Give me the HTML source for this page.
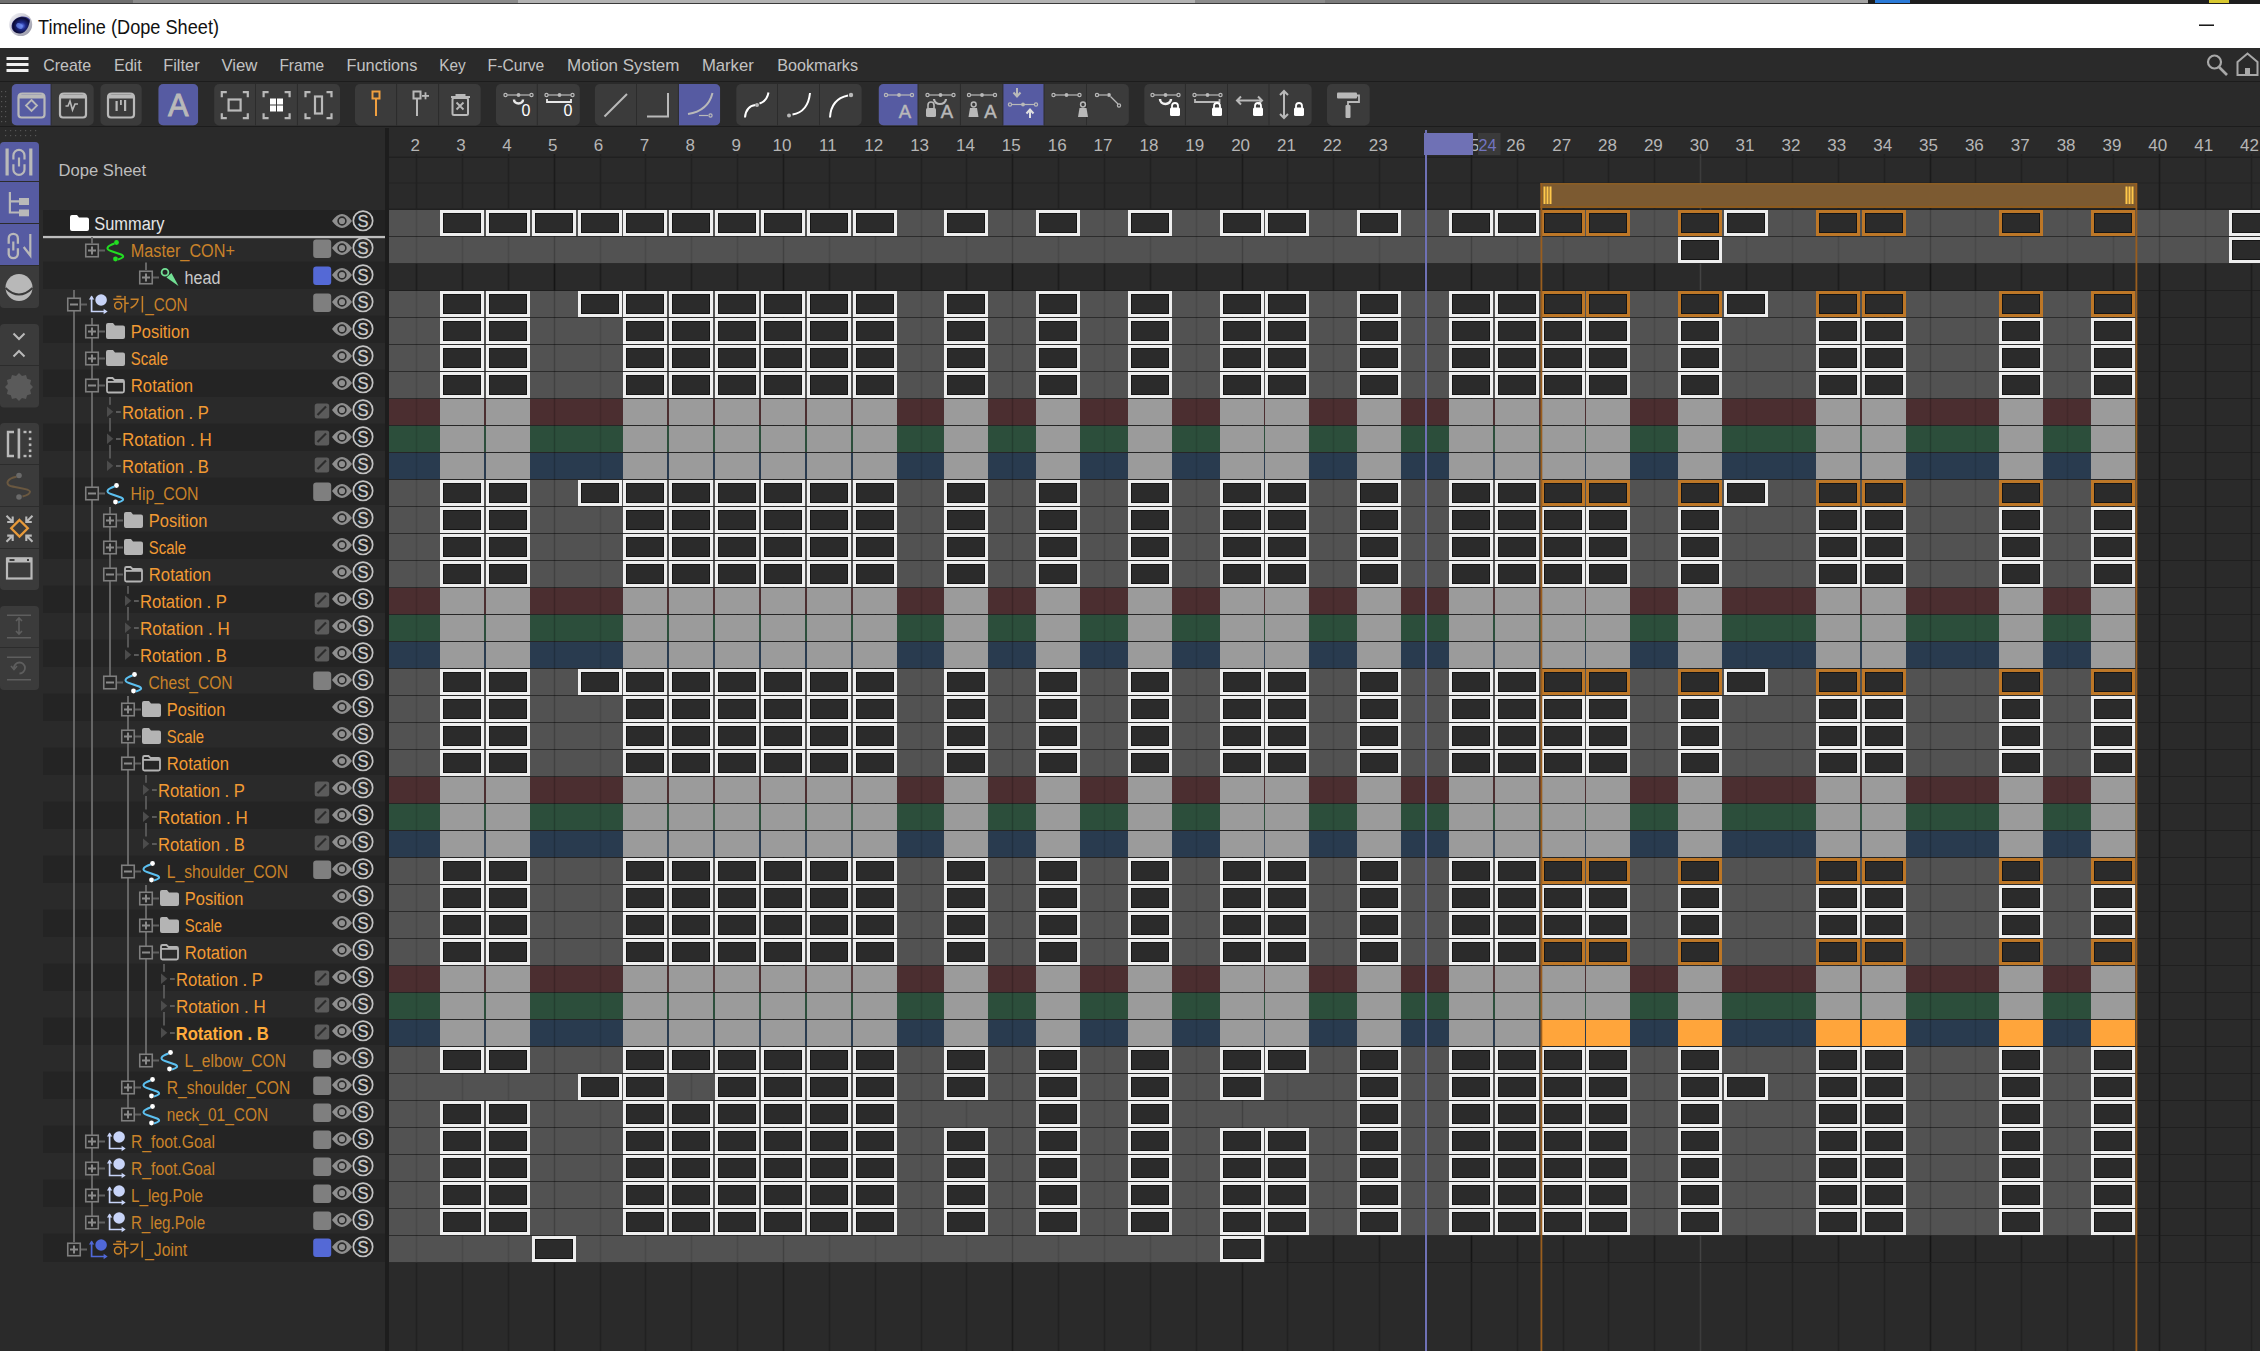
<!DOCTYPE html>
<html><head><meta charset="utf-8"><title>Timeline (Dope Sheet)</title>
<style>
html,body{margin:0;padding:0;width:2260px;height:1351px;overflow:hidden;background:#282828;}
svg{display:block;font-family:"Liberation Sans",sans-serif;}
</style></head><body>
<svg width="2260" height="1351" viewBox="0 0 2260 1351">
<rect x="0" y="0" width="2260" height="1351" fill="#2a2a2a"/>
<rect x="0" y="0" width="133" height="4" fill="#6f6f6f"/>
<rect x="133" y="0" width="385" height="4" fill="#8b8b8b"/>
<rect x="518" y="0" width="677" height="4" fill="#b3b3b3"/>
<rect x="1195" y="0" width="130" height="4" fill="#8c8c8c"/>
<rect x="1325" y="0" width="275" height="4" fill="#7b7b7b"/>
<rect x="1600" y="0" width="268" height="4" fill="#a3a3a3"/>
<rect x="1868" y="0" width="392" height="4" fill="#1e1e1e"/>
<rect x="1875" y="0" width="35" height="3" fill="#2a7ad8"/>
<rect x="2209" y="0" width="20" height="3" fill="#d8c830"/>
<rect x="0" y="3" width="1868" height="1" fill="#3a3a3a"/>
<rect x="0" y="4" width="2260" height="44" fill="#ffffff"/>
<defs><radialGradient id="c4d" cx="0.55" cy="0.55" r="0.6"><stop offset="0" stop-color="#6a88ff"/><stop offset="0.35" stop-color="#1e2a8a"/><stop offset="0.8" stop-color="#0a0a30"/><stop offset="1" stop-color="#5050c0"/></radialGradient><linearGradient id="c4s" x1="0" y1="0" x2="1" y2="1"><stop offset="0" stop-color="#f8f8fc"/><stop offset="1" stop-color="#9090a0"/></linearGradient></defs>
<circle cx="20.7" cy="24.5" r="11.5" fill="url(#c4s)"/>
<path d="M 30 19.5 C 26 14.5 15 16 12 23.5 C 10 30 15 34 20.5 33.5 C 26 33 29.5 26 30 19.5 Z" fill="url(#c4d)"/>
<ellipse cx="19.5" cy="26" rx="3.5" ry="2.5" fill="#7090f0" opacity="0.7" transform="rotate(30 19.5 26)"/>
<text x="38" y="34.2" font-size="19.3" fill="#111111" textLength="181" lengthAdjust="spacingAndGlyphs">Timeline (Dope Sheet)</text>
<rect x="2199" y="24.5" width="15" height="1.4" fill="#000000"/>
<rect x="0" y="48" width="2260" height="33" fill="#2a2a2a"/>
<rect x="6.5" y="57" width="22" height="3" fill="#f0f0f0"/>
<rect x="6.5" y="63" width="22" height="3" fill="#f0f0f0"/>
<rect x="6.5" y="69" width="22" height="3" fill="#f0f0f0"/>
<text x="43.2" y="70.8" font-size="17" fill="#c2c2c2" textLength="47.9" lengthAdjust="spacingAndGlyphs">Create</text>
<text x="113.9" y="70.8" font-size="17" fill="#c2c2c2" textLength="27.8" lengthAdjust="spacingAndGlyphs">Edit</text>
<text x="163.2" y="70.8" font-size="17" fill="#c2c2c2" textLength="36.4" lengthAdjust="spacingAndGlyphs">Filter</text>
<text x="221.4" y="70.8" font-size="17" fill="#c2c2c2" textLength="36" lengthAdjust="spacingAndGlyphs">View</text>
<text x="279.4" y="70.8" font-size="17" fill="#c2c2c2" textLength="44.8" lengthAdjust="spacingAndGlyphs">Frame</text>
<text x="346.6" y="70.8" font-size="17" fill="#c2c2c2" textLength="70.7" lengthAdjust="spacingAndGlyphs">Functions</text>
<text x="439.3" y="70.8" font-size="17" fill="#c2c2c2" textLength="26.5" lengthAdjust="spacingAndGlyphs">Key</text>
<text x="487.6" y="70.8" font-size="17" fill="#c2c2c2" textLength="56.6" lengthAdjust="spacingAndGlyphs">F-Curve</text>
<text x="567" y="70.8" font-size="17" fill="#c2c2c2" textLength="112.5" lengthAdjust="spacingAndGlyphs">Motion System</text>
<text x="701.9" y="70.8" font-size="17" fill="#c2c2c2" textLength="51.9" lengthAdjust="spacingAndGlyphs">Marker</text>
<text x="777.2" y="70.8" font-size="17" fill="#c2c2c2" textLength="80.8" lengthAdjust="spacingAndGlyphs">Bookmarks</text>
<circle cx="2214.5" cy="62" r="6.5" fill="none" stroke="#a8a8a8" stroke-width="2.2"/>
<line x1="2219" y1="67" x2="2227" y2="75" stroke="#a8a8a8" stroke-width="2.6"/>
<path d="M 2237.5 75 L 2237.5 62 L 2247.5 53.5 L 2257.5 62 L 2257.5 75 Z" fill="none" stroke="#a8a8a8" stroke-width="2"/>
<rect x="2245" y="68" width="5" height="7" fill="#a8a8a8"/>
<rect x="0" y="81" width="2260" height="46" fill="#2a2a2a"/>
<rect x="0" y="81" width="2260" height="1" fill="#1c1c1c"/>
<rect x="0" y="126" width="2260" height="1" fill="#1c1c1c"/>
<rect x="1" y="91" width="1.2" height="1.2" fill="#555"/>
<rect x="5" y="91" width="1.2" height="1.2" fill="#555"/>
<rect x="1" y="96" width="1.2" height="1.2" fill="#555"/>
<rect x="5" y="96" width="1.2" height="1.2" fill="#555"/>
<rect x="1" y="101" width="1.2" height="1.2" fill="#555"/>
<rect x="5" y="101" width="1.2" height="1.2" fill="#555"/>
<rect x="1" y="106" width="1.2" height="1.2" fill="#555"/>
<rect x="5" y="106" width="1.2" height="1.2" fill="#555"/>
<rect x="1" y="111" width="1.2" height="1.2" fill="#555"/>
<rect x="5" y="111" width="1.2" height="1.2" fill="#555"/>
<rect x="1" y="116" width="1.2" height="1.2" fill="#555"/>
<rect x="5" y="116" width="1.2" height="1.2" fill="#555"/>
<rect x="1" y="121" width="1.2" height="1.2" fill="#555"/>
<rect x="5" y="121" width="1.2" height="1.2" fill="#555"/>
<rect x="11.6" y="84" width="82.1" height="41.5" fill="#3b3b3b" rx="5"/>
<clipPath id="cg11_0"><rect x="11.6" y="84" width="82.1" height="41.5" rx="5"/></clipPath>
<rect x="11.6" y="84" width="39.5" height="41.5" fill="#565ba2" clip-path="url(#cg11_0)"/>
<rect x="50.6" y="84" width="1" height="41.5" fill="#2c2c2c"/>
<rect x="100.4" y="84" width="41.3" height="41.5" fill="#3b3b3b" rx="5"/>
<rect x="158.3" y="84" width="39.9" height="41.5" fill="#3b3b3b" rx="5"/>
<clipPath id="cg158_0"><rect x="158.3" y="84" width="39.9" height="41.5" rx="5"/></clipPath>
<rect x="158.3" y="84" width="39.9" height="41.5" fill="#565ba2" clip-path="url(#cg158_0)"/>
<rect x="214.2" y="84" width="125.8" height="41.5" fill="#3b3b3b" rx="5"/>
<rect x="255" y="84" width="1" height="41.5" fill="#2c2c2c"/>
<rect x="296.9" y="84" width="1" height="41.5" fill="#2c2c2c"/>
<rect x="355" y="84" width="125.7" height="41.5" fill="#3b3b3b" rx="5"/>
<rect x="396.1" y="84" width="1" height="41.5" fill="#2c2c2c"/>
<rect x="438.1" y="84" width="1" height="41.5" fill="#2c2c2c"/>
<rect x="496" y="84" width="83.8" height="41.5" fill="#3b3b3b" rx="5"/>
<rect x="536.8" y="84" width="1" height="41.5" fill="#2c2c2c"/>
<rect x="594.9" y="84" width="125.3" height="41.5" fill="#3b3b3b" rx="5"/>
<clipPath id="cg594_2"><rect x="594.9" y="84" width="125.3" height="41.5" rx="5"/></clipPath>
<rect x="678.4" y="84" width="41.8" height="41.5" fill="#565ba2" clip-path="url(#cg594_2)"/>
<rect x="636" y="84" width="1" height="41.5" fill="#2c2c2c"/>
<rect x="677.9" y="84" width="1" height="41.5" fill="#2c2c2c"/>
<rect x="736.3" y="84" width="125.3" height="41.5" fill="#3b3b3b" rx="5"/>
<rect x="777" y="84" width="1" height="41.5" fill="#2c2c2c"/>
<rect x="819" y="84" width="1" height="41.5" fill="#2c2c2c"/>
<rect x="878.6" y="84" width="250.2" height="41.5" fill="#3b3b3b" rx="5"/>
<clipPath id="cg878_0"><rect x="878.6" y="84" width="250.2" height="41.5" rx="5"/></clipPath>
<rect x="878.6" y="84" width="39.4" height="41.5" fill="#565ba2" clip-path="url(#cg878_0)"/>
<clipPath id="cg878_3"><rect x="878.6" y="84" width="250.2" height="41.5" rx="5"/></clipPath>
<rect x="1002.9" y="84" width="41.1" height="41.5" fill="#565ba2" clip-path="url(#cg878_3)"/>
<rect x="917.5" y="84" width="1" height="41.5" fill="#2c2c2c"/>
<rect x="959.9" y="84" width="1" height="41.5" fill="#2c2c2c"/>
<rect x="1002.4" y="84" width="1" height="41.5" fill="#2c2c2c"/>
<rect x="1043.5" y="84" width="1" height="41.5" fill="#2c2c2c"/>
<rect x="1086" y="84" width="1" height="41.5" fill="#2c2c2c"/>
<rect x="1144.3" y="84" width="167.3" height="41.5" fill="#3b3b3b" rx="5"/>
<rect x="1184.9" y="84" width="1" height="41.5" fill="#2c2c2c"/>
<rect x="1227" y="84" width="1" height="41.5" fill="#2c2c2c"/>
<rect x="1268.5" y="84" width="1" height="41.5" fill="#2c2c2c"/>
<rect x="1327" y="84" width="42.7" height="41.5" fill="#3b3b3b" rx="5"/>
<path d="M 18.5 97.5 Q 18.5 93.5 22.5 93.5 L 40.5 93.5 Q 44.5 93.5 44.5 97.5 L 44.5 114.5 Q 44.5 117.5 41.5 117.5 L 21.5 117.5 Q 18.5 117.5 18.5 114.5 Z" fill="none" stroke="#b9b9b9" stroke-width="2.2"/>
<rect x="18.5" y="94.5" width="26" height="4" fill="#b9b9b9" rx="1"/>
<path d="M 31.5 100 L 37 105.5 L 31.5 111 L 26 105.5 Z" fill="none" stroke="#b9b9b9" stroke-width="1.8"/>
<path d="M 60 97.5 Q 60 93.5 64 93.5 L 82 93.5 Q 86 93.5 86 97.5 L 86 114.5 Q 86 117.5 83 117.5 L 63 117.5 Q 60 117.5 60 114.5 Z" fill="none" stroke="#b9b9b9" stroke-width="2.2"/>
<rect x="60" y="94.5" width="26" height="4" fill="#b9b9b9" rx="1"/>
<path d="M 65.5 106 L 68 106 L 70 101 L 72.5 110 L 75 104 L 78 104" fill="none" stroke="#b9b9b9" stroke-width="1.6"/>
<path d="M 108 97.5 Q 108 93.5 112 93.5 L 130 93.5 Q 134 93.5 134 97.5 L 134 114.5 Q 134 117.5 131 117.5 L 111 117.5 Q 108 117.5 108 114.5 Z" fill="none" stroke="#b9b9b9" stroke-width="2.2"/>
<rect x="108" y="94.5" width="26" height="4" fill="#b9b9b9" rx="1"/>
<rect x="115.5" y="101" width="2.2" height="10" fill="#b9b9b9"/>
<rect x="120" y="100" width="1.8" height="5" fill="#b9b9b9"/>
<rect x="124" y="100" width="2.2" height="11" fill="#b9b9b9"/>
<text x="178.2" y="116.2" font-size="31" fill="#b9b9b9" text-anchor="middle" textLength="20.5" lengthAdjust="spacingAndGlyphs" stroke="#b9b9b9" stroke-width="0.9">A</text>
<path d="M 221.8 97.2 L 221.8 92.2 L 226.8 92.2" fill="none" stroke="#b9b9b9" stroke-width="2.2"/>
<path d="M 221.8 113.2 L 221.8 118.2 L 226.8 118.2" fill="none" stroke="#b9b9b9" stroke-width="2.2"/>
<path d="M 247.8 97.2 L 247.8 92.2 L 242.8 92.2" fill="none" stroke="#b9b9b9" stroke-width="2.2"/>
<path d="M 247.8 113.2 L 247.8 118.2 L 242.8 118.2" fill="none" stroke="#b9b9b9" stroke-width="2.2"/>
<rect x="228.6" y="99.5" width="12" height="11" fill="none" stroke="#b9b9b9" stroke-width="2.2"/>
<path d="M 263.6 97.2 L 263.6 92.2 L 268.6 92.2" fill="none" stroke="#b9b9b9" stroke-width="2.2"/>
<path d="M 263.6 113.2 L 263.6 118.2 L 268.6 118.2" fill="none" stroke="#b9b9b9" stroke-width="2.2"/>
<path d="M 289.6 97.2 L 289.6 92.2 L 284.6 92.2" fill="none" stroke="#b9b9b9" stroke-width="2.2"/>
<path d="M 289.6 113.2 L 289.6 118.2 L 284.6 118.2" fill="none" stroke="#b9b9b9" stroke-width="2.2"/>
<rect x="270" y="98.5" width="6" height="6" fill="#ffffff"/>
<rect x="270" y="105.5" width="6" height="6" fill="#ffffff"/>
<rect x="277" y="98.5" width="6" height="6" fill="#ffffff"/>
<rect x="277" y="105.5" width="6" height="6" fill="#ffffff"/>
<path d="M 305.5 97.2 L 305.5 92.2 L 310.5 92.2" fill="none" stroke="#b9b9b9" stroke-width="2.2"/>
<path d="M 305.5 113.2 L 305.5 118.2 L 310.5 118.2" fill="none" stroke="#b9b9b9" stroke-width="2.2"/>
<path d="M 331.5 97.2 L 331.5 92.2 L 326.5 92.2" fill="none" stroke="#b9b9b9" stroke-width="2.2"/>
<path d="M 331.5 113.2 L 331.5 118.2 L 326.5 118.2" fill="none" stroke="#b9b9b9" stroke-width="2.2"/>
<rect x="315" y="96.5" width="7" height="17" fill="none" stroke="#b9b9b9" stroke-width="2.2"/>
<rect x="372.5" y="91.5" width="7" height="7" fill="none" stroke="#f0a040" stroke-width="2"/>
<rect x="375" y="99" width="2" height="17" fill="#f0a040"/>
<rect x="413.5" y="91.5" width="7" height="7" fill="none" stroke="#b9b9b9" stroke-width="2"/>
<rect x="416" y="99" width="2" height="17" fill="#b9b9b9"/>
<rect x="422" y="95" width="7" height="1.8" fill="#b9b9b9"/>
<rect x="424.6" y="92.3" width="1.8" height="7" fill="#b9b9b9"/>
<path d="M 451 97 L 470 97" fill="none" stroke="#b9b9b9" stroke-width="2"/>
<rect x="455.5" y="94" width="10" height="2" fill="#b9b9b9"/>
<rect x="452.5" y="98" width="15.5" height="17" fill="none" rx="1.5" stroke="#b9b9b9" stroke-width="2"/>
<path d="M 456.5 102.5 L 463.5 109.5 M 463.5 102.5 L 456.5 109.5" fill="none" stroke="#b9b9b9" stroke-width="1.8"/>
<circle cx="505.5" cy="95" r="1.6" fill="none" stroke="#b9b9b9" stroke-width="1.2"/>
<circle cx="518.5" cy="95" r="1.9" fill="#b9b9b9"/>
<circle cx="531.5" cy="95" r="1.6" fill="none" stroke="#b9b9b9" stroke-width="1.2"/>
<line x1="507.1" y1="95" x2="529.9" y2="95" stroke="#b9b9b9" stroke-width="1.2"/>
<path d="M 514 99.5 A 4.5 4 0 0 0 523 99.5" fill="none" stroke="#e8e8e8" stroke-width="2.5"/>
<text x="526" y="116.3" font-size="16" fill="#ffffff" text-anchor="middle">0</text>
<circle cx="546.5" cy="95" r="1.6" fill="none" stroke="#b9b9b9" stroke-width="1.2"/>
<circle cx="559.5" cy="95" r="1.9" fill="#b9b9b9"/>
<circle cx="572.5" cy="95" r="1.6" fill="none" stroke="#b9b9b9" stroke-width="1.2"/>
<line x1="548.1" y1="95" x2="570.9" y2="95" stroke="#b9b9b9" stroke-width="1.2"/>
<path d="M 547 99 L 547 102 L 571 102 L 571 99" fill="none" stroke="#e8e8e8" stroke-width="1.8"/>
<text x="568" y="116.3" font-size="16" fill="#ffffff" text-anchor="middle">0</text>
<line x1="604.5" y1="116.5" x2="627" y2="94" stroke="#b9b9b9" stroke-width="2"/>
<path d="M 647 116.5 L 668 116.5 L 668 93" fill="none" stroke="#b9b9b9" stroke-width="2"/>
<path d="M 688 114 Q 708 111 712.5 93" fill="none" stroke="#b9b9b9" stroke-width="2"/>
<path d="M 699 115.5 L 708 115.5" fill="none" stroke="#b9b9b9" stroke-width="1.2"/>
<circle cx="710.5" cy="115.5" r="1.6" fill="none" stroke="#b9b9b9" stroke-width="1.2"/>
<path d="M 745 117.5 Q 746 106 755.5 105 M 759.5 103.5 Q 767 101 768.5 92.5" fill="none" stroke="#ffffff" stroke-width="2"/>
<circle cx="757" cy="105" r="2" fill="#b9b9b9"/>
<path d="M 792.5 114.5 Q 808 112 810 93" fill="none" stroke="#ffffff" stroke-width="2"/>
<circle cx="789" cy="115.5" r="2" fill="#b9b9b9"/>
<path d="M 830 117.5 Q 831 99 848 95.5" fill="none" stroke="#ffffff" stroke-width="2"/>
<circle cx="851" cy="95" r="2.2" fill="#b9b9b9"/>
<circle cx="886" cy="95" r="1.6" fill="none" stroke="#b9b9b9" stroke-width="1.2"/>
<circle cx="899" cy="95" r="1.9" fill="#b9b9b9"/>
<circle cx="912" cy="95" r="1.6" fill="none" stroke="#b9b9b9" stroke-width="1.2"/>
<line x1="887.6" y1="95" x2="910.4" y2="95" stroke="#b9b9b9" stroke-width="1.2"/>
<text x="904.8" y="117.5" font-size="18.5" fill="#b9b9b9" text-anchor="middle" stroke="#b9b9b9" stroke-width="0.5">A</text>
<circle cx="927.5" cy="95" r="1.6" fill="none" stroke="#b9b9b9" stroke-width="1.2"/>
<circle cx="940.5" cy="95" r="1.9" fill="#b9b9b9"/>
<circle cx="953.5" cy="95" r="1.6" fill="none" stroke="#b9b9b9" stroke-width="1.2"/>
<line x1="929.1" y1="95" x2="951.9" y2="95" stroke="#b9b9b9" stroke-width="1.2"/>
<path d="M 934 99 A 6 5 0 0 0 946 99" fill="none" stroke="#b9b9b9" stroke-width="2.2"/>
<rect x="926" y="108" width="10" height="9" fill="#b9b9b9" rx="1.5"/>
<path d="M 928 108 L 928 105 A 3 3 0 0 1 934 105 L 934 108" fill="none" stroke="#b9b9b9" stroke-width="1.6"/>
<text x="947" y="117.5" font-size="18.5" fill="#b9b9b9" text-anchor="middle" stroke="#b9b9b9" stroke-width="0.5">A</text>
<circle cx="969" cy="95" r="1.6" fill="none" stroke="#b9b9b9" stroke-width="1.2"/>
<circle cx="982" cy="95" r="1.9" fill="#b9b9b9"/>
<circle cx="995" cy="95" r="1.6" fill="none" stroke="#b9b9b9" stroke-width="1.2"/>
<line x1="970.6" y1="95" x2="993.4" y2="95" stroke="#b9b9b9" stroke-width="1.2"/>
<path d="M 968.5 117 L 970 108 L 977 108 L 978.5 117 Z" fill="#b9b9b9"/>
<circle cx="973.7" cy="104.5" r="2.4" fill="none" stroke="#b9b9b9" stroke-width="1.5"/>
<text x="990.5" y="117.5" font-size="18.5" fill="#b9b9b9" text-anchor="middle" stroke="#b9b9b9" stroke-width="0.5">A</text>
<path d="M 1017 88 L 1017 96 M 1013.5 92.5 L 1017 96.5 L 1020.5 92.5" fill="none" stroke="#b9b9b9" stroke-width="2"/>
<circle cx="1010" cy="104.5" r="1.6" fill="none" stroke="#b9b9b9" stroke-width="1.2"/>
<circle cx="1023" cy="104.5" r="1.9" fill="#b9b9b9"/>
<circle cx="1036" cy="104.5" r="1.6" fill="none" stroke="#b9b9b9" stroke-width="1.2"/>
<line x1="1011.6" y1="104.5" x2="1034.4" y2="104.5" stroke="#b9b9b9" stroke-width="1.2"/>
<path d="M 1030 118 L 1030 110 M 1026.5 113.5 L 1030 109.5 L 1033.5 113.5" fill="none" stroke="#e0e0e0" stroke-width="2"/>
<circle cx="1053.5" cy="95" r="1.6" fill="none" stroke="#b9b9b9" stroke-width="1.2"/>
<circle cx="1066.5" cy="95" r="1.9" fill="#b9b9b9"/>
<circle cx="1079.5" cy="95" r="1.6" fill="none" stroke="#b9b9b9" stroke-width="1.2"/>
<line x1="1055.1" y1="95" x2="1077.9" y2="95" stroke="#b9b9b9" stroke-width="1.2"/>
<path d="M 1078 117 L 1079.5 108 L 1086.5 108 L 1088 117 Z" fill="#b9b9b9"/>
<circle cx="1083" cy="104.5" r="2.4" fill="none" stroke="#b9b9b9" stroke-width="1.5"/>
<circle cx="1097" cy="95" r="1.6" fill="none" stroke="#b9b9b9" stroke-width="1.2"/>
<line x1="1098.6" y1="95" x2="1107" y2="95" stroke="#b9b9b9" stroke-width="1.2"/>
<circle cx="1109" cy="95" r="1.9" fill="#b9b9b9"/>
<line x1="1110.5" y1="96.5" x2="1118" y2="104" stroke="#b9b9b9" stroke-width="1.2"/>
<circle cx="1119" cy="105.5" r="1.6" fill="none" stroke="#b9b9b9" stroke-width="1.2"/>
<circle cx="1152.5" cy="95" r="1.6" fill="none" stroke="#b9b9b9" stroke-width="1.2"/>
<circle cx="1165.5" cy="95" r="1.9" fill="#b9b9b9"/>
<circle cx="1178.5" cy="95" r="1.6" fill="none" stroke="#b9b9b9" stroke-width="1.2"/>
<line x1="1154.1" y1="95" x2="1176.9" y2="95" stroke="#b9b9b9" stroke-width="1.2"/>
<path d="M 1160 99 A 5.5 5 0 0 0 1171 99" fill="none" stroke="#f0f0f0" stroke-width="2.5"/>
<rect x="1170" y="107.5" width="10" height="8.5" fill="#ffffff" rx="1.5"/>
<path d="M 1172 108 L 1172 106 A 3 3 0 0 1 1178 106 L 1178 108" fill="none" stroke="#ffffff" stroke-width="1.8"/>
<circle cx="1194.5" cy="95" r="1.6" fill="none" stroke="#b9b9b9" stroke-width="1.2"/>
<circle cx="1207.5" cy="95" r="1.9" fill="#b9b9b9"/>
<circle cx="1220.5" cy="95" r="1.6" fill="none" stroke="#b9b9b9" stroke-width="1.2"/>
<line x1="1196.1" y1="95" x2="1218.9" y2="95" stroke="#b9b9b9" stroke-width="1.2"/>
<path d="M 1195 99 L 1195 102 L 1219.5 102 L 1219.5 99" fill="none" stroke="#b9b9b9" stroke-width="1.8"/>
<rect x="1212" y="107.5" width="10" height="8.5" fill="#ffffff" rx="1.5"/>
<path d="M 1214 108 L 1214 106 A 3 3 0 0 1 1220 106 L 1220 108" fill="none" stroke="#ffffff" stroke-width="1.8"/>
<path d="M 1237 100.5 L 1262 100.5 M 1241 96.5 L 1237 100.5 L 1241 104.5 M 1258 96.5 L 1262 100.5 L 1258 104.5" fill="none" stroke="#b9b9b9" stroke-width="2"/>
<rect x="1253" y="107.5" width="10" height="8.5" fill="#ffffff" rx="1.5"/>
<path d="M 1255 108 L 1255 106 A 3 3 0 0 1 1261 106 L 1261 108" fill="none" stroke="#ffffff" stroke-width="1.8"/>
<path d="M 1284 91 L 1284 118 M 1280 95 L 1284 91 L 1288 95 M 1280 114 L 1284 118 L 1288 114" fill="none" stroke="#b9b9b9" stroke-width="2"/>
<rect x="1294" y="107.5" width="10" height="8.5" fill="#ffffff" rx="1.5"/>
<path d="M 1296 108 L 1296 106 A 3 3 0 0 1 1302 106 L 1302 108" fill="none" stroke="#ffffff" stroke-width="1.8"/>
<rect x="1337" y="92.5" width="20" height="6" fill="#b9b9b9" rx="1"/>
<path d="M 1357 95.5 L 1359 95.5 L 1359 102 L 1348 102 L 1348 106" fill="none" stroke="#b9b9b9" stroke-width="1.8"/>
<rect x="1345.5" y="105" width="5" height="13" fill="#b9b9b9" rx="1"/>
<rect x="5" y="130" width="1.2" height="1.2" fill="#555"/>
<rect x="5" y="135" width="1.2" height="1.2" fill="#555"/>
<rect x="10" y="130" width="1.2" height="1.2" fill="#555"/>
<rect x="10" y="135" width="1.2" height="1.2" fill="#555"/>
<rect x="15" y="130" width="1.2" height="1.2" fill="#555"/>
<rect x="15" y="135" width="1.2" height="1.2" fill="#555"/>
<rect x="20" y="130" width="1.2" height="1.2" fill="#555"/>
<rect x="20" y="135" width="1.2" height="1.2" fill="#555"/>
<rect x="25" y="130" width="1.2" height="1.2" fill="#555"/>
<rect x="25" y="135" width="1.2" height="1.2" fill="#555"/>
<rect x="30" y="130" width="1.2" height="1.2" fill="#555"/>
<rect x="30" y="135" width="1.2" height="1.2" fill="#555"/>
<rect x="35" y="130" width="1.2" height="1.2" fill="#555"/>
<rect x="35" y="135" width="1.2" height="1.2" fill="#555"/>
<rect x="0" y="142" width="39" height="166" fill="#3b3b3b" rx="4"/>
<clipPath id="vg142_0"><rect x="0" y="142" width="39" height="166" rx="4"/></clipPath>
<rect x="0" y="142" width="39" height="39.5" fill="#565ba2" clip-path="url(#vg142_0)"/>
<clipPath id="vg142_1"><rect x="0" y="142" width="39" height="166" rx="4"/></clipPath>
<rect x="0" y="181.5" width="39" height="42" fill="#565ba2" clip-path="url(#vg142_1)"/>
<clipPath id="vg142_2"><rect x="0" y="142" width="39" height="166" rx="4"/></clipPath>
<rect x="0" y="223.5" width="39" height="42" fill="#565ba2" clip-path="url(#vg142_2)"/>
<rect x="0" y="181" width="39" height="1" fill="#2c2c2c"/>
<rect x="0" y="223" width="39" height="1" fill="#2c2c2c"/>
<rect x="0" y="265" width="39" height="1" fill="#2c2c2c"/>
<rect x="0" y="324" width="39" height="83.5" fill="#3b3b3b" rx="4"/>
<rect x="0" y="365" width="39" height="1" fill="#2c2c2c"/>
<rect x="0" y="423" width="39" height="167" fill="#3b3b3b" rx="4"/>
<rect x="0" y="464" width="39" height="1" fill="#2c2c2c"/>
<rect x="0" y="506" width="39" height="1" fill="#2c2c2c"/>
<rect x="0" y="548" width="39" height="1" fill="#2c2c2c"/>
<rect x="0" y="606" width="39" height="84" fill="#3b3b3b" rx="4"/>
<rect x="0" y="647" width="39" height="1" fill="#2c2c2c"/>
<rect x="5.5" y="148.5" width="3.2" height="27" fill="#b9b9b9"/>
<rect x="29.2" y="148.5" width="3.2" height="27" fill="#b9b9b9"/>
<path d="M 13.4 159.5 L 13.4 155.4 A 5.55 5.55 0 0 1 24.5 155.4 L 24.5 159.5 M 13.4 164.2 L 13.4 169.4 A 5.55 5.55 0 0 0 24.5 169.4 L 24.5 164.2" fill="none" stroke="#b9b9b9" stroke-width="2.2"/>
<line x1="19" y1="157.5" x2="19" y2="166.5" stroke="#b9b9b9" stroke-width="2.2"/>
<path d="M 9.9 192 L 9.9 212.5 L 19 212.5 M 9.9 201.3 L 19 201.3" fill="none" stroke="#b9b9b9" stroke-width="2.2"/>
<rect x="19" y="198" width="10" height="7" fill="#b9b9b9"/>
<rect x="19" y="209.5" width="10" height="6.8" fill="#b9b9b9"/>
<path d="M 8.7 243.7 L 8.7 238.4 A 4.5 4.5 0 0 1 17.9 238.4 L 17.9 243.7 M 8.7 248.2 L 8.7 253.6 A 4.5 4.5 0 0 0 17.9 253.6 L 17.9 248.2" fill="none" stroke="#b9b9b9" stroke-width="2.3"/>
<line x1="13.3" y1="241.5" x2="13.3" y2="250.5" stroke="#b9b9b9" stroke-width="2.2"/>
<path d="M 30.3 234 L 30.3 255.5 L 23.7 247" fill="none" stroke="#b9b9b9" stroke-width="2.2"/>
<clipPath id="sph"><circle cx="19" cy="287.5" r="13.5"/></clipPath>
<circle cx="19" cy="287.5" r="13.5" fill="#b8b8b8"/>
<path d="M 5.5 288 Q 19 301 32.5 288" fill="none" stroke="#3b3b3b" stroke-width="2"/>
<path d="M 13.5 333.5 L 19 339 L 24.5 333.5" fill="none" stroke="#b9b9b9" stroke-width="2"/>
<path d="M 13.5 356.5 L 19 351 L 24.5 356.5" fill="none" stroke="#b9b9b9" stroke-width="2"/>
<path d="M 33.00 387.00 L 30.11 389.98 L 31.12 394.00 L 27.13 395.13 L 26.00 399.12 L 21.98 398.11 L 19.00 401.00 L 16.02 398.11 L 12.00 399.12 L 10.87 395.13 L 6.88 394.00 L 7.89 389.98 L 5.00 387.00 L 7.89 384.02 L 6.88 380.00 L 10.87 378.87 L 12.00 374.88 L 16.02 375.89 L 19.00 373.00 L 21.98 375.89 L 26.00 374.88 L 27.13 378.87 L 31.12 380.00 L 30.11 384.02 Z" fill="#5a5a5a"/>
<path d="M 14 432 L 8 432 L 8 456 L 14 456" fill="none" stroke="#b9b9b9" stroke-width="2.4"/>
<rect x="17.6" y="428.5" width="2.6" height="30" fill="#b9b9b9"/>
<rect x="28.8" y="437.5" width="2.6" height="2.6" fill="#b9b9b9"/>
<rect x="28.8" y="443.5" width="2.6" height="2.6" fill="#b9b9b9"/>
<rect x="28.8" y="449.5" width="2.6" height="2.6" fill="#b9b9b9"/>
<rect x="23.5" y="430.8" width="3" height="2.4" fill="#b9b9b9"/>
<rect x="28.8" y="430.8" width="2.6" height="2.4" fill="#b9b9b9"/>
<rect x="23.5" y="454.8" width="3" height="2.4" fill="#b9b9b9"/>
<rect x="28.8" y="454.8" width="2.6" height="2.4" fill="#b9b9b9"/>
<path d="M 16.5 476.8 C 7 478.5 5 484 10.5 486 C 15 487.5 30 488.5 30 491.5 C 30 494 26.5 495.5 22.5 496.5" fill="none" stroke="#6a5840" stroke-width="2"/>
<circle cx="19" cy="475.5" r="2.8" fill="#6a6a6a"/>
<circle cx="19" cy="497" r="2.8" fill="#6a6a6a"/>
<path d="M 19.5 520 L 27.8 528.3 L 19.5 536.6 L 11.2 528.3 Z" fill="none" stroke="#e89a3a" stroke-width="2.3"/>
<path d="M 6.5 515.8 L 12.7 522.0 M 12.7 516.5 L 12.7 522.0 L 7.2 522.0" fill="none" stroke="#b9b9b9" stroke-width="2.1"/>
<path d="M 32.5 515.8 L 26.3 522.0 M 26.3 516.5 L 26.3 522.0 L 31.8 522.0" fill="none" stroke="#b9b9b9" stroke-width="2.1"/>
<path d="M 6.5 541.8 L 12.7 535.5999999999999 M 12.7 541.1 L 12.7 535.5999999999999 L 7.2 535.5999999999999" fill="none" stroke="#b9b9b9" stroke-width="2.1"/>
<path d="M 32.5 541.8 L 26.3 535.5999999999999 M 26.3 541.1 L 26.3 535.5999999999999 L 31.8 535.5999999999999" fill="none" stroke="#b9b9b9" stroke-width="2.1"/>
<rect x="7" y="558.5" width="24.5" height="20" fill="none" stroke="#b9b9b9" stroke-width="2.2"/>
<rect x="7" y="557.5" width="24.5" height="5" fill="#b9b9b9"/>
<rect x="9.5" y="559" width="5" height="2" fill="#3b3b3b"/>
<rect x="27" y="559" width="2" height="2" fill="#3b3b3b"/>
<rect x="7" y="614.5" width="24" height="1.5" fill="#5e5e5e"/>
<rect x="7" y="637" width="24" height="1.5" fill="#5e5e5e"/>
<path d="M 19 618 L 19 634 M 16 621 L 19 618 L 22 621 M 16 631 L 19 634 L 22 631" fill="none" stroke="#5e5e5e" stroke-width="1.6"/>
<rect x="7" y="656.5" width="24" height="1.5" fill="#5e5e5e"/>
<rect x="7" y="679" width="24" height="1.5" fill="#5e5e5e"/>
<path d="M 14 668 A 5.5 5.5 0 1 1 19.5 673.5" fill="none" stroke="#5e5e5e" stroke-width="1.8"/>
<path d="M 11 666 L 14 669.5 L 17 666" fill="none" stroke="#5e5e5e" stroke-width="1.6"/>
<rect x="43" y="128" width="342" height="1223" fill="#2a2a2a"/>
<text x="58.6" y="175.7" font-size="17" fill="#bdbdbd" textLength="87.6" lengthAdjust="spacingAndGlyphs">Dope Sheet</text>
<rect x="43" y="210" width="342" height="26" fill="#222222"/>
<rect x="43" y="238" width="342" height="23.8" fill="#2a2a2a"/>
<rect x="43" y="261.8" width="342" height="27" fill="#242424"/>
<rect x="43" y="288.8" width="342" height="27" fill="#2a2a2a"/>
<rect x="43" y="315.8" width="342" height="27" fill="#242424"/>
<rect x="43" y="342.8" width="342" height="27" fill="#2a2a2a"/>
<rect x="43" y="369.8" width="342" height="27" fill="#242424"/>
<rect x="43" y="396.8" width="342" height="27" fill="#2a2a2a"/>
<rect x="43" y="423.8" width="342" height="27" fill="#242424"/>
<rect x="43" y="450.8" width="342" height="27" fill="#2a2a2a"/>
<rect x="43" y="477.8" width="342" height="27" fill="#242424"/>
<rect x="43" y="504.8" width="342" height="27" fill="#2a2a2a"/>
<rect x="43" y="531.8" width="342" height="27" fill="#242424"/>
<rect x="43" y="558.8" width="342" height="27" fill="#2a2a2a"/>
<rect x="43" y="585.8" width="342" height="27" fill="#242424"/>
<rect x="43" y="612.8" width="342" height="27" fill="#2a2a2a"/>
<rect x="43" y="639.8" width="342" height="27" fill="#242424"/>
<rect x="43" y="666.8" width="342" height="27" fill="#2a2a2a"/>
<rect x="43" y="693.8" width="342" height="27" fill="#242424"/>
<rect x="43" y="720.8" width="342" height="27" fill="#2a2a2a"/>
<rect x="43" y="747.8" width="342" height="27" fill="#242424"/>
<rect x="43" y="774.8" width="342" height="27" fill="#2a2a2a"/>
<rect x="43" y="801.8" width="342" height="27" fill="#242424"/>
<rect x="43" y="828.8" width="342" height="27" fill="#2a2a2a"/>
<rect x="43" y="855.8" width="342" height="27" fill="#242424"/>
<rect x="43" y="882.8" width="342" height="27" fill="#2a2a2a"/>
<rect x="43" y="909.8" width="342" height="27" fill="#242424"/>
<rect x="43" y="936.8" width="342" height="27" fill="#2a2a2a"/>
<rect x="43" y="963.8" width="342" height="27" fill="#242424"/>
<rect x="43" y="990.8" width="342" height="27" fill="#2a2a2a"/>
<rect x="43" y="1017.8" width="342" height="27" fill="#242424"/>
<rect x="43" y="1044.8" width="342" height="27" fill="#2a2a2a"/>
<rect x="43" y="1071.8" width="342" height="27" fill="#242424"/>
<rect x="43" y="1098.8" width="342" height="27" fill="#2a2a2a"/>
<rect x="43" y="1125.8" width="342" height="27" fill="#242424"/>
<rect x="43" y="1152.8" width="342" height="27" fill="#2a2a2a"/>
<rect x="43" y="1179.8" width="342" height="27" fill="#242424"/>
<rect x="43" y="1206.8" width="342" height="27" fill="#2a2a2a"/>
<rect x="43" y="1233.8" width="342" height="28.2" fill="#242424"/>
<rect x="43" y="235.9" width="342" height="2.3" fill="#bdbdbd"/>
<rect x="91" y="237" width="2" height="6.5" fill="#666666"/>
<rect x="145" y="262.5" width="2" height="7.5" fill="#666666"/>
<rect x="73" y="290" width="2" height="952" fill="#666666"/>
<rect x="91" y="318" width="2" height="898" fill="#666666"/>
<rect x="109" y="507" width="2" height="169" fill="#666666"/>
<rect x="127" y="696" width="2" height="412" fill="#666666"/>
<rect x="145" y="885" width="2" height="169" fill="#666666"/>
<rect x="109" y="397" width="2" height="7.8" fill="#555555"/>
<rect x="109" y="418" width="2" height="13.5" fill="#555555"/>
<rect x="109" y="445" width="2" height="13.5" fill="#555555"/>
<rect x="127" y="586" width="2" height="7.8" fill="#555555"/>
<rect x="127" y="607" width="2" height="13.5" fill="#555555"/>
<rect x="127" y="634" width="2" height="13.5" fill="#555555"/>
<rect x="145" y="775" width="2" height="7.8" fill="#555555"/>
<rect x="145" y="796" width="2" height="13.5" fill="#555555"/>
<rect x="145" y="823" width="2" height="13.5" fill="#555555"/>
<rect x="163" y="964" width="2" height="7.8" fill="#555555"/>
<rect x="163" y="985" width="2" height="13.5" fill="#555555"/>
<rect x="163" y="1012" width="2" height="13.5" fill="#555555"/>
<path d="M 70 229 L 70 217 Q 70 215 72 215 L 77 215 L 79 217.5 L 87 217.5 Q 89 217.5 89 219.5 L 89 229 Q 89 231 87 231 L 72 231 Q 70 231 70 229 Z" fill="#ffffff"/>
<text x="94.3" y="230.1" font-size="17.6" fill="#e6e6e6" textLength="70.1" lengthAdjust="spacingAndGlyphs">Summary</text>
<path d="M 332 221 Q 342 207 352 221 Q 342 235 332 221 Z" fill="#8f8f8f"/>
<circle cx="342" cy="221" r="3.9" fill="#8f8f8f" stroke="#2a2a2a" stroke-width="1.6"/>
<circle cx="363" cy="220.8" r="9.7" fill="none" stroke="#c2c2c2" stroke-width="1.7"/>
<text x="363" y="226.9" font-size="16.5" fill="#cccccc" text-anchor="middle" stroke="#cccccc" stroke-width="0.3">S</text>
<rect x="85.75" y="244.25" width="12.5" height="12.5" fill="#262626" stroke="#7e7e7e" stroke-width="1.6"/>
<rect x="88" y="249.5" width="8" height="2" fill="#8a8a8a"/>
<rect x="91" y="246.5" width="2" height="8" fill="#8a8a8a"/>
<rect x="99" y="249.5" width="6" height="2" fill="#606060"/>
<path d="M 114.5 243.5 C 107 246 105 249 111 251 L 121 254.5 C 125 256.5 123 258 118 259.5" fill="none" stroke="#22dd22" stroke-width="2"/>
<circle cx="116.5" cy="242.5" r="2.4" fill="#22dd22"/>
<circle cx="115.5" cy="259" r="2.4" fill="#22dd22"/>
<text x="130.8" y="257.1" font-size="17.6" fill="#c98229" textLength="104.1" lengthAdjust="spacingAndGlyphs">Master_CON+</text>
<rect x="313.2" y="239.5" width="18" height="18.5" fill="#7f7f7f" rx="3"/>
<path d="M 332 248 Q 342 234 352 248 Q 342 262 332 248 Z" fill="#8f8f8f"/>
<circle cx="342" cy="248" r="3.9" fill="#8f8f8f" stroke="#2a2a2a" stroke-width="1.6"/>
<circle cx="363" cy="247.8" r="9.7" fill="none" stroke="#c2c2c2" stroke-width="1.7"/>
<text x="363" y="253.9" font-size="16.5" fill="#cccccc" text-anchor="middle" stroke="#cccccc" stroke-width="0.3">S</text>
<rect x="139.75" y="271.25" width="12.5" height="12.5" fill="#262626" stroke="#7e7e7e" stroke-width="1.6"/>
<rect x="142" y="276.5" width="8" height="2" fill="#8a8a8a"/>
<rect x="145" y="273.5" width="2" height="8" fill="#8a8a8a"/>
<rect x="153" y="276.5" width="6" height="2" fill="#606060"/>
<circle cx="165" cy="272.2" r="3.4" fill="none" stroke="#72e094" stroke-width="1.8"/>
<path d="M 166.5 277.5 L 171.5 273 L 178.5 286 Z" fill="#72e094"/>
<text x="184.5" y="284.1" font-size="17.6" fill="#c9c9c9" textLength="35.9" lengthAdjust="spacingAndGlyphs">head</text>
<rect x="313.2" y="266.5" width="18" height="18.5" fill="#5469d6" rx="3"/>
<path d="M 332 275 Q 342 261 352 275 Q 342 289 332 275 Z" fill="#8f8f8f"/>
<circle cx="342" cy="275" r="3.9" fill="#8f8f8f" stroke="#2a2a2a" stroke-width="1.6"/>
<circle cx="363" cy="274.8" r="9.7" fill="none" stroke="#c2c2c2" stroke-width="1.7"/>
<text x="363" y="280.9" font-size="16.5" fill="#cccccc" text-anchor="middle" stroke="#cccccc" stroke-width="0.3">S</text>
<rect x="67.75" y="298.25" width="12.5" height="12.5" fill="#262626" stroke="#7e7e7e" stroke-width="1.6"/>
<rect x="70" y="303.5" width="8" height="2" fill="#8a8a8a"/>
<rect x="81" y="303.5" width="6" height="2" fill="#606060"/>
<path d="M 91.6 296.5 L 91.6 311.5 L 105.6 311.5" fill="none" stroke="#c8d4f8" stroke-width="1.7"/>
<path d="M 88.89999999999999 299.5 L 91.6 295.5 L 94.3 299.5 Z" fill="#c8d4f8"/>
<path d="M 103.6 308.8 L 107.6 311.5 L 103.6 314.2 Z" fill="#c8d4f8"/>
<circle cx="101.1" cy="300" r="5.8" fill="#c8d4f8"/>
<path d="M 116.4 296.5 L 121.4 296.5 M 113.3 299.3 L 125 299.3" fill="none" stroke="#c98229" stroke-width="1.5"/>
<circle cx="118.2" cy="305.6" r="3.5" fill="none" stroke="#c98229" stroke-width="1.5"/>
<path d="M 125 296 L 125 312.5 M 125 303.3 L 128.8 303.3" fill="none" stroke="#c98229" stroke-width="1.5"/>
<path d="M 130.6 299.3 L 138 299.3 Q 137 305 130.6 308" fill="none" stroke="#c98229" stroke-width="1.5"/>
<path d="M 142.4 296 L 142.4 312.5" fill="none" stroke="#c98229" stroke-width="1.5"/>
<text x="145.2" y="311.1" font-size="17.6" fill="#c98229" textLength="42.4" lengthAdjust="spacingAndGlyphs">_CON</text>
<rect x="313.2" y="293.5" width="18" height="18.5" fill="#7f7f7f" rx="3"/>
<path d="M 332 302 Q 342 288 352 302 Q 342 316 332 302 Z" fill="#8f8f8f"/>
<circle cx="342" cy="302" r="3.9" fill="#8f8f8f" stroke="#2a2a2a" stroke-width="1.6"/>
<circle cx="363" cy="301.8" r="9.7" fill="none" stroke="#c2c2c2" stroke-width="1.7"/>
<text x="363" y="307.9" font-size="16.5" fill="#cccccc" text-anchor="middle" stroke="#cccccc" stroke-width="0.3">S</text>
<rect x="85.75" y="325.25" width="12.5" height="12.5" fill="#262626" stroke="#7e7e7e" stroke-width="1.6"/>
<rect x="88" y="330.5" width="8" height="2" fill="#8a8a8a"/>
<rect x="91" y="327.5" width="2" height="8" fill="#8a8a8a"/>
<rect x="99" y="330.5" width="6" height="2" fill="#606060"/>
<path d="M 106 337 L 106 325 Q 106 323 108 323 L 113 323 L 115 325.5 L 123 325.5 Q 125 325.5 125 327.5 L 125 337 Q 125 339 123 339 L 108 339 Q 106 339 106 337 Z" fill="#b4b4b4"/>
<text x="130.8" y="338.1" font-size="17.6" fill="#f29a33" textLength="58.5" lengthAdjust="spacingAndGlyphs">Position</text>
<path d="M 332 329 Q 342 315 352 329 Q 342 343 332 329 Z" fill="#8f8f8f"/>
<circle cx="342" cy="329" r="3.9" fill="#8f8f8f" stroke="#2a2a2a" stroke-width="1.6"/>
<circle cx="363" cy="328.8" r="9.7" fill="none" stroke="#c2c2c2" stroke-width="1.7"/>
<text x="363" y="334.9" font-size="16.5" fill="#cccccc" text-anchor="middle" stroke="#cccccc" stroke-width="0.3">S</text>
<rect x="85.75" y="352.25" width="12.5" height="12.5" fill="#262626" stroke="#7e7e7e" stroke-width="1.6"/>
<rect x="88" y="357.5" width="8" height="2" fill="#8a8a8a"/>
<rect x="91" y="354.5" width="2" height="8" fill="#8a8a8a"/>
<rect x="99" y="357.5" width="6" height="2" fill="#606060"/>
<path d="M 106 364 L 106 352 Q 106 350 108 350 L 113 350 L 115 352.5 L 123 352.5 Q 125 352.5 125 354.5 L 125 364 Q 125 366 123 366 L 108 366 Q 106 366 106 364 Z" fill="#b4b4b4"/>
<text x="130.8" y="365.1" font-size="17.6" fill="#f29a33" textLength="37.3" lengthAdjust="spacingAndGlyphs">Scale</text>
<path d="M 332 356 Q 342 342 352 356 Q 342 370 332 356 Z" fill="#8f8f8f"/>
<circle cx="342" cy="356" r="3.9" fill="#8f8f8f" stroke="#2a2a2a" stroke-width="1.6"/>
<circle cx="363" cy="355.8" r="9.7" fill="none" stroke="#c2c2c2" stroke-width="1.7"/>
<text x="363" y="361.9" font-size="16.5" fill="#cccccc" text-anchor="middle" stroke="#cccccc" stroke-width="0.3">S</text>
<rect x="85.75" y="379.25" width="12.5" height="12.5" fill="#262626" stroke="#7e7e7e" stroke-width="1.6"/>
<rect x="88" y="384.5" width="8" height="2" fill="#8a8a8a"/>
<rect x="99" y="384.5" width="6" height="2" fill="#606060"/>
<path d="M 107 391 L 107 379.5 Q 107 378 108.5 378 L 112.5 378 L 114.5 380 L 122.5 380 Q 124 380 124 381.5 L 124 391 Q 124 392.5 122.5 392.5 L 108.5 392.5 Q 107 392.5 107 391 Z" fill="none" stroke="#b4b4b4" stroke-width="1.8"/>
<rect x="107" y="381" width="17" height="1.8" fill="#b4b4b4"/>
<text x="130.8" y="392.1" font-size="17.6" fill="#f29a33" textLength="62.2" lengthAdjust="spacingAndGlyphs">Rotation</text>
<path d="M 332 383 Q 342 369 352 383 Q 342 397 332 383 Z" fill="#8f8f8f"/>
<circle cx="342" cy="383" r="3.9" fill="#8f8f8f" stroke="#2a2a2a" stroke-width="1.6"/>
<circle cx="363" cy="382.8" r="9.7" fill="none" stroke="#c2c2c2" stroke-width="1.7"/>
<text x="363" y="388.9" font-size="16.5" fill="#cccccc" text-anchor="middle" stroke="#cccccc" stroke-width="0.3">S</text>
<path d="M 107 406.5 L 113.3 411.7 L 107 417 Z" fill="#4c4c4c"/>
<rect x="116" y="411" width="4.8" height="2" fill="#5a5a5a"/>
<text x="121.9" y="419.1" font-size="17.6" fill="#f29a33" textLength="87.1" lengthAdjust="spacingAndGlyphs">Rotation . P</text>
<rect x="314.7" y="403.5" width="14.5" height="15" fill="#5b5b5b" rx="2.5"/>
<line x1="317.5" y1="415" x2="326" y2="406.5" stroke="#2c2c2c" stroke-width="2.2"/>
<path d="M 332 410 Q 342 396 352 410 Q 342 424 332 410 Z" fill="#8f8f8f"/>
<circle cx="342" cy="410" r="3.9" fill="#8f8f8f" stroke="#2a2a2a" stroke-width="1.6"/>
<circle cx="363" cy="409.8" r="9.7" fill="none" stroke="#c2c2c2" stroke-width="1.7"/>
<text x="363" y="415.9" font-size="16.5" fill="#cccccc" text-anchor="middle" stroke="#cccccc" stroke-width="0.3">S</text>
<path d="M 107 433.5 L 113.3 438.7 L 107 444 Z" fill="#4c4c4c"/>
<rect x="116" y="438" width="4.8" height="2" fill="#5a5a5a"/>
<text x="121.9" y="446.1" font-size="17.6" fill="#f29a33" textLength="89.8" lengthAdjust="spacingAndGlyphs">Rotation . H</text>
<rect x="314.7" y="430.5" width="14.5" height="15" fill="#5b5b5b" rx="2.5"/>
<line x1="317.5" y1="442" x2="326" y2="433.5" stroke="#2c2c2c" stroke-width="2.2"/>
<path d="M 332 437 Q 342 423 352 437 Q 342 451 332 437 Z" fill="#8f8f8f"/>
<circle cx="342" cy="437" r="3.9" fill="#8f8f8f" stroke="#2a2a2a" stroke-width="1.6"/>
<circle cx="363" cy="436.8" r="9.7" fill="none" stroke="#c2c2c2" stroke-width="1.7"/>
<text x="363" y="442.9" font-size="16.5" fill="#cccccc" text-anchor="middle" stroke="#cccccc" stroke-width="0.3">S</text>
<path d="M 107 460.5 L 113.3 465.7 L 107 471 Z" fill="#4c4c4c"/>
<rect x="116" y="465" width="4.8" height="2" fill="#5a5a5a"/>
<text x="121.9" y="473.1" font-size="17.6" fill="#f29a33" textLength="87.1" lengthAdjust="spacingAndGlyphs">Rotation . B</text>
<rect x="314.7" y="457.5" width="14.5" height="15" fill="#5b5b5b" rx="2.5"/>
<line x1="317.5" y1="469" x2="326" y2="460.5" stroke="#2c2c2c" stroke-width="2.2"/>
<path d="M 332 464 Q 342 450 352 464 Q 342 478 332 464 Z" fill="#8f8f8f"/>
<circle cx="342" cy="464" r="3.9" fill="#8f8f8f" stroke="#2a2a2a" stroke-width="1.6"/>
<circle cx="363" cy="463.8" r="9.7" fill="none" stroke="#c2c2c2" stroke-width="1.7"/>
<text x="363" y="469.9" font-size="16.5" fill="#cccccc" text-anchor="middle" stroke="#cccccc" stroke-width="0.3">S</text>
<rect x="85.75" y="487.25" width="12.5" height="12.5" fill="#262626" stroke="#7e7e7e" stroke-width="1.6"/>
<rect x="88" y="492.5" width="8" height="2" fill="#8a8a8a"/>
<rect x="99" y="492.5" width="6" height="2" fill="#606060"/>
<path d="M 114.5 486.5 C 107 489 105 492 111 494 L 121 497.5 C 125 499.5 123 501 118 502.5" fill="none" stroke="#5cc0f0" stroke-width="2"/>
<circle cx="116.5" cy="485.5" r="2.4" fill="#ffffff"/>
<circle cx="115.5" cy="502" r="2.4" fill="#ffffff"/>
<text x="130.6" y="500.1" font-size="17.6" fill="#c98229" textLength="68" lengthAdjust="spacingAndGlyphs">Hip_CON</text>
<rect x="313.2" y="482.5" width="18" height="18.5" fill="#7f7f7f" rx="3"/>
<path d="M 332 491 Q 342 477 352 491 Q 342 505 332 491 Z" fill="#8f8f8f"/>
<circle cx="342" cy="491" r="3.9" fill="#8f8f8f" stroke="#2a2a2a" stroke-width="1.6"/>
<circle cx="363" cy="490.8" r="9.7" fill="none" stroke="#c2c2c2" stroke-width="1.7"/>
<text x="363" y="496.9" font-size="16.5" fill="#cccccc" text-anchor="middle" stroke="#cccccc" stroke-width="0.3">S</text>
<rect x="103.75" y="514.25" width="12.5" height="12.5" fill="#262626" stroke="#7e7e7e" stroke-width="1.6"/>
<rect x="106" y="519.5" width="8" height="2" fill="#8a8a8a"/>
<rect x="109" y="516.5" width="2" height="8" fill="#8a8a8a"/>
<rect x="117" y="519.5" width="6" height="2" fill="#606060"/>
<path d="M 124 526 L 124 514 Q 124 512 126 512 L 131 512 L 133 514.5 L 141 514.5 Q 143 514.5 143 516.5 L 143 526 Q 143 528 141 528 L 126 528 Q 124 528 124 526 Z" fill="#b4b4b4"/>
<text x="148.8" y="527.1" font-size="17.6" fill="#f29a33" textLength="58.5" lengthAdjust="spacingAndGlyphs">Position</text>
<path d="M 332 518 Q 342 504 352 518 Q 342 532 332 518 Z" fill="#8f8f8f"/>
<circle cx="342" cy="518" r="3.9" fill="#8f8f8f" stroke="#2a2a2a" stroke-width="1.6"/>
<circle cx="363" cy="517.8" r="9.7" fill="none" stroke="#c2c2c2" stroke-width="1.7"/>
<text x="363" y="523.9" font-size="16.5" fill="#cccccc" text-anchor="middle" stroke="#cccccc" stroke-width="0.3">S</text>
<rect x="103.75" y="541.25" width="12.5" height="12.5" fill="#262626" stroke="#7e7e7e" stroke-width="1.6"/>
<rect x="106" y="546.5" width="8" height="2" fill="#8a8a8a"/>
<rect x="109" y="543.5" width="2" height="8" fill="#8a8a8a"/>
<rect x="117" y="546.5" width="6" height="2" fill="#606060"/>
<path d="M 124 553 L 124 541 Q 124 539 126 539 L 131 539 L 133 541.5 L 141 541.5 Q 143 541.5 143 543.5 L 143 553 Q 143 555 141 555 L 126 555 Q 124 555 124 553 Z" fill="#b4b4b4"/>
<text x="148.8" y="554.1" font-size="17.6" fill="#f29a33" textLength="37.3" lengthAdjust="spacingAndGlyphs">Scale</text>
<path d="M 332 545 Q 342 531 352 545 Q 342 559 332 545 Z" fill="#8f8f8f"/>
<circle cx="342" cy="545" r="3.9" fill="#8f8f8f" stroke="#2a2a2a" stroke-width="1.6"/>
<circle cx="363" cy="544.8" r="9.7" fill="none" stroke="#c2c2c2" stroke-width="1.7"/>
<text x="363" y="550.9" font-size="16.5" fill="#cccccc" text-anchor="middle" stroke="#cccccc" stroke-width="0.3">S</text>
<rect x="103.75" y="568.25" width="12.5" height="12.5" fill="#262626" stroke="#7e7e7e" stroke-width="1.6"/>
<rect x="106" y="573.5" width="8" height="2" fill="#8a8a8a"/>
<rect x="117" y="573.5" width="6" height="2" fill="#606060"/>
<path d="M 125 580 L 125 568.5 Q 125 567 126.5 567 L 130.5 567 L 132.5 569 L 140.5 569 Q 142 569 142 570.5 L 142 580 Q 142 581.5 140.5 581.5 L 126.5 581.5 Q 125 581.5 125 580 Z" fill="none" stroke="#b4b4b4" stroke-width="1.8"/>
<rect x="125" y="570" width="17" height="1.8" fill="#b4b4b4"/>
<text x="148.8" y="581.1" font-size="17.6" fill="#f29a33" textLength="62.2" lengthAdjust="spacingAndGlyphs">Rotation</text>
<path d="M 332 572 Q 342 558 352 572 Q 342 586 332 572 Z" fill="#8f8f8f"/>
<circle cx="342" cy="572" r="3.9" fill="#8f8f8f" stroke="#2a2a2a" stroke-width="1.6"/>
<circle cx="363" cy="571.8" r="9.7" fill="none" stroke="#c2c2c2" stroke-width="1.7"/>
<text x="363" y="577.9" font-size="16.5" fill="#cccccc" text-anchor="middle" stroke="#cccccc" stroke-width="0.3">S</text>
<path d="M 125 595.5 L 131.3 600.7 L 125 606 Z" fill="#4c4c4c"/>
<rect x="134" y="600" width="4.8" height="2" fill="#5a5a5a"/>
<text x="139.9" y="608.1" font-size="17.6" fill="#f29a33" textLength="87.1" lengthAdjust="spacingAndGlyphs">Rotation . P</text>
<rect x="314.7" y="592.5" width="14.5" height="15" fill="#5b5b5b" rx="2.5"/>
<line x1="317.5" y1="604" x2="326" y2="595.5" stroke="#2c2c2c" stroke-width="2.2"/>
<path d="M 332 599 Q 342 585 352 599 Q 342 613 332 599 Z" fill="#8f8f8f"/>
<circle cx="342" cy="599" r="3.9" fill="#8f8f8f" stroke="#2a2a2a" stroke-width="1.6"/>
<circle cx="363" cy="598.8" r="9.7" fill="none" stroke="#c2c2c2" stroke-width="1.7"/>
<text x="363" y="604.9" font-size="16.5" fill="#cccccc" text-anchor="middle" stroke="#cccccc" stroke-width="0.3">S</text>
<path d="M 125 622.5 L 131.3 627.7 L 125 633 Z" fill="#4c4c4c"/>
<rect x="134" y="627" width="4.8" height="2" fill="#5a5a5a"/>
<text x="139.9" y="635.1" font-size="17.6" fill="#f29a33" textLength="89.8" lengthAdjust="spacingAndGlyphs">Rotation . H</text>
<rect x="314.7" y="619.5" width="14.5" height="15" fill="#5b5b5b" rx="2.5"/>
<line x1="317.5" y1="631" x2="326" y2="622.5" stroke="#2c2c2c" stroke-width="2.2"/>
<path d="M 332 626 Q 342 612 352 626 Q 342 640 332 626 Z" fill="#8f8f8f"/>
<circle cx="342" cy="626" r="3.9" fill="#8f8f8f" stroke="#2a2a2a" stroke-width="1.6"/>
<circle cx="363" cy="625.8" r="9.7" fill="none" stroke="#c2c2c2" stroke-width="1.7"/>
<text x="363" y="631.9" font-size="16.5" fill="#cccccc" text-anchor="middle" stroke="#cccccc" stroke-width="0.3">S</text>
<path d="M 125 649.5 L 131.3 654.7 L 125 660 Z" fill="#4c4c4c"/>
<rect x="134" y="654" width="4.8" height="2" fill="#5a5a5a"/>
<text x="139.9" y="662.1" font-size="17.6" fill="#f29a33" textLength="87.1" lengthAdjust="spacingAndGlyphs">Rotation . B</text>
<rect x="314.7" y="646.5" width="14.5" height="15" fill="#5b5b5b" rx="2.5"/>
<line x1="317.5" y1="658" x2="326" y2="649.5" stroke="#2c2c2c" stroke-width="2.2"/>
<path d="M 332 653 Q 342 639 352 653 Q 342 667 332 653 Z" fill="#8f8f8f"/>
<circle cx="342" cy="653" r="3.9" fill="#8f8f8f" stroke="#2a2a2a" stroke-width="1.6"/>
<circle cx="363" cy="652.8" r="9.7" fill="none" stroke="#c2c2c2" stroke-width="1.7"/>
<text x="363" y="658.9" font-size="16.5" fill="#cccccc" text-anchor="middle" stroke="#cccccc" stroke-width="0.3">S</text>
<rect x="103.75" y="676.25" width="12.5" height="12.5" fill="#262626" stroke="#7e7e7e" stroke-width="1.6"/>
<rect x="106" y="681.5" width="8" height="2" fill="#8a8a8a"/>
<rect x="117" y="681.5" width="6" height="2" fill="#606060"/>
<path d="M 132.5 675.5 C 125 678 123 681 129 683 L 139 686.5 C 143 688.5 141 690 136 691.5" fill="none" stroke="#5cc0f0" stroke-width="2"/>
<circle cx="134.5" cy="674.5" r="2.4" fill="#ffffff"/>
<circle cx="133.5" cy="691" r="2.4" fill="#ffffff"/>
<text x="148.6" y="689.1" font-size="17.6" fill="#c98229" textLength="84" lengthAdjust="spacingAndGlyphs">Chest_CON</text>
<rect x="313.2" y="671.5" width="18" height="18.5" fill="#7f7f7f" rx="3"/>
<path d="M 332 680 Q 342 666 352 680 Q 342 694 332 680 Z" fill="#8f8f8f"/>
<circle cx="342" cy="680" r="3.9" fill="#8f8f8f" stroke="#2a2a2a" stroke-width="1.6"/>
<circle cx="363" cy="679.8" r="9.7" fill="none" stroke="#c2c2c2" stroke-width="1.7"/>
<text x="363" y="685.9" font-size="16.5" fill="#cccccc" text-anchor="middle" stroke="#cccccc" stroke-width="0.3">S</text>
<rect x="121.75" y="703.25" width="12.5" height="12.5" fill="#262626" stroke="#7e7e7e" stroke-width="1.6"/>
<rect x="124" y="708.5" width="8" height="2" fill="#8a8a8a"/>
<rect x="127" y="705.5" width="2" height="8" fill="#8a8a8a"/>
<rect x="135" y="708.5" width="6" height="2" fill="#606060"/>
<path d="M 142 715 L 142 703 Q 142 701 144 701 L 149 701 L 151 703.5 L 159 703.5 Q 161 703.5 161 705.5 L 161 715 Q 161 717 159 717 L 144 717 Q 142 717 142 715 Z" fill="#b4b4b4"/>
<text x="166.8" y="716.1" font-size="17.6" fill="#f29a33" textLength="58.5" lengthAdjust="spacingAndGlyphs">Position</text>
<path d="M 332 707 Q 342 693 352 707 Q 342 721 332 707 Z" fill="#8f8f8f"/>
<circle cx="342" cy="707" r="3.9" fill="#8f8f8f" stroke="#2a2a2a" stroke-width="1.6"/>
<circle cx="363" cy="706.8" r="9.7" fill="none" stroke="#c2c2c2" stroke-width="1.7"/>
<text x="363" y="712.9" font-size="16.5" fill="#cccccc" text-anchor="middle" stroke="#cccccc" stroke-width="0.3">S</text>
<rect x="121.75" y="730.25" width="12.5" height="12.5" fill="#262626" stroke="#7e7e7e" stroke-width="1.6"/>
<rect x="124" y="735.5" width="8" height="2" fill="#8a8a8a"/>
<rect x="127" y="732.5" width="2" height="8" fill="#8a8a8a"/>
<rect x="135" y="735.5" width="6" height="2" fill="#606060"/>
<path d="M 142 742 L 142 730 Q 142 728 144 728 L 149 728 L 151 730.5 L 159 730.5 Q 161 730.5 161 732.5 L 161 742 Q 161 744 159 744 L 144 744 Q 142 744 142 742 Z" fill="#b4b4b4"/>
<text x="166.8" y="743.1" font-size="17.6" fill="#f29a33" textLength="37.3" lengthAdjust="spacingAndGlyphs">Scale</text>
<path d="M 332 734 Q 342 720 352 734 Q 342 748 332 734 Z" fill="#8f8f8f"/>
<circle cx="342" cy="734" r="3.9" fill="#8f8f8f" stroke="#2a2a2a" stroke-width="1.6"/>
<circle cx="363" cy="733.8" r="9.7" fill="none" stroke="#c2c2c2" stroke-width="1.7"/>
<text x="363" y="739.9" font-size="16.5" fill="#cccccc" text-anchor="middle" stroke="#cccccc" stroke-width="0.3">S</text>
<rect x="121.75" y="757.25" width="12.5" height="12.5" fill="#262626" stroke="#7e7e7e" stroke-width="1.6"/>
<rect x="124" y="762.5" width="8" height="2" fill="#8a8a8a"/>
<rect x="135" y="762.5" width="6" height="2" fill="#606060"/>
<path d="M 143 769 L 143 757.5 Q 143 756 144.5 756 L 148.5 756 L 150.5 758 L 158.5 758 Q 160 758 160 759.5 L 160 769 Q 160 770.5 158.5 770.5 L 144.5 770.5 Q 143 770.5 143 769 Z" fill="none" stroke="#b4b4b4" stroke-width="1.8"/>
<rect x="143" y="759" width="17" height="1.8" fill="#b4b4b4"/>
<text x="166.8" y="770.1" font-size="17.6" fill="#f29a33" textLength="62.2" lengthAdjust="spacingAndGlyphs">Rotation</text>
<path d="M 332 761 Q 342 747 352 761 Q 342 775 332 761 Z" fill="#8f8f8f"/>
<circle cx="342" cy="761" r="3.9" fill="#8f8f8f" stroke="#2a2a2a" stroke-width="1.6"/>
<circle cx="363" cy="760.8" r="9.7" fill="none" stroke="#c2c2c2" stroke-width="1.7"/>
<text x="363" y="766.9" font-size="16.5" fill="#cccccc" text-anchor="middle" stroke="#cccccc" stroke-width="0.3">S</text>
<path d="M 143 784.5 L 149.3 789.7 L 143 795 Z" fill="#4c4c4c"/>
<rect x="152" y="789" width="4.8" height="2" fill="#5a5a5a"/>
<text x="157.9" y="797.1" font-size="17.6" fill="#f29a33" textLength="87.1" lengthAdjust="spacingAndGlyphs">Rotation . P</text>
<rect x="314.7" y="781.5" width="14.5" height="15" fill="#5b5b5b" rx="2.5"/>
<line x1="317.5" y1="793" x2="326" y2="784.5" stroke="#2c2c2c" stroke-width="2.2"/>
<path d="M 332 788 Q 342 774 352 788 Q 342 802 332 788 Z" fill="#8f8f8f"/>
<circle cx="342" cy="788" r="3.9" fill="#8f8f8f" stroke="#2a2a2a" stroke-width="1.6"/>
<circle cx="363" cy="787.8" r="9.7" fill="none" stroke="#c2c2c2" stroke-width="1.7"/>
<text x="363" y="793.9" font-size="16.5" fill="#cccccc" text-anchor="middle" stroke="#cccccc" stroke-width="0.3">S</text>
<path d="M 143 811.5 L 149.3 816.7 L 143 822 Z" fill="#4c4c4c"/>
<rect x="152" y="816" width="4.8" height="2" fill="#5a5a5a"/>
<text x="157.9" y="824.1" font-size="17.6" fill="#f29a33" textLength="89.8" lengthAdjust="spacingAndGlyphs">Rotation . H</text>
<rect x="314.7" y="808.5" width="14.5" height="15" fill="#5b5b5b" rx="2.5"/>
<line x1="317.5" y1="820" x2="326" y2="811.5" stroke="#2c2c2c" stroke-width="2.2"/>
<path d="M 332 815 Q 342 801 352 815 Q 342 829 332 815 Z" fill="#8f8f8f"/>
<circle cx="342" cy="815" r="3.9" fill="#8f8f8f" stroke="#2a2a2a" stroke-width="1.6"/>
<circle cx="363" cy="814.8" r="9.7" fill="none" stroke="#c2c2c2" stroke-width="1.7"/>
<text x="363" y="820.9" font-size="16.5" fill="#cccccc" text-anchor="middle" stroke="#cccccc" stroke-width="0.3">S</text>
<path d="M 143 838.5 L 149.3 843.7 L 143 849 Z" fill="#4c4c4c"/>
<rect x="152" y="843" width="4.8" height="2" fill="#5a5a5a"/>
<text x="157.9" y="851.1" font-size="17.6" fill="#f29a33" textLength="87.1" lengthAdjust="spacingAndGlyphs">Rotation . B</text>
<rect x="314.7" y="835.5" width="14.5" height="15" fill="#5b5b5b" rx="2.5"/>
<line x1="317.5" y1="847" x2="326" y2="838.5" stroke="#2c2c2c" stroke-width="2.2"/>
<path d="M 332 842 Q 342 828 352 842 Q 342 856 332 842 Z" fill="#8f8f8f"/>
<circle cx="342" cy="842" r="3.9" fill="#8f8f8f" stroke="#2a2a2a" stroke-width="1.6"/>
<circle cx="363" cy="841.8" r="9.7" fill="none" stroke="#c2c2c2" stroke-width="1.7"/>
<text x="363" y="847.9" font-size="16.5" fill="#cccccc" text-anchor="middle" stroke="#cccccc" stroke-width="0.3">S</text>
<rect x="121.75" y="865.25" width="12.5" height="12.5" fill="#262626" stroke="#7e7e7e" stroke-width="1.6"/>
<rect x="124" y="870.5" width="8" height="2" fill="#8a8a8a"/>
<rect x="135" y="870.5" width="6" height="2" fill="#606060"/>
<path d="M 150.5 864.5 C 143 867 141 870 147 872 L 157 875.5 C 161 877.5 159 879 154 880.5" fill="none" stroke="#5cc0f0" stroke-width="2"/>
<circle cx="152.5" cy="863.5" r="2.4" fill="#ffffff"/>
<circle cx="151.5" cy="880" r="2.4" fill="#ffffff"/>
<text x="166.8" y="878.1" font-size="17.6" fill="#c98229" textLength="121.3" lengthAdjust="spacingAndGlyphs">L_shoulder_CON</text>
<rect x="313.2" y="860.5" width="18" height="18.5" fill="#7f7f7f" rx="3"/>
<path d="M 332 869 Q 342 855 352 869 Q 342 883 332 869 Z" fill="#8f8f8f"/>
<circle cx="342" cy="869" r="3.9" fill="#8f8f8f" stroke="#2a2a2a" stroke-width="1.6"/>
<circle cx="363" cy="868.8" r="9.7" fill="none" stroke="#c2c2c2" stroke-width="1.7"/>
<text x="363" y="874.9" font-size="16.5" fill="#cccccc" text-anchor="middle" stroke="#cccccc" stroke-width="0.3">S</text>
<rect x="139.75" y="892.25" width="12.5" height="12.5" fill="#262626" stroke="#7e7e7e" stroke-width="1.6"/>
<rect x="142" y="897.5" width="8" height="2" fill="#8a8a8a"/>
<rect x="145" y="894.5" width="2" height="8" fill="#8a8a8a"/>
<rect x="153" y="897.5" width="6" height="2" fill="#606060"/>
<path d="M 160 904 L 160 892 Q 160 890 162 890 L 167 890 L 169 892.5 L 177 892.5 Q 179 892.5 179 894.5 L 179 904 Q 179 906 177 906 L 162 906 Q 160 906 160 904 Z" fill="#b4b4b4"/>
<text x="184.8" y="905.1" font-size="17.6" fill="#f29a33" textLength="58.5" lengthAdjust="spacingAndGlyphs">Position</text>
<path d="M 332 896 Q 342 882 352 896 Q 342 910 332 896 Z" fill="#8f8f8f"/>
<circle cx="342" cy="896" r="3.9" fill="#8f8f8f" stroke="#2a2a2a" stroke-width="1.6"/>
<circle cx="363" cy="895.8" r="9.7" fill="none" stroke="#c2c2c2" stroke-width="1.7"/>
<text x="363" y="901.9" font-size="16.5" fill="#cccccc" text-anchor="middle" stroke="#cccccc" stroke-width="0.3">S</text>
<rect x="139.75" y="919.25" width="12.5" height="12.5" fill="#262626" stroke="#7e7e7e" stroke-width="1.6"/>
<rect x="142" y="924.5" width="8" height="2" fill="#8a8a8a"/>
<rect x="145" y="921.5" width="2" height="8" fill="#8a8a8a"/>
<rect x="153" y="924.5" width="6" height="2" fill="#606060"/>
<path d="M 160 931 L 160 919 Q 160 917 162 917 L 167 917 L 169 919.5 L 177 919.5 Q 179 919.5 179 921.5 L 179 931 Q 179 933 177 933 L 162 933 Q 160 933 160 931 Z" fill="#b4b4b4"/>
<text x="184.8" y="932.1" font-size="17.6" fill="#f29a33" textLength="37.3" lengthAdjust="spacingAndGlyphs">Scale</text>
<path d="M 332 923 Q 342 909 352 923 Q 342 937 332 923 Z" fill="#8f8f8f"/>
<circle cx="342" cy="923" r="3.9" fill="#8f8f8f" stroke="#2a2a2a" stroke-width="1.6"/>
<circle cx="363" cy="922.8" r="9.7" fill="none" stroke="#c2c2c2" stroke-width="1.7"/>
<text x="363" y="928.9" font-size="16.5" fill="#cccccc" text-anchor="middle" stroke="#cccccc" stroke-width="0.3">S</text>
<rect x="139.75" y="946.25" width="12.5" height="12.5" fill="#262626" stroke="#7e7e7e" stroke-width="1.6"/>
<rect x="142" y="951.5" width="8" height="2" fill="#8a8a8a"/>
<rect x="153" y="951.5" width="6" height="2" fill="#606060"/>
<path d="M 161 958 L 161 946.5 Q 161 945 162.5 945 L 166.5 945 L 168.5 947 L 176.5 947 Q 178 947 178 948.5 L 178 958 Q 178 959.5 176.5 959.5 L 162.5 959.5 Q 161 959.5 161 958 Z" fill="none" stroke="#b4b4b4" stroke-width="1.8"/>
<rect x="161" y="948" width="17" height="1.8" fill="#b4b4b4"/>
<text x="184.8" y="959.1" font-size="17.6" fill="#f29a33" textLength="62.2" lengthAdjust="spacingAndGlyphs">Rotation</text>
<path d="M 332 950 Q 342 936 352 950 Q 342 964 332 950 Z" fill="#8f8f8f"/>
<circle cx="342" cy="950" r="3.9" fill="#8f8f8f" stroke="#2a2a2a" stroke-width="1.6"/>
<circle cx="363" cy="949.8" r="9.7" fill="none" stroke="#c2c2c2" stroke-width="1.7"/>
<text x="363" y="955.9" font-size="16.5" fill="#cccccc" text-anchor="middle" stroke="#cccccc" stroke-width="0.3">S</text>
<path d="M 161 973.5 L 167.3 978.7 L 161 984 Z" fill="#4c4c4c"/>
<rect x="170" y="978" width="4.8" height="2" fill="#5a5a5a"/>
<text x="175.9" y="986.1" font-size="17.6" fill="#f29a33" textLength="87.1" lengthAdjust="spacingAndGlyphs">Rotation . P</text>
<rect x="314.7" y="970.5" width="14.5" height="15" fill="#5b5b5b" rx="2.5"/>
<line x1="317.5" y1="982" x2="326" y2="973.5" stroke="#2c2c2c" stroke-width="2.2"/>
<path d="M 332 977 Q 342 963 352 977 Q 342 991 332 977 Z" fill="#8f8f8f"/>
<circle cx="342" cy="977" r="3.9" fill="#8f8f8f" stroke="#2a2a2a" stroke-width="1.6"/>
<circle cx="363" cy="976.8" r="9.7" fill="none" stroke="#c2c2c2" stroke-width="1.7"/>
<text x="363" y="982.9" font-size="16.5" fill="#cccccc" text-anchor="middle" stroke="#cccccc" stroke-width="0.3">S</text>
<path d="M 161 1000.5 L 167.3 1005.7 L 161 1011 Z" fill="#4c4c4c"/>
<rect x="170" y="1005" width="4.8" height="2" fill="#5a5a5a"/>
<text x="175.9" y="1013.1" font-size="17.6" fill="#f29a33" textLength="89.8" lengthAdjust="spacingAndGlyphs">Rotation . H</text>
<rect x="314.7" y="997.5" width="14.5" height="15" fill="#5b5b5b" rx="2.5"/>
<line x1="317.5" y1="1009" x2="326" y2="1000.5" stroke="#2c2c2c" stroke-width="2.2"/>
<path d="M 332 1004 Q 342 990 352 1004 Q 342 1018 332 1004 Z" fill="#8f8f8f"/>
<circle cx="342" cy="1004" r="3.9" fill="#8f8f8f" stroke="#2a2a2a" stroke-width="1.6"/>
<circle cx="363" cy="1003.8" r="9.7" fill="none" stroke="#c2c2c2" stroke-width="1.7"/>
<text x="363" y="1009.9" font-size="16.5" fill="#cccccc" text-anchor="middle" stroke="#cccccc" stroke-width="0.3">S</text>
<path d="M 161 1027.5 L 167.3 1032.7 L 161 1038 Z" fill="#4c4c4c"/>
<rect x="170" y="1032" width="4.8" height="2" fill="#5a5a5a"/>
<text x="175.7" y="1040.1" font-size="17.6" fill="#ffac3c" textLength="93.1" lengthAdjust="spacingAndGlyphs" font-weight="bold">Rotation . B</text>
<rect x="314.7" y="1024.5" width="14.5" height="15" fill="#5b5b5b" rx="2.5"/>
<line x1="317.5" y1="1036" x2="326" y2="1027.5" stroke="#2c2c2c" stroke-width="2.2"/>
<path d="M 332 1031 Q 342 1017 352 1031 Q 342 1045 332 1031 Z" fill="#8f8f8f"/>
<circle cx="342" cy="1031" r="3.9" fill="#8f8f8f" stroke="#2a2a2a" stroke-width="1.6"/>
<circle cx="363" cy="1030.8" r="9.7" fill="none" stroke="#c2c2c2" stroke-width="1.7"/>
<text x="363" y="1036.9" font-size="16.5" fill="#cccccc" text-anchor="middle" stroke="#cccccc" stroke-width="0.3">S</text>
<rect x="139.75" y="1054.25" width="12.5" height="12.5" fill="#262626" stroke="#7e7e7e" stroke-width="1.6"/>
<rect x="142" y="1059.5" width="8" height="2" fill="#8a8a8a"/>
<rect x="145" y="1056.5" width="2" height="8" fill="#8a8a8a"/>
<rect x="153" y="1059.5" width="6" height="2" fill="#606060"/>
<path d="M 168.5 1053.5 C 161 1056 159 1059 165 1061 L 175 1064.5 C 179 1066.5 177 1068 172 1069.5" fill="none" stroke="#5cc0f0" stroke-width="2"/>
<circle cx="170.5" cy="1052.5" r="2.4" fill="#ffffff"/>
<circle cx="169.5" cy="1069" r="2.4" fill="#ffffff"/>
<text x="184.5" y="1067.1" font-size="17.6" fill="#c98229" textLength="101.5" lengthAdjust="spacingAndGlyphs">L_elbow_CON</text>
<rect x="313.2" y="1049.5" width="18" height="18.5" fill="#7f7f7f" rx="3"/>
<path d="M 332 1058 Q 342 1044 352 1058 Q 342 1072 332 1058 Z" fill="#8f8f8f"/>
<circle cx="342" cy="1058" r="3.9" fill="#8f8f8f" stroke="#2a2a2a" stroke-width="1.6"/>
<circle cx="363" cy="1057.8" r="9.7" fill="none" stroke="#c2c2c2" stroke-width="1.7"/>
<text x="363" y="1063.9" font-size="16.5" fill="#cccccc" text-anchor="middle" stroke="#cccccc" stroke-width="0.3">S</text>
<rect x="121.75" y="1081.25" width="12.5" height="12.5" fill="#262626" stroke="#7e7e7e" stroke-width="1.6"/>
<rect x="124" y="1086.5" width="8" height="2" fill="#8a8a8a"/>
<rect x="127" y="1083.5" width="2" height="8" fill="#8a8a8a"/>
<rect x="135" y="1086.5" width="6" height="2" fill="#606060"/>
<path d="M 150.5 1080.5 C 143 1083 141 1086 147 1088 L 157 1091.5 C 161 1093.5 159 1095 154 1096.5" fill="none" stroke="#5cc0f0" stroke-width="2"/>
<circle cx="152.5" cy="1079.5" r="2.4" fill="#ffffff"/>
<circle cx="151.5" cy="1096" r="2.4" fill="#ffffff"/>
<text x="166.8" y="1094.1" font-size="17.6" fill="#c98229" textLength="123.4" lengthAdjust="spacingAndGlyphs">R_shoulder_CON</text>
<rect x="313.2" y="1076.5" width="18" height="18.5" fill="#7f7f7f" rx="3"/>
<path d="M 332 1085 Q 342 1071 352 1085 Q 342 1099 332 1085 Z" fill="#8f8f8f"/>
<circle cx="342" cy="1085" r="3.9" fill="#8f8f8f" stroke="#2a2a2a" stroke-width="1.6"/>
<circle cx="363" cy="1084.8" r="9.7" fill="none" stroke="#c2c2c2" stroke-width="1.7"/>
<text x="363" y="1090.9" font-size="16.5" fill="#cccccc" text-anchor="middle" stroke="#cccccc" stroke-width="0.3">S</text>
<rect x="121.75" y="1108.25" width="12.5" height="12.5" fill="#262626" stroke="#7e7e7e" stroke-width="1.6"/>
<rect x="124" y="1113.5" width="8" height="2" fill="#8a8a8a"/>
<rect x="127" y="1110.5" width="2" height="8" fill="#8a8a8a"/>
<rect x="135" y="1113.5" width="6" height="2" fill="#606060"/>
<path d="M 150.5 1107.5 C 143 1110 141 1113 147 1115 L 157 1118.5 C 161 1120.5 159 1122 154 1123.5" fill="none" stroke="#5cc0f0" stroke-width="2"/>
<circle cx="152.5" cy="1106.5" r="2.4" fill="#ffffff"/>
<circle cx="151.5" cy="1123" r="2.4" fill="#ffffff"/>
<text x="166.7" y="1121.1" font-size="17.6" fill="#c98229" textLength="101.4" lengthAdjust="spacingAndGlyphs">neck_01_CON</text>
<rect x="313.2" y="1103.5" width="18" height="18.5" fill="#7f7f7f" rx="3"/>
<path d="M 332 1112 Q 342 1098 352 1112 Q 342 1126 332 1112 Z" fill="#8f8f8f"/>
<circle cx="342" cy="1112" r="3.9" fill="#8f8f8f" stroke="#2a2a2a" stroke-width="1.6"/>
<circle cx="363" cy="1111.8" r="9.7" fill="none" stroke="#c2c2c2" stroke-width="1.7"/>
<text x="363" y="1117.9" font-size="16.5" fill="#cccccc" text-anchor="middle" stroke="#cccccc" stroke-width="0.3">S</text>
<rect x="85.75" y="1135.25" width="12.5" height="12.5" fill="#262626" stroke="#7e7e7e" stroke-width="1.6"/>
<rect x="88" y="1140.5" width="8" height="2" fill="#8a8a8a"/>
<rect x="91" y="1137.5" width="2" height="8" fill="#8a8a8a"/>
<rect x="99" y="1140.5" width="6" height="2" fill="#606060"/>
<path d="M 109.6 1133.5 L 109.6 1148.5 L 123.6 1148.5" fill="none" stroke="#c8d4f8" stroke-width="1.7"/>
<path d="M 106.89999999999999 1136.5 L 109.6 1132.5 L 112.3 1136.5 Z" fill="#c8d4f8"/>
<path d="M 121.6 1145.8 L 125.6 1148.5 L 121.6 1151.2 Z" fill="#c8d4f8"/>
<circle cx="119.1" cy="1137" r="5.8" fill="#c8d4f8"/>
<text x="130.9" y="1148.1" font-size="17.6" fill="#c98229" textLength="84.1" lengthAdjust="spacingAndGlyphs">R_foot.Goal</text>
<rect x="313.2" y="1130.5" width="18" height="18.5" fill="#7f7f7f" rx="3"/>
<path d="M 332 1139 Q 342 1125 352 1139 Q 342 1153 332 1139 Z" fill="#8f8f8f"/>
<circle cx="342" cy="1139" r="3.9" fill="#8f8f8f" stroke="#2a2a2a" stroke-width="1.6"/>
<circle cx="363" cy="1138.8" r="9.7" fill="none" stroke="#c2c2c2" stroke-width="1.7"/>
<text x="363" y="1144.9" font-size="16.5" fill="#cccccc" text-anchor="middle" stroke="#cccccc" stroke-width="0.3">S</text>
<rect x="85.75" y="1162.25" width="12.5" height="12.5" fill="#262626" stroke="#7e7e7e" stroke-width="1.6"/>
<rect x="88" y="1167.5" width="8" height="2" fill="#8a8a8a"/>
<rect x="91" y="1164.5" width="2" height="8" fill="#8a8a8a"/>
<rect x="99" y="1167.5" width="6" height="2" fill="#606060"/>
<path d="M 109.6 1160.5 L 109.6 1175.5 L 123.6 1175.5" fill="none" stroke="#c8d4f8" stroke-width="1.7"/>
<path d="M 106.89999999999999 1163.5 L 109.6 1159.5 L 112.3 1163.5 Z" fill="#c8d4f8"/>
<path d="M 121.6 1172.8 L 125.6 1175.5 L 121.6 1178.2 Z" fill="#c8d4f8"/>
<circle cx="119.1" cy="1164" r="5.8" fill="#c8d4f8"/>
<text x="130.9" y="1175.1" font-size="17.6" fill="#c98229" textLength="84.1" lengthAdjust="spacingAndGlyphs">R_foot.Goal</text>
<rect x="313.2" y="1157.5" width="18" height="18.5" fill="#7f7f7f" rx="3"/>
<path d="M 332 1166 Q 342 1152 352 1166 Q 342 1180 332 1166 Z" fill="#8f8f8f"/>
<circle cx="342" cy="1166" r="3.9" fill="#8f8f8f" stroke="#2a2a2a" stroke-width="1.6"/>
<circle cx="363" cy="1165.8" r="9.7" fill="none" stroke="#c2c2c2" stroke-width="1.7"/>
<text x="363" y="1171.9" font-size="16.5" fill="#cccccc" text-anchor="middle" stroke="#cccccc" stroke-width="0.3">S</text>
<rect x="85.75" y="1189.25" width="12.5" height="12.5" fill="#262626" stroke="#7e7e7e" stroke-width="1.6"/>
<rect x="88" y="1194.5" width="8" height="2" fill="#8a8a8a"/>
<rect x="91" y="1191.5" width="2" height="8" fill="#8a8a8a"/>
<rect x="99" y="1194.5" width="6" height="2" fill="#606060"/>
<path d="M 109.6 1187.5 L 109.6 1202.5 L 123.6 1202.5" fill="none" stroke="#c8d4f8" stroke-width="1.7"/>
<path d="M 106.89999999999999 1190.5 L 109.6 1186.5 L 112.3 1190.5 Z" fill="#c8d4f8"/>
<path d="M 121.6 1199.8 L 125.6 1202.5 L 121.6 1205.2 Z" fill="#c8d4f8"/>
<circle cx="119.1" cy="1191" r="5.8" fill="#c8d4f8"/>
<text x="130.9" y="1202.1" font-size="17.6" fill="#c98229" textLength="72.2" lengthAdjust="spacingAndGlyphs">L_leg.Pole</text>
<rect x="313.2" y="1184.5" width="18" height="18.5" fill="#7f7f7f" rx="3"/>
<path d="M 332 1193 Q 342 1179 352 1193 Q 342 1207 332 1193 Z" fill="#8f8f8f"/>
<circle cx="342" cy="1193" r="3.9" fill="#8f8f8f" stroke="#2a2a2a" stroke-width="1.6"/>
<circle cx="363" cy="1192.8" r="9.7" fill="none" stroke="#c2c2c2" stroke-width="1.7"/>
<text x="363" y="1198.9" font-size="16.5" fill="#cccccc" text-anchor="middle" stroke="#cccccc" stroke-width="0.3">S</text>
<rect x="85.75" y="1216.25" width="12.5" height="12.5" fill="#262626" stroke="#7e7e7e" stroke-width="1.6"/>
<rect x="88" y="1221.5" width="8" height="2" fill="#8a8a8a"/>
<rect x="91" y="1218.5" width="2" height="8" fill="#8a8a8a"/>
<rect x="99" y="1221.5" width="6" height="2" fill="#606060"/>
<path d="M 109.6 1214.5 L 109.6 1229.5 L 123.6 1229.5" fill="none" stroke="#c8d4f8" stroke-width="1.7"/>
<path d="M 106.89999999999999 1217.5 L 109.6 1213.5 L 112.3 1217.5 Z" fill="#c8d4f8"/>
<path d="M 121.6 1226.8 L 125.6 1229.5 L 121.6 1232.2 Z" fill="#c8d4f8"/>
<circle cx="119.1" cy="1218" r="5.8" fill="#c8d4f8"/>
<text x="130.9" y="1229.1" font-size="17.6" fill="#c98229" textLength="74.3" lengthAdjust="spacingAndGlyphs">R_leg.Pole</text>
<rect x="313.2" y="1211.5" width="18" height="18.5" fill="#7f7f7f" rx="3"/>
<path d="M 332 1220 Q 342 1206 352 1220 Q 342 1234 332 1220 Z" fill="#8f8f8f"/>
<circle cx="342" cy="1220" r="3.9" fill="#8f8f8f" stroke="#2a2a2a" stroke-width="1.6"/>
<circle cx="363" cy="1219.8" r="9.7" fill="none" stroke="#c2c2c2" stroke-width="1.7"/>
<text x="363" y="1225.9" font-size="16.5" fill="#cccccc" text-anchor="middle" stroke="#cccccc" stroke-width="0.3">S</text>
<rect x="67.75" y="1243.25" width="12.5" height="12.5" fill="#262626" stroke="#7e7e7e" stroke-width="1.6"/>
<rect x="70" y="1248.5" width="8" height="2" fill="#8a8a8a"/>
<rect x="73" y="1245.5" width="2" height="8" fill="#8a8a8a"/>
<rect x="81" y="1248.5" width="6" height="2" fill="#606060"/>
<path d="M 91.6 1241.5 L 91.6 1256.5 L 105.6 1256.5" fill="none" stroke="#5068d8" stroke-width="1.7"/>
<path d="M 88.89999999999999 1244.5 L 91.6 1240.5 L 94.3 1244.5 Z" fill="#5068d8"/>
<path d="M 103.6 1253.8 L 107.6 1256.5 L 103.6 1259.2 Z" fill="#5068d8"/>
<circle cx="101.1" cy="1245" r="5.8" fill="#5068d8"/>
<path d="M 116.2 1241.5 L 121.2 1241.5 M 113.1 1244.3 L 124.8 1244.3" fill="none" stroke="#c98229" stroke-width="1.5"/>
<circle cx="118" cy="1250.6" r="3.5" fill="none" stroke="#c98229" stroke-width="1.5"/>
<path d="M 124.8 1241 L 124.8 1257.5 M 124.8 1248.3 L 128.6 1248.3" fill="none" stroke="#c98229" stroke-width="1.5"/>
<path d="M 130.4 1244.3 L 137.8 1244.3 Q 136.8 1250 130.4 1253" fill="none" stroke="#c98229" stroke-width="1.5"/>
<path d="M 142.2 1241 L 142.2 1257.5" fill="none" stroke="#c98229" stroke-width="1.5"/>
<text x="145" y="1256.1" font-size="17.6" fill="#c98229" textLength="42.2" lengthAdjust="spacingAndGlyphs">_Joint</text>
<rect x="313.2" y="1238.5" width="18" height="18.5" fill="#5469d6" rx="3"/>
<path d="M 332 1247 Q 342 1233 352 1247 Q 342 1261 332 1247 Z" fill="#8f8f8f"/>
<circle cx="342" cy="1247" r="3.9" fill="#8f8f8f" stroke="#2a2a2a" stroke-width="1.6"/>
<circle cx="363" cy="1246.8" r="9.7" fill="none" stroke="#c2c2c2" stroke-width="1.7"/>
<text x="363" y="1252.9" font-size="16.5" fill="#cccccc" text-anchor="middle" stroke="#cccccc" stroke-width="0.3">S</text>
<rect x="385" y="128" width="4" height="1223" fill="#1d1d1d"/>
<rect x="389" y="128" width="1871" height="1223" fill="#2a2a2a"/>
<rect x="389" y="128" width="1871" height="29" fill="#2a2a2a"/>
<rect x="389" y="156.5" width="1871" height="1.5" fill="#202020"/>
<rect x="389" y="182.5" width="1871" height="1" fill="#232323"/>
<rect x="389" y="208.5" width="1871" height="1.5" fill="#202020"/>
<rect x="415.7" y="154" width="1.6" height="1197" fill="#212121"/>
<rect x="461.7" y="154" width="1.6" height="1197" fill="#212121"/>
<rect x="507.7" y="154" width="1.6" height="1197" fill="#212121"/>
<rect x="553.7" y="154" width="1.6" height="1197" fill="#1b1b1b"/>
<rect x="599.7" y="154" width="1.6" height="1197" fill="#212121"/>
<rect x="644.7" y="154" width="1.6" height="1197" fill="#212121"/>
<rect x="690.7" y="154" width="1.6" height="1197" fill="#212121"/>
<rect x="736.7" y="154" width="1.6" height="1197" fill="#212121"/>
<rect x="782.7" y="154" width="1.6" height="1197" fill="#1b1b1b"/>
<rect x="828.7" y="154" width="1.6" height="1197" fill="#212121"/>
<rect x="874.7" y="154" width="1.6" height="1197" fill="#212121"/>
<rect x="920.7" y="154" width="1.6" height="1197" fill="#212121"/>
<rect x="965.7" y="154" width="1.6" height="1197" fill="#212121"/>
<rect x="1011.7" y="154" width="1.6" height="1197" fill="#1b1b1b"/>
<rect x="1057.7" y="154" width="1.6" height="1197" fill="#212121"/>
<rect x="1103.7" y="154" width="1.6" height="1197" fill="#212121"/>
<rect x="1149.7" y="154" width="1.6" height="1197" fill="#212121"/>
<rect x="1195.7" y="154" width="1.6" height="1197" fill="#212121"/>
<rect x="1241.7" y="154" width="1.6" height="1197" fill="#1b1b1b"/>
<rect x="1286.7" y="154" width="1.6" height="1197" fill="#212121"/>
<rect x="1332.7" y="154" width="1.6" height="1197" fill="#212121"/>
<rect x="1378.7" y="154" width="1.6" height="1197" fill="#212121"/>
<rect x="1424.7" y="154" width="1.6" height="1197" fill="#212121"/>
<rect x="1470.7" y="154" width="1.6" height="1197" fill="#1b1b1b"/>
<rect x="1516.7" y="154" width="1.6" height="1197" fill="#212121"/>
<rect x="1562.7" y="154" width="1.6" height="1197" fill="#212121"/>
<rect x="1607.7" y="154" width="1.6" height="1197" fill="#212121"/>
<rect x="1653.7" y="154" width="1.6" height="1197" fill="#212121"/>
<rect x="1699.7" y="154" width="1.6" height="1197" fill="#3c3c3c"/>
<rect x="1745.7" y="154" width="1.6" height="1197" fill="#212121"/>
<rect x="1791.7" y="154" width="1.6" height="1197" fill="#212121"/>
<rect x="1837.7" y="154" width="1.6" height="1197" fill="#212121"/>
<rect x="1883.7" y="154" width="1.6" height="1197" fill="#212121"/>
<rect x="1929.7" y="154" width="1.6" height="1197" fill="#1b1b1b"/>
<rect x="1974.7" y="154" width="1.6" height="1197" fill="#212121"/>
<rect x="2020.7" y="154" width="1.6" height="1197" fill="#212121"/>
<rect x="2066.7" y="154" width="1.6" height="1197" fill="#212121"/>
<rect x="2112.7" y="154" width="1.6" height="1197" fill="#212121"/>
<rect x="2158.7" y="154" width="1.6" height="1197" fill="#1b1b1b"/>
<rect x="2204.7" y="154" width="1.6" height="1197" fill="#212121"/>
<rect x="2250.7" y="154" width="1.6" height="1197" fill="#212121"/>
<rect x="389" y="236" width="1871" height="1" fill="#1f1f1f"/>
<rect x="389" y="263" width="1871" height="1" fill="#1f1f1f"/>
<rect x="389" y="290" width="1871" height="1" fill="#1f1f1f"/>
<rect x="389" y="317" width="1871" height="1" fill="#1f1f1f"/>
<rect x="389" y="344" width="1871" height="1" fill="#1f1f1f"/>
<rect x="389" y="371" width="1871" height="1" fill="#1f1f1f"/>
<rect x="389" y="398" width="1871" height="1" fill="#1f1f1f"/>
<rect x="389" y="425" width="1871" height="1" fill="#1f1f1f"/>
<rect x="389" y="452" width="1871" height="1" fill="#1f1f1f"/>
<rect x="389" y="479" width="1871" height="1" fill="#1f1f1f"/>
<rect x="389" y="506" width="1871" height="1" fill="#1f1f1f"/>
<rect x="389" y="533" width="1871" height="1" fill="#1f1f1f"/>
<rect x="389" y="560" width="1871" height="1" fill="#1f1f1f"/>
<rect x="389" y="587" width="1871" height="1" fill="#1f1f1f"/>
<rect x="389" y="614" width="1871" height="1" fill="#1f1f1f"/>
<rect x="389" y="641" width="1871" height="1" fill="#1f1f1f"/>
<rect x="389" y="668" width="1871" height="1" fill="#1f1f1f"/>
<rect x="389" y="695" width="1871" height="1" fill="#1f1f1f"/>
<rect x="389" y="722" width="1871" height="1" fill="#1f1f1f"/>
<rect x="389" y="749" width="1871" height="1" fill="#1f1f1f"/>
<rect x="389" y="776" width="1871" height="1" fill="#1f1f1f"/>
<rect x="389" y="803" width="1871" height="1" fill="#1f1f1f"/>
<rect x="389" y="830" width="1871" height="1" fill="#1f1f1f"/>
<rect x="389" y="857" width="1871" height="1" fill="#1f1f1f"/>
<rect x="389" y="884" width="1871" height="1" fill="#1f1f1f"/>
<rect x="389" y="911" width="1871" height="1" fill="#1f1f1f"/>
<rect x="389" y="938" width="1871" height="1" fill="#1f1f1f"/>
<rect x="389" y="965" width="1871" height="1" fill="#1f1f1f"/>
<rect x="389" y="992" width="1871" height="1" fill="#1f1f1f"/>
<rect x="389" y="1019" width="1871" height="1" fill="#1f1f1f"/>
<rect x="389" y="1046" width="1871" height="1" fill="#1f1f1f"/>
<rect x="389" y="1073" width="1871" height="1" fill="#1f1f1f"/>
<rect x="389" y="1100" width="1871" height="1" fill="#1f1f1f"/>
<rect x="389" y="1127" width="1871" height="1" fill="#1f1f1f"/>
<rect x="389" y="1154" width="1871" height="1" fill="#1f1f1f"/>
<rect x="389" y="1181" width="1871" height="1" fill="#1f1f1f"/>
<rect x="389" y="1208" width="1871" height="1" fill="#1f1f1f"/>
<rect x="389" y="1235" width="1871" height="1" fill="#1f1f1f"/>
<rect x="389" y="1262" width="1871" height="1" fill="#1f1f1f"/>
<rect x="389" y="210" width="1871" height="26" fill="#525252"/>
<rect x="389" y="236" width="1871" height="1" fill="#2c2c2c"/>
<rect x="389" y="237" width="1871" height="26" fill="#525252"/>
<rect x="389" y="263" width="1871" height="1" fill="#2c2c2c"/>
<rect x="389" y="291" width="1747" height="26" fill="#525252"/>
<rect x="389" y="317" width="1747" height="1" fill="#2c2c2c"/>
<rect x="389" y="318" width="1747" height="26" fill="#525252"/>
<rect x="389" y="344" width="1747" height="1" fill="#2c2c2c"/>
<rect x="389" y="345" width="1747" height="26" fill="#525252"/>
<rect x="389" y="371" width="1747" height="1" fill="#2c2c2c"/>
<rect x="389" y="372" width="1747" height="26" fill="#525252"/>
<rect x="389" y="398" width="1747" height="1" fill="#2c2c2c"/>
<rect x="389" y="399" width="1747" height="26" fill="#4b2e30"/>
<rect x="389" y="425" width="1747" height="1" fill="#262626"/>
<rect x="389" y="426" width="1747" height="26" fill="#2c4e3b"/>
<rect x="389" y="452" width="1747" height="1" fill="#262626"/>
<rect x="389" y="453" width="1747" height="26" fill="#293b4f"/>
<rect x="389" y="479" width="1747" height="1" fill="#262626"/>
<rect x="389" y="480" width="1747" height="26" fill="#525252"/>
<rect x="389" y="506" width="1747" height="1" fill="#2c2c2c"/>
<rect x="389" y="507" width="1747" height="26" fill="#525252"/>
<rect x="389" y="533" width="1747" height="1" fill="#2c2c2c"/>
<rect x="389" y="534" width="1747" height="26" fill="#525252"/>
<rect x="389" y="560" width="1747" height="1" fill="#2c2c2c"/>
<rect x="389" y="561" width="1747" height="26" fill="#525252"/>
<rect x="389" y="587" width="1747" height="1" fill="#2c2c2c"/>
<rect x="389" y="588" width="1747" height="26" fill="#4b2e30"/>
<rect x="389" y="614" width="1747" height="1" fill="#262626"/>
<rect x="389" y="615" width="1747" height="26" fill="#2c4e3b"/>
<rect x="389" y="641" width="1747" height="1" fill="#262626"/>
<rect x="389" y="642" width="1747" height="26" fill="#293b4f"/>
<rect x="389" y="668" width="1747" height="1" fill="#262626"/>
<rect x="389" y="669" width="1747" height="26" fill="#525252"/>
<rect x="389" y="695" width="1747" height="1" fill="#2c2c2c"/>
<rect x="389" y="696" width="1747" height="26" fill="#525252"/>
<rect x="389" y="722" width="1747" height="1" fill="#2c2c2c"/>
<rect x="389" y="723" width="1747" height="26" fill="#525252"/>
<rect x="389" y="749" width="1747" height="1" fill="#2c2c2c"/>
<rect x="389" y="750" width="1747" height="26" fill="#525252"/>
<rect x="389" y="776" width="1747" height="1" fill="#2c2c2c"/>
<rect x="389" y="777" width="1747" height="26" fill="#4b2e30"/>
<rect x="389" y="803" width="1747" height="1" fill="#262626"/>
<rect x="389" y="804" width="1747" height="26" fill="#2c4e3b"/>
<rect x="389" y="830" width="1747" height="1" fill="#262626"/>
<rect x="389" y="831" width="1747" height="26" fill="#293b4f"/>
<rect x="389" y="857" width="1747" height="1" fill="#262626"/>
<rect x="389" y="858" width="1747" height="26" fill="#525252"/>
<rect x="389" y="884" width="1747" height="1" fill="#2c2c2c"/>
<rect x="389" y="885" width="1747" height="26" fill="#525252"/>
<rect x="389" y="911" width="1747" height="1" fill="#2c2c2c"/>
<rect x="389" y="912" width="1747" height="26" fill="#525252"/>
<rect x="389" y="938" width="1747" height="1" fill="#2c2c2c"/>
<rect x="389" y="939" width="1747" height="26" fill="#525252"/>
<rect x="389" y="965" width="1747" height="1" fill="#2c2c2c"/>
<rect x="389" y="966" width="1747" height="26" fill="#4b2e30"/>
<rect x="389" y="992" width="1747" height="1" fill="#262626"/>
<rect x="389" y="993" width="1747" height="26" fill="#2c4e3b"/>
<rect x="389" y="1019" width="1747" height="1" fill="#262626"/>
<rect x="389" y="1020" width="1747" height="26" fill="#293b4f"/>
<rect x="389" y="1046" width="1747" height="1" fill="#262626"/>
<rect x="389" y="1047" width="1747" height="26" fill="#525252"/>
<rect x="389" y="1073" width="1747" height="1" fill="#2c2c2c"/>
<rect x="389" y="1074" width="1747" height="26" fill="#525252"/>
<rect x="389" y="1100" width="1747" height="1" fill="#2c2c2c"/>
<rect x="389" y="1101" width="1747" height="26" fill="#525252"/>
<rect x="389" y="1127" width="1747" height="1" fill="#2c2c2c"/>
<rect x="389" y="1128" width="1747" height="26" fill="#525252"/>
<rect x="389" y="1154" width="1747" height="1" fill="#2c2c2c"/>
<rect x="389" y="1155" width="1747" height="26" fill="#525252"/>
<rect x="389" y="1181" width="1747" height="1" fill="#2c2c2c"/>
<rect x="389" y="1182" width="1747" height="26" fill="#525252"/>
<rect x="389" y="1208" width="1747" height="1" fill="#2c2c2c"/>
<rect x="389" y="1209" width="1747" height="26" fill="#525252"/>
<rect x="389" y="1235" width="1747" height="1" fill="#2c2c2c"/>
<rect x="389" y="1236" width="876" height="26" fill="#525252"/>
<rect x="389" y="1262" width="876" height="1" fill="#2c2c2c"/>
<rect x="415.75" y="210" width="1.5" height="1052" fill="rgba(0,0,0,0.11)"/>
<rect x="461.75" y="210" width="1.5" height="1052" fill="rgba(0,0,0,0.11)"/>
<rect x="507.75" y="210" width="1.5" height="1052" fill="rgba(0,0,0,0.11)"/>
<rect x="553.75" y="210" width="1.5" height="1052" fill="rgba(0,0,0,0.2)"/>
<rect x="599.75" y="210" width="1.5" height="1052" fill="rgba(0,0,0,0.11)"/>
<rect x="644.75" y="210" width="1.5" height="1052" fill="rgba(0,0,0,0.11)"/>
<rect x="690.75" y="210" width="1.5" height="1052" fill="rgba(0,0,0,0.11)"/>
<rect x="736.75" y="210" width="1.5" height="1052" fill="rgba(0,0,0,0.11)"/>
<rect x="782.75" y="210" width="1.5" height="1052" fill="rgba(0,0,0,0.2)"/>
<rect x="828.75" y="210" width="1.5" height="1052" fill="rgba(0,0,0,0.11)"/>
<rect x="874.75" y="210" width="1.5" height="1052" fill="rgba(0,0,0,0.11)"/>
<rect x="920.75" y="210" width="1.5" height="1052" fill="rgba(0,0,0,0.11)"/>
<rect x="965.75" y="210" width="1.5" height="1052" fill="rgba(0,0,0,0.11)"/>
<rect x="1011.75" y="210" width="1.5" height="1052" fill="rgba(0,0,0,0.2)"/>
<rect x="1057.75" y="210" width="1.5" height="1052" fill="rgba(0,0,0,0.11)"/>
<rect x="1103.75" y="210" width="1.5" height="1052" fill="rgba(0,0,0,0.11)"/>
<rect x="1149.75" y="210" width="1.5" height="1052" fill="rgba(0,0,0,0.11)"/>
<rect x="1195.75" y="210" width="1.5" height="1052" fill="rgba(0,0,0,0.11)"/>
<rect x="1241.75" y="210" width="1.5" height="1052" fill="rgba(0,0,0,0.2)"/>
<rect x="1286.75" y="210" width="1.5" height="1052" fill="rgba(0,0,0,0.11)"/>
<rect x="1332.75" y="210" width="1.5" height="1052" fill="rgba(0,0,0,0.11)"/>
<rect x="1378.75" y="210" width="1.5" height="1052" fill="rgba(0,0,0,0.11)"/>
<rect x="1424.75" y="210" width="1.5" height="1052" fill="rgba(0,0,0,0.11)"/>
<rect x="1470.75" y="210" width="1.5" height="1052" fill="rgba(0,0,0,0.2)"/>
<rect x="1516.75" y="210" width="1.5" height="1052" fill="rgba(0,0,0,0.11)"/>
<rect x="1562.75" y="210" width="1.5" height="1052" fill="rgba(0,0,0,0.11)"/>
<rect x="1607.75" y="210" width="1.5" height="1052" fill="rgba(0,0,0,0.11)"/>
<rect x="1653.75" y="210" width="1.5" height="1052" fill="rgba(0,0,0,0.11)"/>
<rect x="1699.75" y="210" width="1.5" height="1052" fill="rgba(255,255,255,0.04)"/>
<rect x="1745.75" y="210" width="1.5" height="1052" fill="rgba(0,0,0,0.11)"/>
<rect x="1791.75" y="210" width="1.5" height="1052" fill="rgba(0,0,0,0.11)"/>
<rect x="1837.75" y="210" width="1.5" height="1052" fill="rgba(0,0,0,0.11)"/>
<rect x="1883.75" y="210" width="1.5" height="1052" fill="rgba(0,0,0,0.11)"/>
<rect x="1929.75" y="210" width="1.5" height="1052" fill="rgba(0,0,0,0.2)"/>
<rect x="1974.75" y="210" width="1.5" height="1052" fill="rgba(0,0,0,0.11)"/>
<rect x="2020.75" y="210" width="1.5" height="1052" fill="rgba(0,0,0,0.11)"/>
<rect x="2066.75" y="210" width="1.5" height="1052" fill="rgba(0,0,0,0.11)"/>
<rect x="2112.75" y="210" width="1.5" height="1052" fill="rgba(0,0,0,0.11)"/>
<rect x="2158.75" y="210" width="1.5" height="1052" fill="rgba(0,0,0,0.2)"/>
<rect x="2204.75" y="210" width="1.5" height="1052" fill="rgba(0,0,0,0.11)"/>
<rect x="2250.75" y="210" width="1.5" height="1052" fill="rgba(0,0,0,0.11)"/>
<rect x="1540.5" y="183" width="596.5" height="25" fill="#7c5a31"/>
<rect x="1540.5" y="183" width="596.5" height="1.5" fill="#8c5e24"/>
<rect x="1540.5" y="206" width="596.5" height="2" fill="#8c5a1e"/>
<rect x="1543.5" y="186.5" width="2" height="17.5" fill="#ffc84a"/>
<rect x="1546.5" y="186.5" width="2" height="17.5" fill="#ffc84a"/>
<rect x="1549.5" y="186.5" width="2" height="17.5" fill="#ffc84a"/>
<rect x="2125.5" y="186.5" width="2" height="17.5" fill="#ffc84a"/>
<rect x="2128.5" y="186.5" width="2" height="17.5" fill="#ffc84a"/>
<rect x="2131.5" y="186.5" width="2" height="17.5" fill="#ffc84a"/>
<rect x="440" y="210" width="44" height="26" fill="#eeeeee"/>
<rect x="443" y="213" width="38" height="20" fill="#151515"/>
<rect x="444" y="214" width="36" height="18" fill="#2b2b2b"/>
<rect x="486" y="210" width="44" height="26" fill="#eeeeee"/>
<rect x="489" y="213" width="38" height="20" fill="#151515"/>
<rect x="490" y="214" width="36" height="18" fill="#2b2b2b"/>
<rect x="532" y="210" width="44" height="26" fill="#eeeeee"/>
<rect x="535" y="213" width="38" height="20" fill="#151515"/>
<rect x="536" y="214" width="36" height="18" fill="#2b2b2b"/>
<rect x="578" y="210" width="44" height="26" fill="#eeeeee"/>
<rect x="581" y="213" width="38" height="20" fill="#151515"/>
<rect x="582" y="214" width="36" height="18" fill="#2b2b2b"/>
<rect x="623" y="210" width="44" height="26" fill="#eeeeee"/>
<rect x="626" y="213" width="38" height="20" fill="#151515"/>
<rect x="627" y="214" width="36" height="18" fill="#2b2b2b"/>
<rect x="669" y="210" width="44" height="26" fill="#eeeeee"/>
<rect x="672" y="213" width="38" height="20" fill="#151515"/>
<rect x="673" y="214" width="36" height="18" fill="#2b2b2b"/>
<rect x="715" y="210" width="44" height="26" fill="#eeeeee"/>
<rect x="718" y="213" width="38" height="20" fill="#151515"/>
<rect x="719" y="214" width="36" height="18" fill="#2b2b2b"/>
<rect x="761" y="210" width="44" height="26" fill="#eeeeee"/>
<rect x="764" y="213" width="38" height="20" fill="#151515"/>
<rect x="765" y="214" width="36" height="18" fill="#2b2b2b"/>
<rect x="807" y="210" width="44" height="26" fill="#eeeeee"/>
<rect x="810" y="213" width="38" height="20" fill="#151515"/>
<rect x="811" y="214" width="36" height="18" fill="#2b2b2b"/>
<rect x="853" y="210" width="44" height="26" fill="#eeeeee"/>
<rect x="856" y="213" width="38" height="20" fill="#151515"/>
<rect x="857" y="214" width="36" height="18" fill="#2b2b2b"/>
<rect x="944" y="210" width="44" height="26" fill="#eeeeee"/>
<rect x="947" y="213" width="38" height="20" fill="#151515"/>
<rect x="948" y="214" width="36" height="18" fill="#2b2b2b"/>
<rect x="1036" y="210" width="44" height="26" fill="#eeeeee"/>
<rect x="1039" y="213" width="38" height="20" fill="#151515"/>
<rect x="1040" y="214" width="36" height="18" fill="#2b2b2b"/>
<rect x="1128" y="210" width="44" height="26" fill="#eeeeee"/>
<rect x="1131" y="213" width="38" height="20" fill="#151515"/>
<rect x="1132" y="214" width="36" height="18" fill="#2b2b2b"/>
<rect x="1220" y="210" width="44" height="26" fill="#eeeeee"/>
<rect x="1223" y="213" width="38" height="20" fill="#151515"/>
<rect x="1224" y="214" width="36" height="18" fill="#2b2b2b"/>
<rect x="1265" y="210" width="44" height="26" fill="#eeeeee"/>
<rect x="1268" y="213" width="38" height="20" fill="#151515"/>
<rect x="1269" y="214" width="36" height="18" fill="#2b2b2b"/>
<rect x="1357" y="210" width="44" height="26" fill="#eeeeee"/>
<rect x="1360" y="213" width="38" height="20" fill="#151515"/>
<rect x="1361" y="214" width="36" height="18" fill="#2b2b2b"/>
<rect x="1449" y="210" width="44" height="26" fill="#eeeeee"/>
<rect x="1452" y="213" width="38" height="20" fill="#151515"/>
<rect x="1453" y="214" width="36" height="18" fill="#2b2b2b"/>
<rect x="1495" y="210" width="44" height="26" fill="#eeeeee"/>
<rect x="1498" y="213" width="38" height="20" fill="#151515"/>
<rect x="1499" y="214" width="36" height="18" fill="#2b2b2b"/>
<rect x="1541" y="210" width="44" height="26" fill="#bd7727"/>
<rect x="1544" y="213" width="38" height="20" fill="#151515"/>
<rect x="1545" y="214" width="36" height="18" fill="#2b2b2b"/>
<rect x="1586" y="210" width="44" height="26" fill="#bd7727"/>
<rect x="1589" y="213" width="38" height="20" fill="#151515"/>
<rect x="1590" y="214" width="36" height="18" fill="#2b2b2b"/>
<rect x="1678" y="210" width="44" height="26" fill="#bd7727"/>
<rect x="1681" y="213" width="38" height="20" fill="#151515"/>
<rect x="1682" y="214" width="36" height="18" fill="#2b2b2b"/>
<rect x="1724" y="210" width="44" height="26" fill="#eeeeee"/>
<rect x="1727" y="213" width="38" height="20" fill="#151515"/>
<rect x="1728" y="214" width="36" height="18" fill="#2b2b2b"/>
<rect x="1816" y="210" width="44" height="26" fill="#bd7727"/>
<rect x="1819" y="213" width="38" height="20" fill="#151515"/>
<rect x="1820" y="214" width="36" height="18" fill="#2b2b2b"/>
<rect x="1862" y="210" width="44" height="26" fill="#bd7727"/>
<rect x="1865" y="213" width="38" height="20" fill="#151515"/>
<rect x="1866" y="214" width="36" height="18" fill="#2b2b2b"/>
<rect x="1999" y="210" width="44" height="26" fill="#bd7727"/>
<rect x="2002" y="213" width="38" height="20" fill="#151515"/>
<rect x="2003" y="214" width="36" height="18" fill="#2b2b2b"/>
<rect x="2091" y="210" width="44" height="26" fill="#bd7727"/>
<rect x="2094" y="213" width="38" height="20" fill="#151515"/>
<rect x="2095" y="214" width="36" height="18" fill="#2b2b2b"/>
<rect x="2229" y="210" width="44" height="26" fill="#eeeeee"/>
<rect x="2232" y="213" width="38" height="20" fill="#151515"/>
<rect x="2233" y="214" width="36" height="18" fill="#2b2b2b"/>
<rect x="1678" y="237" width="44" height="26" fill="#eeeeee"/>
<rect x="1681" y="240" width="38" height="20" fill="#151515"/>
<rect x="1682" y="241" width="36" height="18" fill="#2b2b2b"/>
<rect x="2229" y="237" width="44" height="26" fill="#eeeeee"/>
<rect x="2232" y="240" width="38" height="20" fill="#151515"/>
<rect x="2233" y="241" width="36" height="18" fill="#2b2b2b"/>
<rect x="440" y="291" width="44" height="26" fill="#eeeeee"/>
<rect x="443" y="294" width="38" height="20" fill="#151515"/>
<rect x="444" y="295" width="36" height="18" fill="#2b2b2b"/>
<rect x="486" y="291" width="44" height="26" fill="#eeeeee"/>
<rect x="489" y="294" width="38" height="20" fill="#151515"/>
<rect x="490" y="295" width="36" height="18" fill="#2b2b2b"/>
<rect x="578" y="291" width="44" height="26" fill="#eeeeee"/>
<rect x="581" y="294" width="38" height="20" fill="#151515"/>
<rect x="582" y="295" width="36" height="18" fill="#2b2b2b"/>
<rect x="623" y="291" width="44" height="26" fill="#eeeeee"/>
<rect x="626" y="294" width="38" height="20" fill="#151515"/>
<rect x="627" y="295" width="36" height="18" fill="#2b2b2b"/>
<rect x="669" y="291" width="44" height="26" fill="#eeeeee"/>
<rect x="672" y="294" width="38" height="20" fill="#151515"/>
<rect x="673" y="295" width="36" height="18" fill="#2b2b2b"/>
<rect x="715" y="291" width="44" height="26" fill="#eeeeee"/>
<rect x="718" y="294" width="38" height="20" fill="#151515"/>
<rect x="719" y="295" width="36" height="18" fill="#2b2b2b"/>
<rect x="761" y="291" width="44" height="26" fill="#eeeeee"/>
<rect x="764" y="294" width="38" height="20" fill="#151515"/>
<rect x="765" y="295" width="36" height="18" fill="#2b2b2b"/>
<rect x="807" y="291" width="44" height="26" fill="#eeeeee"/>
<rect x="810" y="294" width="38" height="20" fill="#151515"/>
<rect x="811" y="295" width="36" height="18" fill="#2b2b2b"/>
<rect x="853" y="291" width="44" height="26" fill="#eeeeee"/>
<rect x="856" y="294" width="38" height="20" fill="#151515"/>
<rect x="857" y="295" width="36" height="18" fill="#2b2b2b"/>
<rect x="944" y="291" width="44" height="26" fill="#eeeeee"/>
<rect x="947" y="294" width="38" height="20" fill="#151515"/>
<rect x="948" y="295" width="36" height="18" fill="#2b2b2b"/>
<rect x="1036" y="291" width="44" height="26" fill="#eeeeee"/>
<rect x="1039" y="294" width="38" height="20" fill="#151515"/>
<rect x="1040" y="295" width="36" height="18" fill="#2b2b2b"/>
<rect x="1128" y="291" width="44" height="26" fill="#eeeeee"/>
<rect x="1131" y="294" width="38" height="20" fill="#151515"/>
<rect x="1132" y="295" width="36" height="18" fill="#2b2b2b"/>
<rect x="1220" y="291" width="44" height="26" fill="#eeeeee"/>
<rect x="1223" y="294" width="38" height="20" fill="#151515"/>
<rect x="1224" y="295" width="36" height="18" fill="#2b2b2b"/>
<rect x="1265" y="291" width="44" height="26" fill="#eeeeee"/>
<rect x="1268" y="294" width="38" height="20" fill="#151515"/>
<rect x="1269" y="295" width="36" height="18" fill="#2b2b2b"/>
<rect x="1357" y="291" width="44" height="26" fill="#eeeeee"/>
<rect x="1360" y="294" width="38" height="20" fill="#151515"/>
<rect x="1361" y="295" width="36" height="18" fill="#2b2b2b"/>
<rect x="1449" y="291" width="44" height="26" fill="#eeeeee"/>
<rect x="1452" y="294" width="38" height="20" fill="#151515"/>
<rect x="1453" y="295" width="36" height="18" fill="#2b2b2b"/>
<rect x="1495" y="291" width="44" height="26" fill="#eeeeee"/>
<rect x="1498" y="294" width="38" height="20" fill="#151515"/>
<rect x="1499" y="295" width="36" height="18" fill="#2b2b2b"/>
<rect x="1541" y="291" width="44" height="26" fill="#bd7727"/>
<rect x="1544" y="294" width="38" height="20" fill="#151515"/>
<rect x="1545" y="295" width="36" height="18" fill="#2b2b2b"/>
<rect x="1586" y="291" width="44" height="26" fill="#bd7727"/>
<rect x="1589" y="294" width="38" height="20" fill="#151515"/>
<rect x="1590" y="295" width="36" height="18" fill="#2b2b2b"/>
<rect x="1678" y="291" width="44" height="26" fill="#bd7727"/>
<rect x="1681" y="294" width="38" height="20" fill="#151515"/>
<rect x="1682" y="295" width="36" height="18" fill="#2b2b2b"/>
<rect x="1724" y="291" width="44" height="26" fill="#eeeeee"/>
<rect x="1727" y="294" width="38" height="20" fill="#151515"/>
<rect x="1728" y="295" width="36" height="18" fill="#2b2b2b"/>
<rect x="1816" y="291" width="44" height="26" fill="#bd7727"/>
<rect x="1819" y="294" width="38" height="20" fill="#151515"/>
<rect x="1820" y="295" width="36" height="18" fill="#2b2b2b"/>
<rect x="1862" y="291" width="44" height="26" fill="#bd7727"/>
<rect x="1865" y="294" width="38" height="20" fill="#151515"/>
<rect x="1866" y="295" width="36" height="18" fill="#2b2b2b"/>
<rect x="1999" y="291" width="44" height="26" fill="#bd7727"/>
<rect x="2002" y="294" width="38" height="20" fill="#151515"/>
<rect x="2003" y="295" width="36" height="18" fill="#2b2b2b"/>
<rect x="2091" y="291" width="44" height="26" fill="#bd7727"/>
<rect x="2094" y="294" width="38" height="20" fill="#151515"/>
<rect x="2095" y="295" width="36" height="18" fill="#2b2b2b"/>
<rect x="440" y="318" width="44" height="26" fill="#eeeeee"/>
<rect x="443" y="321" width="38" height="20" fill="#151515"/>
<rect x="444" y="322" width="36" height="18" fill="#2b2b2b"/>
<rect x="486" y="318" width="44" height="26" fill="#eeeeee"/>
<rect x="489" y="321" width="38" height="20" fill="#151515"/>
<rect x="490" y="322" width="36" height="18" fill="#2b2b2b"/>
<rect x="623" y="318" width="44" height="26" fill="#eeeeee"/>
<rect x="626" y="321" width="38" height="20" fill="#151515"/>
<rect x="627" y="322" width="36" height="18" fill="#2b2b2b"/>
<rect x="669" y="318" width="44" height="26" fill="#eeeeee"/>
<rect x="672" y="321" width="38" height="20" fill="#151515"/>
<rect x="673" y="322" width="36" height="18" fill="#2b2b2b"/>
<rect x="715" y="318" width="44" height="26" fill="#eeeeee"/>
<rect x="718" y="321" width="38" height="20" fill="#151515"/>
<rect x="719" y="322" width="36" height="18" fill="#2b2b2b"/>
<rect x="761" y="318" width="44" height="26" fill="#eeeeee"/>
<rect x="764" y="321" width="38" height="20" fill="#151515"/>
<rect x="765" y="322" width="36" height="18" fill="#2b2b2b"/>
<rect x="807" y="318" width="44" height="26" fill="#eeeeee"/>
<rect x="810" y="321" width="38" height="20" fill="#151515"/>
<rect x="811" y="322" width="36" height="18" fill="#2b2b2b"/>
<rect x="853" y="318" width="44" height="26" fill="#eeeeee"/>
<rect x="856" y="321" width="38" height="20" fill="#151515"/>
<rect x="857" y="322" width="36" height="18" fill="#2b2b2b"/>
<rect x="944" y="318" width="44" height="26" fill="#eeeeee"/>
<rect x="947" y="321" width="38" height="20" fill="#151515"/>
<rect x="948" y="322" width="36" height="18" fill="#2b2b2b"/>
<rect x="1036" y="318" width="44" height="26" fill="#eeeeee"/>
<rect x="1039" y="321" width="38" height="20" fill="#151515"/>
<rect x="1040" y="322" width="36" height="18" fill="#2b2b2b"/>
<rect x="1128" y="318" width="44" height="26" fill="#eeeeee"/>
<rect x="1131" y="321" width="38" height="20" fill="#151515"/>
<rect x="1132" y="322" width="36" height="18" fill="#2b2b2b"/>
<rect x="1220" y="318" width="44" height="26" fill="#eeeeee"/>
<rect x="1223" y="321" width="38" height="20" fill="#151515"/>
<rect x="1224" y="322" width="36" height="18" fill="#2b2b2b"/>
<rect x="1265" y="318" width="44" height="26" fill="#eeeeee"/>
<rect x="1268" y="321" width="38" height="20" fill="#151515"/>
<rect x="1269" y="322" width="36" height="18" fill="#2b2b2b"/>
<rect x="1357" y="318" width="44" height="26" fill="#eeeeee"/>
<rect x="1360" y="321" width="38" height="20" fill="#151515"/>
<rect x="1361" y="322" width="36" height="18" fill="#2b2b2b"/>
<rect x="1449" y="318" width="44" height="26" fill="#eeeeee"/>
<rect x="1452" y="321" width="38" height="20" fill="#151515"/>
<rect x="1453" y="322" width="36" height="18" fill="#2b2b2b"/>
<rect x="1495" y="318" width="44" height="26" fill="#eeeeee"/>
<rect x="1498" y="321" width="38" height="20" fill="#151515"/>
<rect x="1499" y="322" width="36" height="18" fill="#2b2b2b"/>
<rect x="1541" y="318" width="44" height="26" fill="#eeeeee"/>
<rect x="1544" y="321" width="38" height="20" fill="#151515"/>
<rect x="1545" y="322" width="36" height="18" fill="#2b2b2b"/>
<rect x="1586" y="318" width="44" height="26" fill="#eeeeee"/>
<rect x="1589" y="321" width="38" height="20" fill="#151515"/>
<rect x="1590" y="322" width="36" height="18" fill="#2b2b2b"/>
<rect x="1678" y="318" width="44" height="26" fill="#eeeeee"/>
<rect x="1681" y="321" width="38" height="20" fill="#151515"/>
<rect x="1682" y="322" width="36" height="18" fill="#2b2b2b"/>
<rect x="1816" y="318" width="44" height="26" fill="#eeeeee"/>
<rect x="1819" y="321" width="38" height="20" fill="#151515"/>
<rect x="1820" y="322" width="36" height="18" fill="#2b2b2b"/>
<rect x="1862" y="318" width="44" height="26" fill="#eeeeee"/>
<rect x="1865" y="321" width="38" height="20" fill="#151515"/>
<rect x="1866" y="322" width="36" height="18" fill="#2b2b2b"/>
<rect x="1999" y="318" width="44" height="26" fill="#eeeeee"/>
<rect x="2002" y="321" width="38" height="20" fill="#151515"/>
<rect x="2003" y="322" width="36" height="18" fill="#2b2b2b"/>
<rect x="2091" y="318" width="44" height="26" fill="#eeeeee"/>
<rect x="2094" y="321" width="38" height="20" fill="#151515"/>
<rect x="2095" y="322" width="36" height="18" fill="#2b2b2b"/>
<rect x="440" y="345" width="44" height="26" fill="#eeeeee"/>
<rect x="443" y="348" width="38" height="20" fill="#151515"/>
<rect x="444" y="349" width="36" height="18" fill="#2b2b2b"/>
<rect x="486" y="345" width="44" height="26" fill="#eeeeee"/>
<rect x="489" y="348" width="38" height="20" fill="#151515"/>
<rect x="490" y="349" width="36" height="18" fill="#2b2b2b"/>
<rect x="623" y="345" width="44" height="26" fill="#eeeeee"/>
<rect x="626" y="348" width="38" height="20" fill="#151515"/>
<rect x="627" y="349" width="36" height="18" fill="#2b2b2b"/>
<rect x="669" y="345" width="44" height="26" fill="#eeeeee"/>
<rect x="672" y="348" width="38" height="20" fill="#151515"/>
<rect x="673" y="349" width="36" height="18" fill="#2b2b2b"/>
<rect x="715" y="345" width="44" height="26" fill="#eeeeee"/>
<rect x="718" y="348" width="38" height="20" fill="#151515"/>
<rect x="719" y="349" width="36" height="18" fill="#2b2b2b"/>
<rect x="761" y="345" width="44" height="26" fill="#eeeeee"/>
<rect x="764" y="348" width="38" height="20" fill="#151515"/>
<rect x="765" y="349" width="36" height="18" fill="#2b2b2b"/>
<rect x="807" y="345" width="44" height="26" fill="#eeeeee"/>
<rect x="810" y="348" width="38" height="20" fill="#151515"/>
<rect x="811" y="349" width="36" height="18" fill="#2b2b2b"/>
<rect x="853" y="345" width="44" height="26" fill="#eeeeee"/>
<rect x="856" y="348" width="38" height="20" fill="#151515"/>
<rect x="857" y="349" width="36" height="18" fill="#2b2b2b"/>
<rect x="944" y="345" width="44" height="26" fill="#eeeeee"/>
<rect x="947" y="348" width="38" height="20" fill="#151515"/>
<rect x="948" y="349" width="36" height="18" fill="#2b2b2b"/>
<rect x="1036" y="345" width="44" height="26" fill="#eeeeee"/>
<rect x="1039" y="348" width="38" height="20" fill="#151515"/>
<rect x="1040" y="349" width="36" height="18" fill="#2b2b2b"/>
<rect x="1128" y="345" width="44" height="26" fill="#eeeeee"/>
<rect x="1131" y="348" width="38" height="20" fill="#151515"/>
<rect x="1132" y="349" width="36" height="18" fill="#2b2b2b"/>
<rect x="1220" y="345" width="44" height="26" fill="#eeeeee"/>
<rect x="1223" y="348" width="38" height="20" fill="#151515"/>
<rect x="1224" y="349" width="36" height="18" fill="#2b2b2b"/>
<rect x="1265" y="345" width="44" height="26" fill="#eeeeee"/>
<rect x="1268" y="348" width="38" height="20" fill="#151515"/>
<rect x="1269" y="349" width="36" height="18" fill="#2b2b2b"/>
<rect x="1357" y="345" width="44" height="26" fill="#eeeeee"/>
<rect x="1360" y="348" width="38" height="20" fill="#151515"/>
<rect x="1361" y="349" width="36" height="18" fill="#2b2b2b"/>
<rect x="1449" y="345" width="44" height="26" fill="#eeeeee"/>
<rect x="1452" y="348" width="38" height="20" fill="#151515"/>
<rect x="1453" y="349" width="36" height="18" fill="#2b2b2b"/>
<rect x="1495" y="345" width="44" height="26" fill="#eeeeee"/>
<rect x="1498" y="348" width="38" height="20" fill="#151515"/>
<rect x="1499" y="349" width="36" height="18" fill="#2b2b2b"/>
<rect x="1541" y="345" width="44" height="26" fill="#eeeeee"/>
<rect x="1544" y="348" width="38" height="20" fill="#151515"/>
<rect x="1545" y="349" width="36" height="18" fill="#2b2b2b"/>
<rect x="1586" y="345" width="44" height="26" fill="#eeeeee"/>
<rect x="1589" y="348" width="38" height="20" fill="#151515"/>
<rect x="1590" y="349" width="36" height="18" fill="#2b2b2b"/>
<rect x="1678" y="345" width="44" height="26" fill="#eeeeee"/>
<rect x="1681" y="348" width="38" height="20" fill="#151515"/>
<rect x="1682" y="349" width="36" height="18" fill="#2b2b2b"/>
<rect x="1816" y="345" width="44" height="26" fill="#eeeeee"/>
<rect x="1819" y="348" width="38" height="20" fill="#151515"/>
<rect x="1820" y="349" width="36" height="18" fill="#2b2b2b"/>
<rect x="1862" y="345" width="44" height="26" fill="#eeeeee"/>
<rect x="1865" y="348" width="38" height="20" fill="#151515"/>
<rect x="1866" y="349" width="36" height="18" fill="#2b2b2b"/>
<rect x="1999" y="345" width="44" height="26" fill="#eeeeee"/>
<rect x="2002" y="348" width="38" height="20" fill="#151515"/>
<rect x="2003" y="349" width="36" height="18" fill="#2b2b2b"/>
<rect x="2091" y="345" width="44" height="26" fill="#eeeeee"/>
<rect x="2094" y="348" width="38" height="20" fill="#151515"/>
<rect x="2095" y="349" width="36" height="18" fill="#2b2b2b"/>
<rect x="440" y="372" width="44" height="26" fill="#eeeeee"/>
<rect x="443" y="375" width="38" height="20" fill="#151515"/>
<rect x="444" y="376" width="36" height="18" fill="#2b2b2b"/>
<rect x="486" y="372" width="44" height="26" fill="#eeeeee"/>
<rect x="489" y="375" width="38" height="20" fill="#151515"/>
<rect x="490" y="376" width="36" height="18" fill="#2b2b2b"/>
<rect x="623" y="372" width="44" height="26" fill="#eeeeee"/>
<rect x="626" y="375" width="38" height="20" fill="#151515"/>
<rect x="627" y="376" width="36" height="18" fill="#2b2b2b"/>
<rect x="669" y="372" width="44" height="26" fill="#eeeeee"/>
<rect x="672" y="375" width="38" height="20" fill="#151515"/>
<rect x="673" y="376" width="36" height="18" fill="#2b2b2b"/>
<rect x="715" y="372" width="44" height="26" fill="#eeeeee"/>
<rect x="718" y="375" width="38" height="20" fill="#151515"/>
<rect x="719" y="376" width="36" height="18" fill="#2b2b2b"/>
<rect x="761" y="372" width="44" height="26" fill="#eeeeee"/>
<rect x="764" y="375" width="38" height="20" fill="#151515"/>
<rect x="765" y="376" width="36" height="18" fill="#2b2b2b"/>
<rect x="807" y="372" width="44" height="26" fill="#eeeeee"/>
<rect x="810" y="375" width="38" height="20" fill="#151515"/>
<rect x="811" y="376" width="36" height="18" fill="#2b2b2b"/>
<rect x="853" y="372" width="44" height="26" fill="#eeeeee"/>
<rect x="856" y="375" width="38" height="20" fill="#151515"/>
<rect x="857" y="376" width="36" height="18" fill="#2b2b2b"/>
<rect x="944" y="372" width="44" height="26" fill="#eeeeee"/>
<rect x="947" y="375" width="38" height="20" fill="#151515"/>
<rect x="948" y="376" width="36" height="18" fill="#2b2b2b"/>
<rect x="1036" y="372" width="44" height="26" fill="#eeeeee"/>
<rect x="1039" y="375" width="38" height="20" fill="#151515"/>
<rect x="1040" y="376" width="36" height="18" fill="#2b2b2b"/>
<rect x="1128" y="372" width="44" height="26" fill="#eeeeee"/>
<rect x="1131" y="375" width="38" height="20" fill="#151515"/>
<rect x="1132" y="376" width="36" height="18" fill="#2b2b2b"/>
<rect x="1220" y="372" width="44" height="26" fill="#eeeeee"/>
<rect x="1223" y="375" width="38" height="20" fill="#151515"/>
<rect x="1224" y="376" width="36" height="18" fill="#2b2b2b"/>
<rect x="1265" y="372" width="44" height="26" fill="#eeeeee"/>
<rect x="1268" y="375" width="38" height="20" fill="#151515"/>
<rect x="1269" y="376" width="36" height="18" fill="#2b2b2b"/>
<rect x="1357" y="372" width="44" height="26" fill="#eeeeee"/>
<rect x="1360" y="375" width="38" height="20" fill="#151515"/>
<rect x="1361" y="376" width="36" height="18" fill="#2b2b2b"/>
<rect x="1449" y="372" width="44" height="26" fill="#eeeeee"/>
<rect x="1452" y="375" width="38" height="20" fill="#151515"/>
<rect x="1453" y="376" width="36" height="18" fill="#2b2b2b"/>
<rect x="1495" y="372" width="44" height="26" fill="#eeeeee"/>
<rect x="1498" y="375" width="38" height="20" fill="#151515"/>
<rect x="1499" y="376" width="36" height="18" fill="#2b2b2b"/>
<rect x="1541" y="372" width="44" height="26" fill="#eeeeee"/>
<rect x="1544" y="375" width="38" height="20" fill="#151515"/>
<rect x="1545" y="376" width="36" height="18" fill="#2b2b2b"/>
<rect x="1586" y="372" width="44" height="26" fill="#eeeeee"/>
<rect x="1589" y="375" width="38" height="20" fill="#151515"/>
<rect x="1590" y="376" width="36" height="18" fill="#2b2b2b"/>
<rect x="1678" y="372" width="44" height="26" fill="#eeeeee"/>
<rect x="1681" y="375" width="38" height="20" fill="#151515"/>
<rect x="1682" y="376" width="36" height="18" fill="#2b2b2b"/>
<rect x="1816" y="372" width="44" height="26" fill="#eeeeee"/>
<rect x="1819" y="375" width="38" height="20" fill="#151515"/>
<rect x="1820" y="376" width="36" height="18" fill="#2b2b2b"/>
<rect x="1862" y="372" width="44" height="26" fill="#eeeeee"/>
<rect x="1865" y="375" width="38" height="20" fill="#151515"/>
<rect x="1866" y="376" width="36" height="18" fill="#2b2b2b"/>
<rect x="1999" y="372" width="44" height="26" fill="#eeeeee"/>
<rect x="2002" y="375" width="38" height="20" fill="#151515"/>
<rect x="2003" y="376" width="36" height="18" fill="#2b2b2b"/>
<rect x="2091" y="372" width="44" height="26" fill="#eeeeee"/>
<rect x="2094" y="375" width="38" height="20" fill="#151515"/>
<rect x="2095" y="376" width="36" height="18" fill="#2b2b2b"/>
<rect x="440" y="399" width="44" height="26" fill="#9b9b9b"/>
<rect x="486" y="399" width="44" height="26" fill="#9b9b9b"/>
<rect x="623" y="399" width="44" height="26" fill="#9b9b9b"/>
<rect x="669" y="399" width="44" height="26" fill="#9b9b9b"/>
<rect x="715" y="399" width="44" height="26" fill="#9b9b9b"/>
<rect x="761" y="399" width="44" height="26" fill="#9b9b9b"/>
<rect x="807" y="399" width="44" height="26" fill="#9b9b9b"/>
<rect x="853" y="399" width="44" height="26" fill="#9b9b9b"/>
<rect x="944" y="399" width="44" height="26" fill="#9b9b9b"/>
<rect x="1036" y="399" width="44" height="26" fill="#9b9b9b"/>
<rect x="1128" y="399" width="44" height="26" fill="#9b9b9b"/>
<rect x="1220" y="399" width="44" height="26" fill="#9b9b9b"/>
<rect x="1265" y="399" width="44" height="26" fill="#9b9b9b"/>
<rect x="1357" y="399" width="44" height="26" fill="#9b9b9b"/>
<rect x="1449" y="399" width="44" height="26" fill="#9b9b9b"/>
<rect x="1495" y="399" width="44" height="26" fill="#9b9b9b"/>
<rect x="1541" y="399" width="44" height="26" fill="#9b9b9b"/>
<rect x="1586" y="399" width="44" height="26" fill="#9b9b9b"/>
<rect x="1678" y="399" width="44" height="26" fill="#9b9b9b"/>
<rect x="1816" y="399" width="44" height="26" fill="#9b9b9b"/>
<rect x="1862" y="399" width="44" height="26" fill="#9b9b9b"/>
<rect x="1999" y="399" width="44" height="26" fill="#9b9b9b"/>
<rect x="2091" y="399" width="44" height="26" fill="#9b9b9b"/>
<rect x="440" y="426" width="44" height="26" fill="#9b9b9b"/>
<rect x="486" y="426" width="44" height="26" fill="#9b9b9b"/>
<rect x="623" y="426" width="44" height="26" fill="#9b9b9b"/>
<rect x="669" y="426" width="44" height="26" fill="#9b9b9b"/>
<rect x="715" y="426" width="44" height="26" fill="#9b9b9b"/>
<rect x="761" y="426" width="44" height="26" fill="#9b9b9b"/>
<rect x="807" y="426" width="44" height="26" fill="#9b9b9b"/>
<rect x="853" y="426" width="44" height="26" fill="#9b9b9b"/>
<rect x="944" y="426" width="44" height="26" fill="#9b9b9b"/>
<rect x="1036" y="426" width="44" height="26" fill="#9b9b9b"/>
<rect x="1128" y="426" width="44" height="26" fill="#9b9b9b"/>
<rect x="1220" y="426" width="44" height="26" fill="#9b9b9b"/>
<rect x="1265" y="426" width="44" height="26" fill="#9b9b9b"/>
<rect x="1357" y="426" width="44" height="26" fill="#9b9b9b"/>
<rect x="1449" y="426" width="44" height="26" fill="#9b9b9b"/>
<rect x="1495" y="426" width="44" height="26" fill="#9b9b9b"/>
<rect x="1541" y="426" width="44" height="26" fill="#9b9b9b"/>
<rect x="1586" y="426" width="44" height="26" fill="#9b9b9b"/>
<rect x="1678" y="426" width="44" height="26" fill="#9b9b9b"/>
<rect x="1816" y="426" width="44" height="26" fill="#9b9b9b"/>
<rect x="1862" y="426" width="44" height="26" fill="#9b9b9b"/>
<rect x="1999" y="426" width="44" height="26" fill="#9b9b9b"/>
<rect x="2091" y="426" width="44" height="26" fill="#9b9b9b"/>
<rect x="440" y="453" width="44" height="26" fill="#9b9b9b"/>
<rect x="486" y="453" width="44" height="26" fill="#9b9b9b"/>
<rect x="623" y="453" width="44" height="26" fill="#9b9b9b"/>
<rect x="669" y="453" width="44" height="26" fill="#9b9b9b"/>
<rect x="715" y="453" width="44" height="26" fill="#9b9b9b"/>
<rect x="761" y="453" width="44" height="26" fill="#9b9b9b"/>
<rect x="807" y="453" width="44" height="26" fill="#9b9b9b"/>
<rect x="853" y="453" width="44" height="26" fill="#9b9b9b"/>
<rect x="944" y="453" width="44" height="26" fill="#9b9b9b"/>
<rect x="1036" y="453" width="44" height="26" fill="#9b9b9b"/>
<rect x="1128" y="453" width="44" height="26" fill="#9b9b9b"/>
<rect x="1220" y="453" width="44" height="26" fill="#9b9b9b"/>
<rect x="1265" y="453" width="44" height="26" fill="#9b9b9b"/>
<rect x="1357" y="453" width="44" height="26" fill="#9b9b9b"/>
<rect x="1449" y="453" width="44" height="26" fill="#9b9b9b"/>
<rect x="1495" y="453" width="44" height="26" fill="#9b9b9b"/>
<rect x="1541" y="453" width="44" height="26" fill="#9b9b9b"/>
<rect x="1586" y="453" width="44" height="26" fill="#9b9b9b"/>
<rect x="1678" y="453" width="44" height="26" fill="#9b9b9b"/>
<rect x="1816" y="453" width="44" height="26" fill="#9b9b9b"/>
<rect x="1862" y="453" width="44" height="26" fill="#9b9b9b"/>
<rect x="1999" y="453" width="44" height="26" fill="#9b9b9b"/>
<rect x="2091" y="453" width="44" height="26" fill="#9b9b9b"/>
<rect x="440" y="480" width="44" height="26" fill="#eeeeee"/>
<rect x="443" y="483" width="38" height="20" fill="#151515"/>
<rect x="444" y="484" width="36" height="18" fill="#2b2b2b"/>
<rect x="486" y="480" width="44" height="26" fill="#eeeeee"/>
<rect x="489" y="483" width="38" height="20" fill="#151515"/>
<rect x="490" y="484" width="36" height="18" fill="#2b2b2b"/>
<rect x="578" y="480" width="44" height="26" fill="#eeeeee"/>
<rect x="581" y="483" width="38" height="20" fill="#151515"/>
<rect x="582" y="484" width="36" height="18" fill="#2b2b2b"/>
<rect x="623" y="480" width="44" height="26" fill="#eeeeee"/>
<rect x="626" y="483" width="38" height="20" fill="#151515"/>
<rect x="627" y="484" width="36" height="18" fill="#2b2b2b"/>
<rect x="669" y="480" width="44" height="26" fill="#eeeeee"/>
<rect x="672" y="483" width="38" height="20" fill="#151515"/>
<rect x="673" y="484" width="36" height="18" fill="#2b2b2b"/>
<rect x="715" y="480" width="44" height="26" fill="#eeeeee"/>
<rect x="718" y="483" width="38" height="20" fill="#151515"/>
<rect x="719" y="484" width="36" height="18" fill="#2b2b2b"/>
<rect x="761" y="480" width="44" height="26" fill="#eeeeee"/>
<rect x="764" y="483" width="38" height="20" fill="#151515"/>
<rect x="765" y="484" width="36" height="18" fill="#2b2b2b"/>
<rect x="807" y="480" width="44" height="26" fill="#eeeeee"/>
<rect x="810" y="483" width="38" height="20" fill="#151515"/>
<rect x="811" y="484" width="36" height="18" fill="#2b2b2b"/>
<rect x="853" y="480" width="44" height="26" fill="#eeeeee"/>
<rect x="856" y="483" width="38" height="20" fill="#151515"/>
<rect x="857" y="484" width="36" height="18" fill="#2b2b2b"/>
<rect x="944" y="480" width="44" height="26" fill="#eeeeee"/>
<rect x="947" y="483" width="38" height="20" fill="#151515"/>
<rect x="948" y="484" width="36" height="18" fill="#2b2b2b"/>
<rect x="1036" y="480" width="44" height="26" fill="#eeeeee"/>
<rect x="1039" y="483" width="38" height="20" fill="#151515"/>
<rect x="1040" y="484" width="36" height="18" fill="#2b2b2b"/>
<rect x="1128" y="480" width="44" height="26" fill="#eeeeee"/>
<rect x="1131" y="483" width="38" height="20" fill="#151515"/>
<rect x="1132" y="484" width="36" height="18" fill="#2b2b2b"/>
<rect x="1220" y="480" width="44" height="26" fill="#eeeeee"/>
<rect x="1223" y="483" width="38" height="20" fill="#151515"/>
<rect x="1224" y="484" width="36" height="18" fill="#2b2b2b"/>
<rect x="1265" y="480" width="44" height="26" fill="#eeeeee"/>
<rect x="1268" y="483" width="38" height="20" fill="#151515"/>
<rect x="1269" y="484" width="36" height="18" fill="#2b2b2b"/>
<rect x="1357" y="480" width="44" height="26" fill="#eeeeee"/>
<rect x="1360" y="483" width="38" height="20" fill="#151515"/>
<rect x="1361" y="484" width="36" height="18" fill="#2b2b2b"/>
<rect x="1449" y="480" width="44" height="26" fill="#eeeeee"/>
<rect x="1452" y="483" width="38" height="20" fill="#151515"/>
<rect x="1453" y="484" width="36" height="18" fill="#2b2b2b"/>
<rect x="1495" y="480" width="44" height="26" fill="#eeeeee"/>
<rect x="1498" y="483" width="38" height="20" fill="#151515"/>
<rect x="1499" y="484" width="36" height="18" fill="#2b2b2b"/>
<rect x="1541" y="480" width="44" height="26" fill="#bd7727"/>
<rect x="1544" y="483" width="38" height="20" fill="#151515"/>
<rect x="1545" y="484" width="36" height="18" fill="#2b2b2b"/>
<rect x="1586" y="480" width="44" height="26" fill="#bd7727"/>
<rect x="1589" y="483" width="38" height="20" fill="#151515"/>
<rect x="1590" y="484" width="36" height="18" fill="#2b2b2b"/>
<rect x="1678" y="480" width="44" height="26" fill="#bd7727"/>
<rect x="1681" y="483" width="38" height="20" fill="#151515"/>
<rect x="1682" y="484" width="36" height="18" fill="#2b2b2b"/>
<rect x="1724" y="480" width="44" height="26" fill="#eeeeee"/>
<rect x="1727" y="483" width="38" height="20" fill="#151515"/>
<rect x="1728" y="484" width="36" height="18" fill="#2b2b2b"/>
<rect x="1816" y="480" width="44" height="26" fill="#bd7727"/>
<rect x="1819" y="483" width="38" height="20" fill="#151515"/>
<rect x="1820" y="484" width="36" height="18" fill="#2b2b2b"/>
<rect x="1862" y="480" width="44" height="26" fill="#bd7727"/>
<rect x="1865" y="483" width="38" height="20" fill="#151515"/>
<rect x="1866" y="484" width="36" height="18" fill="#2b2b2b"/>
<rect x="1999" y="480" width="44" height="26" fill="#bd7727"/>
<rect x="2002" y="483" width="38" height="20" fill="#151515"/>
<rect x="2003" y="484" width="36" height="18" fill="#2b2b2b"/>
<rect x="2091" y="480" width="44" height="26" fill="#bd7727"/>
<rect x="2094" y="483" width="38" height="20" fill="#151515"/>
<rect x="2095" y="484" width="36" height="18" fill="#2b2b2b"/>
<rect x="440" y="507" width="44" height="26" fill="#eeeeee"/>
<rect x="443" y="510" width="38" height="20" fill="#151515"/>
<rect x="444" y="511" width="36" height="18" fill="#2b2b2b"/>
<rect x="486" y="507" width="44" height="26" fill="#eeeeee"/>
<rect x="489" y="510" width="38" height="20" fill="#151515"/>
<rect x="490" y="511" width="36" height="18" fill="#2b2b2b"/>
<rect x="623" y="507" width="44" height="26" fill="#eeeeee"/>
<rect x="626" y="510" width="38" height="20" fill="#151515"/>
<rect x="627" y="511" width="36" height="18" fill="#2b2b2b"/>
<rect x="669" y="507" width="44" height="26" fill="#eeeeee"/>
<rect x="672" y="510" width="38" height="20" fill="#151515"/>
<rect x="673" y="511" width="36" height="18" fill="#2b2b2b"/>
<rect x="715" y="507" width="44" height="26" fill="#eeeeee"/>
<rect x="718" y="510" width="38" height="20" fill="#151515"/>
<rect x="719" y="511" width="36" height="18" fill="#2b2b2b"/>
<rect x="761" y="507" width="44" height="26" fill="#eeeeee"/>
<rect x="764" y="510" width="38" height="20" fill="#151515"/>
<rect x="765" y="511" width="36" height="18" fill="#2b2b2b"/>
<rect x="807" y="507" width="44" height="26" fill="#eeeeee"/>
<rect x="810" y="510" width="38" height="20" fill="#151515"/>
<rect x="811" y="511" width="36" height="18" fill="#2b2b2b"/>
<rect x="853" y="507" width="44" height="26" fill="#eeeeee"/>
<rect x="856" y="510" width="38" height="20" fill="#151515"/>
<rect x="857" y="511" width="36" height="18" fill="#2b2b2b"/>
<rect x="944" y="507" width="44" height="26" fill="#eeeeee"/>
<rect x="947" y="510" width="38" height="20" fill="#151515"/>
<rect x="948" y="511" width="36" height="18" fill="#2b2b2b"/>
<rect x="1036" y="507" width="44" height="26" fill="#eeeeee"/>
<rect x="1039" y="510" width="38" height="20" fill="#151515"/>
<rect x="1040" y="511" width="36" height="18" fill="#2b2b2b"/>
<rect x="1128" y="507" width="44" height="26" fill="#eeeeee"/>
<rect x="1131" y="510" width="38" height="20" fill="#151515"/>
<rect x="1132" y="511" width="36" height="18" fill="#2b2b2b"/>
<rect x="1220" y="507" width="44" height="26" fill="#eeeeee"/>
<rect x="1223" y="510" width="38" height="20" fill="#151515"/>
<rect x="1224" y="511" width="36" height="18" fill="#2b2b2b"/>
<rect x="1265" y="507" width="44" height="26" fill="#eeeeee"/>
<rect x="1268" y="510" width="38" height="20" fill="#151515"/>
<rect x="1269" y="511" width="36" height="18" fill="#2b2b2b"/>
<rect x="1357" y="507" width="44" height="26" fill="#eeeeee"/>
<rect x="1360" y="510" width="38" height="20" fill="#151515"/>
<rect x="1361" y="511" width="36" height="18" fill="#2b2b2b"/>
<rect x="1449" y="507" width="44" height="26" fill="#eeeeee"/>
<rect x="1452" y="510" width="38" height="20" fill="#151515"/>
<rect x="1453" y="511" width="36" height="18" fill="#2b2b2b"/>
<rect x="1495" y="507" width="44" height="26" fill="#eeeeee"/>
<rect x="1498" y="510" width="38" height="20" fill="#151515"/>
<rect x="1499" y="511" width="36" height="18" fill="#2b2b2b"/>
<rect x="1541" y="507" width="44" height="26" fill="#eeeeee"/>
<rect x="1544" y="510" width="38" height="20" fill="#151515"/>
<rect x="1545" y="511" width="36" height="18" fill="#2b2b2b"/>
<rect x="1586" y="507" width="44" height="26" fill="#eeeeee"/>
<rect x="1589" y="510" width="38" height="20" fill="#151515"/>
<rect x="1590" y="511" width="36" height="18" fill="#2b2b2b"/>
<rect x="1678" y="507" width="44" height="26" fill="#eeeeee"/>
<rect x="1681" y="510" width="38" height="20" fill="#151515"/>
<rect x="1682" y="511" width="36" height="18" fill="#2b2b2b"/>
<rect x="1816" y="507" width="44" height="26" fill="#eeeeee"/>
<rect x="1819" y="510" width="38" height="20" fill="#151515"/>
<rect x="1820" y="511" width="36" height="18" fill="#2b2b2b"/>
<rect x="1862" y="507" width="44" height="26" fill="#eeeeee"/>
<rect x="1865" y="510" width="38" height="20" fill="#151515"/>
<rect x="1866" y="511" width="36" height="18" fill="#2b2b2b"/>
<rect x="1999" y="507" width="44" height="26" fill="#eeeeee"/>
<rect x="2002" y="510" width="38" height="20" fill="#151515"/>
<rect x="2003" y="511" width="36" height="18" fill="#2b2b2b"/>
<rect x="2091" y="507" width="44" height="26" fill="#eeeeee"/>
<rect x="2094" y="510" width="38" height="20" fill="#151515"/>
<rect x="2095" y="511" width="36" height="18" fill="#2b2b2b"/>
<rect x="440" y="534" width="44" height="26" fill="#eeeeee"/>
<rect x="443" y="537" width="38" height="20" fill="#151515"/>
<rect x="444" y="538" width="36" height="18" fill="#2b2b2b"/>
<rect x="486" y="534" width="44" height="26" fill="#eeeeee"/>
<rect x="489" y="537" width="38" height="20" fill="#151515"/>
<rect x="490" y="538" width="36" height="18" fill="#2b2b2b"/>
<rect x="623" y="534" width="44" height="26" fill="#eeeeee"/>
<rect x="626" y="537" width="38" height="20" fill="#151515"/>
<rect x="627" y="538" width="36" height="18" fill="#2b2b2b"/>
<rect x="669" y="534" width="44" height="26" fill="#eeeeee"/>
<rect x="672" y="537" width="38" height="20" fill="#151515"/>
<rect x="673" y="538" width="36" height="18" fill="#2b2b2b"/>
<rect x="715" y="534" width="44" height="26" fill="#eeeeee"/>
<rect x="718" y="537" width="38" height="20" fill="#151515"/>
<rect x="719" y="538" width="36" height="18" fill="#2b2b2b"/>
<rect x="761" y="534" width="44" height="26" fill="#eeeeee"/>
<rect x="764" y="537" width="38" height="20" fill="#151515"/>
<rect x="765" y="538" width="36" height="18" fill="#2b2b2b"/>
<rect x="807" y="534" width="44" height="26" fill="#eeeeee"/>
<rect x="810" y="537" width="38" height="20" fill="#151515"/>
<rect x="811" y="538" width="36" height="18" fill="#2b2b2b"/>
<rect x="853" y="534" width="44" height="26" fill="#eeeeee"/>
<rect x="856" y="537" width="38" height="20" fill="#151515"/>
<rect x="857" y="538" width="36" height="18" fill="#2b2b2b"/>
<rect x="944" y="534" width="44" height="26" fill="#eeeeee"/>
<rect x="947" y="537" width="38" height="20" fill="#151515"/>
<rect x="948" y="538" width="36" height="18" fill="#2b2b2b"/>
<rect x="1036" y="534" width="44" height="26" fill="#eeeeee"/>
<rect x="1039" y="537" width="38" height="20" fill="#151515"/>
<rect x="1040" y="538" width="36" height="18" fill="#2b2b2b"/>
<rect x="1128" y="534" width="44" height="26" fill="#eeeeee"/>
<rect x="1131" y="537" width="38" height="20" fill="#151515"/>
<rect x="1132" y="538" width="36" height="18" fill="#2b2b2b"/>
<rect x="1220" y="534" width="44" height="26" fill="#eeeeee"/>
<rect x="1223" y="537" width="38" height="20" fill="#151515"/>
<rect x="1224" y="538" width="36" height="18" fill="#2b2b2b"/>
<rect x="1265" y="534" width="44" height="26" fill="#eeeeee"/>
<rect x="1268" y="537" width="38" height="20" fill="#151515"/>
<rect x="1269" y="538" width="36" height="18" fill="#2b2b2b"/>
<rect x="1357" y="534" width="44" height="26" fill="#eeeeee"/>
<rect x="1360" y="537" width="38" height="20" fill="#151515"/>
<rect x="1361" y="538" width="36" height="18" fill="#2b2b2b"/>
<rect x="1449" y="534" width="44" height="26" fill="#eeeeee"/>
<rect x="1452" y="537" width="38" height="20" fill="#151515"/>
<rect x="1453" y="538" width="36" height="18" fill="#2b2b2b"/>
<rect x="1495" y="534" width="44" height="26" fill="#eeeeee"/>
<rect x="1498" y="537" width="38" height="20" fill="#151515"/>
<rect x="1499" y="538" width="36" height="18" fill="#2b2b2b"/>
<rect x="1541" y="534" width="44" height="26" fill="#eeeeee"/>
<rect x="1544" y="537" width="38" height="20" fill="#151515"/>
<rect x="1545" y="538" width="36" height="18" fill="#2b2b2b"/>
<rect x="1586" y="534" width="44" height="26" fill="#eeeeee"/>
<rect x="1589" y="537" width="38" height="20" fill="#151515"/>
<rect x="1590" y="538" width="36" height="18" fill="#2b2b2b"/>
<rect x="1678" y="534" width="44" height="26" fill="#eeeeee"/>
<rect x="1681" y="537" width="38" height="20" fill="#151515"/>
<rect x="1682" y="538" width="36" height="18" fill="#2b2b2b"/>
<rect x="1816" y="534" width="44" height="26" fill="#eeeeee"/>
<rect x="1819" y="537" width="38" height="20" fill="#151515"/>
<rect x="1820" y="538" width="36" height="18" fill="#2b2b2b"/>
<rect x="1862" y="534" width="44" height="26" fill="#eeeeee"/>
<rect x="1865" y="537" width="38" height="20" fill="#151515"/>
<rect x="1866" y="538" width="36" height="18" fill="#2b2b2b"/>
<rect x="1999" y="534" width="44" height="26" fill="#eeeeee"/>
<rect x="2002" y="537" width="38" height="20" fill="#151515"/>
<rect x="2003" y="538" width="36" height="18" fill="#2b2b2b"/>
<rect x="2091" y="534" width="44" height="26" fill="#eeeeee"/>
<rect x="2094" y="537" width="38" height="20" fill="#151515"/>
<rect x="2095" y="538" width="36" height="18" fill="#2b2b2b"/>
<rect x="440" y="561" width="44" height="26" fill="#eeeeee"/>
<rect x="443" y="564" width="38" height="20" fill="#151515"/>
<rect x="444" y="565" width="36" height="18" fill="#2b2b2b"/>
<rect x="486" y="561" width="44" height="26" fill="#eeeeee"/>
<rect x="489" y="564" width="38" height="20" fill="#151515"/>
<rect x="490" y="565" width="36" height="18" fill="#2b2b2b"/>
<rect x="623" y="561" width="44" height="26" fill="#eeeeee"/>
<rect x="626" y="564" width="38" height="20" fill="#151515"/>
<rect x="627" y="565" width="36" height="18" fill="#2b2b2b"/>
<rect x="669" y="561" width="44" height="26" fill="#eeeeee"/>
<rect x="672" y="564" width="38" height="20" fill="#151515"/>
<rect x="673" y="565" width="36" height="18" fill="#2b2b2b"/>
<rect x="715" y="561" width="44" height="26" fill="#eeeeee"/>
<rect x="718" y="564" width="38" height="20" fill="#151515"/>
<rect x="719" y="565" width="36" height="18" fill="#2b2b2b"/>
<rect x="761" y="561" width="44" height="26" fill="#eeeeee"/>
<rect x="764" y="564" width="38" height="20" fill="#151515"/>
<rect x="765" y="565" width="36" height="18" fill="#2b2b2b"/>
<rect x="807" y="561" width="44" height="26" fill="#eeeeee"/>
<rect x="810" y="564" width="38" height="20" fill="#151515"/>
<rect x="811" y="565" width="36" height="18" fill="#2b2b2b"/>
<rect x="853" y="561" width="44" height="26" fill="#eeeeee"/>
<rect x="856" y="564" width="38" height="20" fill="#151515"/>
<rect x="857" y="565" width="36" height="18" fill="#2b2b2b"/>
<rect x="944" y="561" width="44" height="26" fill="#eeeeee"/>
<rect x="947" y="564" width="38" height="20" fill="#151515"/>
<rect x="948" y="565" width="36" height="18" fill="#2b2b2b"/>
<rect x="1036" y="561" width="44" height="26" fill="#eeeeee"/>
<rect x="1039" y="564" width="38" height="20" fill="#151515"/>
<rect x="1040" y="565" width="36" height="18" fill="#2b2b2b"/>
<rect x="1128" y="561" width="44" height="26" fill="#eeeeee"/>
<rect x="1131" y="564" width="38" height="20" fill="#151515"/>
<rect x="1132" y="565" width="36" height="18" fill="#2b2b2b"/>
<rect x="1220" y="561" width="44" height="26" fill="#eeeeee"/>
<rect x="1223" y="564" width="38" height="20" fill="#151515"/>
<rect x="1224" y="565" width="36" height="18" fill="#2b2b2b"/>
<rect x="1265" y="561" width="44" height="26" fill="#eeeeee"/>
<rect x="1268" y="564" width="38" height="20" fill="#151515"/>
<rect x="1269" y="565" width="36" height="18" fill="#2b2b2b"/>
<rect x="1357" y="561" width="44" height="26" fill="#eeeeee"/>
<rect x="1360" y="564" width="38" height="20" fill="#151515"/>
<rect x="1361" y="565" width="36" height="18" fill="#2b2b2b"/>
<rect x="1449" y="561" width="44" height="26" fill="#eeeeee"/>
<rect x="1452" y="564" width="38" height="20" fill="#151515"/>
<rect x="1453" y="565" width="36" height="18" fill="#2b2b2b"/>
<rect x="1495" y="561" width="44" height="26" fill="#eeeeee"/>
<rect x="1498" y="564" width="38" height="20" fill="#151515"/>
<rect x="1499" y="565" width="36" height="18" fill="#2b2b2b"/>
<rect x="1541" y="561" width="44" height="26" fill="#eeeeee"/>
<rect x="1544" y="564" width="38" height="20" fill="#151515"/>
<rect x="1545" y="565" width="36" height="18" fill="#2b2b2b"/>
<rect x="1586" y="561" width="44" height="26" fill="#eeeeee"/>
<rect x="1589" y="564" width="38" height="20" fill="#151515"/>
<rect x="1590" y="565" width="36" height="18" fill="#2b2b2b"/>
<rect x="1678" y="561" width="44" height="26" fill="#eeeeee"/>
<rect x="1681" y="564" width="38" height="20" fill="#151515"/>
<rect x="1682" y="565" width="36" height="18" fill="#2b2b2b"/>
<rect x="1816" y="561" width="44" height="26" fill="#eeeeee"/>
<rect x="1819" y="564" width="38" height="20" fill="#151515"/>
<rect x="1820" y="565" width="36" height="18" fill="#2b2b2b"/>
<rect x="1862" y="561" width="44" height="26" fill="#eeeeee"/>
<rect x="1865" y="564" width="38" height="20" fill="#151515"/>
<rect x="1866" y="565" width="36" height="18" fill="#2b2b2b"/>
<rect x="1999" y="561" width="44" height="26" fill="#eeeeee"/>
<rect x="2002" y="564" width="38" height="20" fill="#151515"/>
<rect x="2003" y="565" width="36" height="18" fill="#2b2b2b"/>
<rect x="2091" y="561" width="44" height="26" fill="#eeeeee"/>
<rect x="2094" y="564" width="38" height="20" fill="#151515"/>
<rect x="2095" y="565" width="36" height="18" fill="#2b2b2b"/>
<rect x="440" y="588" width="44" height="26" fill="#9b9b9b"/>
<rect x="486" y="588" width="44" height="26" fill="#9b9b9b"/>
<rect x="623" y="588" width="44" height="26" fill="#9b9b9b"/>
<rect x="669" y="588" width="44" height="26" fill="#9b9b9b"/>
<rect x="715" y="588" width="44" height="26" fill="#9b9b9b"/>
<rect x="761" y="588" width="44" height="26" fill="#9b9b9b"/>
<rect x="807" y="588" width="44" height="26" fill="#9b9b9b"/>
<rect x="853" y="588" width="44" height="26" fill="#9b9b9b"/>
<rect x="944" y="588" width="44" height="26" fill="#9b9b9b"/>
<rect x="1036" y="588" width="44" height="26" fill="#9b9b9b"/>
<rect x="1128" y="588" width="44" height="26" fill="#9b9b9b"/>
<rect x="1220" y="588" width="44" height="26" fill="#9b9b9b"/>
<rect x="1265" y="588" width="44" height="26" fill="#9b9b9b"/>
<rect x="1357" y="588" width="44" height="26" fill="#9b9b9b"/>
<rect x="1449" y="588" width="44" height="26" fill="#9b9b9b"/>
<rect x="1495" y="588" width="44" height="26" fill="#9b9b9b"/>
<rect x="1541" y="588" width="44" height="26" fill="#9b9b9b"/>
<rect x="1586" y="588" width="44" height="26" fill="#9b9b9b"/>
<rect x="1678" y="588" width="44" height="26" fill="#9b9b9b"/>
<rect x="1816" y="588" width="44" height="26" fill="#9b9b9b"/>
<rect x="1862" y="588" width="44" height="26" fill="#9b9b9b"/>
<rect x="1999" y="588" width="44" height="26" fill="#9b9b9b"/>
<rect x="2091" y="588" width="44" height="26" fill="#9b9b9b"/>
<rect x="440" y="615" width="44" height="26" fill="#9b9b9b"/>
<rect x="486" y="615" width="44" height="26" fill="#9b9b9b"/>
<rect x="623" y="615" width="44" height="26" fill="#9b9b9b"/>
<rect x="669" y="615" width="44" height="26" fill="#9b9b9b"/>
<rect x="715" y="615" width="44" height="26" fill="#9b9b9b"/>
<rect x="761" y="615" width="44" height="26" fill="#9b9b9b"/>
<rect x="807" y="615" width="44" height="26" fill="#9b9b9b"/>
<rect x="853" y="615" width="44" height="26" fill="#9b9b9b"/>
<rect x="944" y="615" width="44" height="26" fill="#9b9b9b"/>
<rect x="1036" y="615" width="44" height="26" fill="#9b9b9b"/>
<rect x="1128" y="615" width="44" height="26" fill="#9b9b9b"/>
<rect x="1220" y="615" width="44" height="26" fill="#9b9b9b"/>
<rect x="1265" y="615" width="44" height="26" fill="#9b9b9b"/>
<rect x="1357" y="615" width="44" height="26" fill="#9b9b9b"/>
<rect x="1449" y="615" width="44" height="26" fill="#9b9b9b"/>
<rect x="1495" y="615" width="44" height="26" fill="#9b9b9b"/>
<rect x="1541" y="615" width="44" height="26" fill="#9b9b9b"/>
<rect x="1586" y="615" width="44" height="26" fill="#9b9b9b"/>
<rect x="1678" y="615" width="44" height="26" fill="#9b9b9b"/>
<rect x="1816" y="615" width="44" height="26" fill="#9b9b9b"/>
<rect x="1862" y="615" width="44" height="26" fill="#9b9b9b"/>
<rect x="1999" y="615" width="44" height="26" fill="#9b9b9b"/>
<rect x="2091" y="615" width="44" height="26" fill="#9b9b9b"/>
<rect x="440" y="642" width="44" height="26" fill="#9b9b9b"/>
<rect x="486" y="642" width="44" height="26" fill="#9b9b9b"/>
<rect x="623" y="642" width="44" height="26" fill="#9b9b9b"/>
<rect x="669" y="642" width="44" height="26" fill="#9b9b9b"/>
<rect x="715" y="642" width="44" height="26" fill="#9b9b9b"/>
<rect x="761" y="642" width="44" height="26" fill="#9b9b9b"/>
<rect x="807" y="642" width="44" height="26" fill="#9b9b9b"/>
<rect x="853" y="642" width="44" height="26" fill="#9b9b9b"/>
<rect x="944" y="642" width="44" height="26" fill="#9b9b9b"/>
<rect x="1036" y="642" width="44" height="26" fill="#9b9b9b"/>
<rect x="1128" y="642" width="44" height="26" fill="#9b9b9b"/>
<rect x="1220" y="642" width="44" height="26" fill="#9b9b9b"/>
<rect x="1265" y="642" width="44" height="26" fill="#9b9b9b"/>
<rect x="1357" y="642" width="44" height="26" fill="#9b9b9b"/>
<rect x="1449" y="642" width="44" height="26" fill="#9b9b9b"/>
<rect x="1495" y="642" width="44" height="26" fill="#9b9b9b"/>
<rect x="1541" y="642" width="44" height="26" fill="#9b9b9b"/>
<rect x="1586" y="642" width="44" height="26" fill="#9b9b9b"/>
<rect x="1678" y="642" width="44" height="26" fill="#9b9b9b"/>
<rect x="1816" y="642" width="44" height="26" fill="#9b9b9b"/>
<rect x="1862" y="642" width="44" height="26" fill="#9b9b9b"/>
<rect x="1999" y="642" width="44" height="26" fill="#9b9b9b"/>
<rect x="2091" y="642" width="44" height="26" fill="#9b9b9b"/>
<rect x="440" y="669" width="44" height="26" fill="#eeeeee"/>
<rect x="443" y="672" width="38" height="20" fill="#151515"/>
<rect x="444" y="673" width="36" height="18" fill="#2b2b2b"/>
<rect x="486" y="669" width="44" height="26" fill="#eeeeee"/>
<rect x="489" y="672" width="38" height="20" fill="#151515"/>
<rect x="490" y="673" width="36" height="18" fill="#2b2b2b"/>
<rect x="578" y="669" width="44" height="26" fill="#eeeeee"/>
<rect x="581" y="672" width="38" height="20" fill="#151515"/>
<rect x="582" y="673" width="36" height="18" fill="#2b2b2b"/>
<rect x="623" y="669" width="44" height="26" fill="#eeeeee"/>
<rect x="626" y="672" width="38" height="20" fill="#151515"/>
<rect x="627" y="673" width="36" height="18" fill="#2b2b2b"/>
<rect x="669" y="669" width="44" height="26" fill="#eeeeee"/>
<rect x="672" y="672" width="38" height="20" fill="#151515"/>
<rect x="673" y="673" width="36" height="18" fill="#2b2b2b"/>
<rect x="715" y="669" width="44" height="26" fill="#eeeeee"/>
<rect x="718" y="672" width="38" height="20" fill="#151515"/>
<rect x="719" y="673" width="36" height="18" fill="#2b2b2b"/>
<rect x="761" y="669" width="44" height="26" fill="#eeeeee"/>
<rect x="764" y="672" width="38" height="20" fill="#151515"/>
<rect x="765" y="673" width="36" height="18" fill="#2b2b2b"/>
<rect x="807" y="669" width="44" height="26" fill="#eeeeee"/>
<rect x="810" y="672" width="38" height="20" fill="#151515"/>
<rect x="811" y="673" width="36" height="18" fill="#2b2b2b"/>
<rect x="853" y="669" width="44" height="26" fill="#eeeeee"/>
<rect x="856" y="672" width="38" height="20" fill="#151515"/>
<rect x="857" y="673" width="36" height="18" fill="#2b2b2b"/>
<rect x="944" y="669" width="44" height="26" fill="#eeeeee"/>
<rect x="947" y="672" width="38" height="20" fill="#151515"/>
<rect x="948" y="673" width="36" height="18" fill="#2b2b2b"/>
<rect x="1036" y="669" width="44" height="26" fill="#eeeeee"/>
<rect x="1039" y="672" width="38" height="20" fill="#151515"/>
<rect x="1040" y="673" width="36" height="18" fill="#2b2b2b"/>
<rect x="1128" y="669" width="44" height="26" fill="#eeeeee"/>
<rect x="1131" y="672" width="38" height="20" fill="#151515"/>
<rect x="1132" y="673" width="36" height="18" fill="#2b2b2b"/>
<rect x="1220" y="669" width="44" height="26" fill="#eeeeee"/>
<rect x="1223" y="672" width="38" height="20" fill="#151515"/>
<rect x="1224" y="673" width="36" height="18" fill="#2b2b2b"/>
<rect x="1265" y="669" width="44" height="26" fill="#eeeeee"/>
<rect x="1268" y="672" width="38" height="20" fill="#151515"/>
<rect x="1269" y="673" width="36" height="18" fill="#2b2b2b"/>
<rect x="1357" y="669" width="44" height="26" fill="#eeeeee"/>
<rect x="1360" y="672" width="38" height="20" fill="#151515"/>
<rect x="1361" y="673" width="36" height="18" fill="#2b2b2b"/>
<rect x="1449" y="669" width="44" height="26" fill="#eeeeee"/>
<rect x="1452" y="672" width="38" height="20" fill="#151515"/>
<rect x="1453" y="673" width="36" height="18" fill="#2b2b2b"/>
<rect x="1495" y="669" width="44" height="26" fill="#eeeeee"/>
<rect x="1498" y="672" width="38" height="20" fill="#151515"/>
<rect x="1499" y="673" width="36" height="18" fill="#2b2b2b"/>
<rect x="1541" y="669" width="44" height="26" fill="#bd7727"/>
<rect x="1544" y="672" width="38" height="20" fill="#151515"/>
<rect x="1545" y="673" width="36" height="18" fill="#2b2b2b"/>
<rect x="1586" y="669" width="44" height="26" fill="#bd7727"/>
<rect x="1589" y="672" width="38" height="20" fill="#151515"/>
<rect x="1590" y="673" width="36" height="18" fill="#2b2b2b"/>
<rect x="1678" y="669" width="44" height="26" fill="#bd7727"/>
<rect x="1681" y="672" width="38" height="20" fill="#151515"/>
<rect x="1682" y="673" width="36" height="18" fill="#2b2b2b"/>
<rect x="1724" y="669" width="44" height="26" fill="#eeeeee"/>
<rect x="1727" y="672" width="38" height="20" fill="#151515"/>
<rect x="1728" y="673" width="36" height="18" fill="#2b2b2b"/>
<rect x="1816" y="669" width="44" height="26" fill="#bd7727"/>
<rect x="1819" y="672" width="38" height="20" fill="#151515"/>
<rect x="1820" y="673" width="36" height="18" fill="#2b2b2b"/>
<rect x="1862" y="669" width="44" height="26" fill="#bd7727"/>
<rect x="1865" y="672" width="38" height="20" fill="#151515"/>
<rect x="1866" y="673" width="36" height="18" fill="#2b2b2b"/>
<rect x="1999" y="669" width="44" height="26" fill="#bd7727"/>
<rect x="2002" y="672" width="38" height="20" fill="#151515"/>
<rect x="2003" y="673" width="36" height="18" fill="#2b2b2b"/>
<rect x="2091" y="669" width="44" height="26" fill="#bd7727"/>
<rect x="2094" y="672" width="38" height="20" fill="#151515"/>
<rect x="2095" y="673" width="36" height="18" fill="#2b2b2b"/>
<rect x="440" y="696" width="44" height="26" fill="#eeeeee"/>
<rect x="443" y="699" width="38" height="20" fill="#151515"/>
<rect x="444" y="700" width="36" height="18" fill="#2b2b2b"/>
<rect x="486" y="696" width="44" height="26" fill="#eeeeee"/>
<rect x="489" y="699" width="38" height="20" fill="#151515"/>
<rect x="490" y="700" width="36" height="18" fill="#2b2b2b"/>
<rect x="623" y="696" width="44" height="26" fill="#eeeeee"/>
<rect x="626" y="699" width="38" height="20" fill="#151515"/>
<rect x="627" y="700" width="36" height="18" fill="#2b2b2b"/>
<rect x="669" y="696" width="44" height="26" fill="#eeeeee"/>
<rect x="672" y="699" width="38" height="20" fill="#151515"/>
<rect x="673" y="700" width="36" height="18" fill="#2b2b2b"/>
<rect x="715" y="696" width="44" height="26" fill="#eeeeee"/>
<rect x="718" y="699" width="38" height="20" fill="#151515"/>
<rect x="719" y="700" width="36" height="18" fill="#2b2b2b"/>
<rect x="761" y="696" width="44" height="26" fill="#eeeeee"/>
<rect x="764" y="699" width="38" height="20" fill="#151515"/>
<rect x="765" y="700" width="36" height="18" fill="#2b2b2b"/>
<rect x="807" y="696" width="44" height="26" fill="#eeeeee"/>
<rect x="810" y="699" width="38" height="20" fill="#151515"/>
<rect x="811" y="700" width="36" height="18" fill="#2b2b2b"/>
<rect x="853" y="696" width="44" height="26" fill="#eeeeee"/>
<rect x="856" y="699" width="38" height="20" fill="#151515"/>
<rect x="857" y="700" width="36" height="18" fill="#2b2b2b"/>
<rect x="944" y="696" width="44" height="26" fill="#eeeeee"/>
<rect x="947" y="699" width="38" height="20" fill="#151515"/>
<rect x="948" y="700" width="36" height="18" fill="#2b2b2b"/>
<rect x="1036" y="696" width="44" height="26" fill="#eeeeee"/>
<rect x="1039" y="699" width="38" height="20" fill="#151515"/>
<rect x="1040" y="700" width="36" height="18" fill="#2b2b2b"/>
<rect x="1128" y="696" width="44" height="26" fill="#eeeeee"/>
<rect x="1131" y="699" width="38" height="20" fill="#151515"/>
<rect x="1132" y="700" width="36" height="18" fill="#2b2b2b"/>
<rect x="1220" y="696" width="44" height="26" fill="#eeeeee"/>
<rect x="1223" y="699" width="38" height="20" fill="#151515"/>
<rect x="1224" y="700" width="36" height="18" fill="#2b2b2b"/>
<rect x="1265" y="696" width="44" height="26" fill="#eeeeee"/>
<rect x="1268" y="699" width="38" height="20" fill="#151515"/>
<rect x="1269" y="700" width="36" height="18" fill="#2b2b2b"/>
<rect x="1357" y="696" width="44" height="26" fill="#eeeeee"/>
<rect x="1360" y="699" width="38" height="20" fill="#151515"/>
<rect x="1361" y="700" width="36" height="18" fill="#2b2b2b"/>
<rect x="1449" y="696" width="44" height="26" fill="#eeeeee"/>
<rect x="1452" y="699" width="38" height="20" fill="#151515"/>
<rect x="1453" y="700" width="36" height="18" fill="#2b2b2b"/>
<rect x="1495" y="696" width="44" height="26" fill="#eeeeee"/>
<rect x="1498" y="699" width="38" height="20" fill="#151515"/>
<rect x="1499" y="700" width="36" height="18" fill="#2b2b2b"/>
<rect x="1541" y="696" width="44" height="26" fill="#eeeeee"/>
<rect x="1544" y="699" width="38" height="20" fill="#151515"/>
<rect x="1545" y="700" width="36" height="18" fill="#2b2b2b"/>
<rect x="1586" y="696" width="44" height="26" fill="#eeeeee"/>
<rect x="1589" y="699" width="38" height="20" fill="#151515"/>
<rect x="1590" y="700" width="36" height="18" fill="#2b2b2b"/>
<rect x="1678" y="696" width="44" height="26" fill="#eeeeee"/>
<rect x="1681" y="699" width="38" height="20" fill="#151515"/>
<rect x="1682" y="700" width="36" height="18" fill="#2b2b2b"/>
<rect x="1816" y="696" width="44" height="26" fill="#eeeeee"/>
<rect x="1819" y="699" width="38" height="20" fill="#151515"/>
<rect x="1820" y="700" width="36" height="18" fill="#2b2b2b"/>
<rect x="1862" y="696" width="44" height="26" fill="#eeeeee"/>
<rect x="1865" y="699" width="38" height="20" fill="#151515"/>
<rect x="1866" y="700" width="36" height="18" fill="#2b2b2b"/>
<rect x="1999" y="696" width="44" height="26" fill="#eeeeee"/>
<rect x="2002" y="699" width="38" height="20" fill="#151515"/>
<rect x="2003" y="700" width="36" height="18" fill="#2b2b2b"/>
<rect x="2091" y="696" width="44" height="26" fill="#eeeeee"/>
<rect x="2094" y="699" width="38" height="20" fill="#151515"/>
<rect x="2095" y="700" width="36" height="18" fill="#2b2b2b"/>
<rect x="440" y="723" width="44" height="26" fill="#eeeeee"/>
<rect x="443" y="726" width="38" height="20" fill="#151515"/>
<rect x="444" y="727" width="36" height="18" fill="#2b2b2b"/>
<rect x="486" y="723" width="44" height="26" fill="#eeeeee"/>
<rect x="489" y="726" width="38" height="20" fill="#151515"/>
<rect x="490" y="727" width="36" height="18" fill="#2b2b2b"/>
<rect x="623" y="723" width="44" height="26" fill="#eeeeee"/>
<rect x="626" y="726" width="38" height="20" fill="#151515"/>
<rect x="627" y="727" width="36" height="18" fill="#2b2b2b"/>
<rect x="669" y="723" width="44" height="26" fill="#eeeeee"/>
<rect x="672" y="726" width="38" height="20" fill="#151515"/>
<rect x="673" y="727" width="36" height="18" fill="#2b2b2b"/>
<rect x="715" y="723" width="44" height="26" fill="#eeeeee"/>
<rect x="718" y="726" width="38" height="20" fill="#151515"/>
<rect x="719" y="727" width="36" height="18" fill="#2b2b2b"/>
<rect x="761" y="723" width="44" height="26" fill="#eeeeee"/>
<rect x="764" y="726" width="38" height="20" fill="#151515"/>
<rect x="765" y="727" width="36" height="18" fill="#2b2b2b"/>
<rect x="807" y="723" width="44" height="26" fill="#eeeeee"/>
<rect x="810" y="726" width="38" height="20" fill="#151515"/>
<rect x="811" y="727" width="36" height="18" fill="#2b2b2b"/>
<rect x="853" y="723" width="44" height="26" fill="#eeeeee"/>
<rect x="856" y="726" width="38" height="20" fill="#151515"/>
<rect x="857" y="727" width="36" height="18" fill="#2b2b2b"/>
<rect x="944" y="723" width="44" height="26" fill="#eeeeee"/>
<rect x="947" y="726" width="38" height="20" fill="#151515"/>
<rect x="948" y="727" width="36" height="18" fill="#2b2b2b"/>
<rect x="1036" y="723" width="44" height="26" fill="#eeeeee"/>
<rect x="1039" y="726" width="38" height="20" fill="#151515"/>
<rect x="1040" y="727" width="36" height="18" fill="#2b2b2b"/>
<rect x="1128" y="723" width="44" height="26" fill="#eeeeee"/>
<rect x="1131" y="726" width="38" height="20" fill="#151515"/>
<rect x="1132" y="727" width="36" height="18" fill="#2b2b2b"/>
<rect x="1220" y="723" width="44" height="26" fill="#eeeeee"/>
<rect x="1223" y="726" width="38" height="20" fill="#151515"/>
<rect x="1224" y="727" width="36" height="18" fill="#2b2b2b"/>
<rect x="1265" y="723" width="44" height="26" fill="#eeeeee"/>
<rect x="1268" y="726" width="38" height="20" fill="#151515"/>
<rect x="1269" y="727" width="36" height="18" fill="#2b2b2b"/>
<rect x="1357" y="723" width="44" height="26" fill="#eeeeee"/>
<rect x="1360" y="726" width="38" height="20" fill="#151515"/>
<rect x="1361" y="727" width="36" height="18" fill="#2b2b2b"/>
<rect x="1449" y="723" width="44" height="26" fill="#eeeeee"/>
<rect x="1452" y="726" width="38" height="20" fill="#151515"/>
<rect x="1453" y="727" width="36" height="18" fill="#2b2b2b"/>
<rect x="1495" y="723" width="44" height="26" fill="#eeeeee"/>
<rect x="1498" y="726" width="38" height="20" fill="#151515"/>
<rect x="1499" y="727" width="36" height="18" fill="#2b2b2b"/>
<rect x="1541" y="723" width="44" height="26" fill="#eeeeee"/>
<rect x="1544" y="726" width="38" height="20" fill="#151515"/>
<rect x="1545" y="727" width="36" height="18" fill="#2b2b2b"/>
<rect x="1586" y="723" width="44" height="26" fill="#eeeeee"/>
<rect x="1589" y="726" width="38" height="20" fill="#151515"/>
<rect x="1590" y="727" width="36" height="18" fill="#2b2b2b"/>
<rect x="1678" y="723" width="44" height="26" fill="#eeeeee"/>
<rect x="1681" y="726" width="38" height="20" fill="#151515"/>
<rect x="1682" y="727" width="36" height="18" fill="#2b2b2b"/>
<rect x="1816" y="723" width="44" height="26" fill="#eeeeee"/>
<rect x="1819" y="726" width="38" height="20" fill="#151515"/>
<rect x="1820" y="727" width="36" height="18" fill="#2b2b2b"/>
<rect x="1862" y="723" width="44" height="26" fill="#eeeeee"/>
<rect x="1865" y="726" width="38" height="20" fill="#151515"/>
<rect x="1866" y="727" width="36" height="18" fill="#2b2b2b"/>
<rect x="1999" y="723" width="44" height="26" fill="#eeeeee"/>
<rect x="2002" y="726" width="38" height="20" fill="#151515"/>
<rect x="2003" y="727" width="36" height="18" fill="#2b2b2b"/>
<rect x="2091" y="723" width="44" height="26" fill="#eeeeee"/>
<rect x="2094" y="726" width="38" height="20" fill="#151515"/>
<rect x="2095" y="727" width="36" height="18" fill="#2b2b2b"/>
<rect x="440" y="750" width="44" height="26" fill="#eeeeee"/>
<rect x="443" y="753" width="38" height="20" fill="#151515"/>
<rect x="444" y="754" width="36" height="18" fill="#2b2b2b"/>
<rect x="486" y="750" width="44" height="26" fill="#eeeeee"/>
<rect x="489" y="753" width="38" height="20" fill="#151515"/>
<rect x="490" y="754" width="36" height="18" fill="#2b2b2b"/>
<rect x="623" y="750" width="44" height="26" fill="#eeeeee"/>
<rect x="626" y="753" width="38" height="20" fill="#151515"/>
<rect x="627" y="754" width="36" height="18" fill="#2b2b2b"/>
<rect x="669" y="750" width="44" height="26" fill="#eeeeee"/>
<rect x="672" y="753" width="38" height="20" fill="#151515"/>
<rect x="673" y="754" width="36" height="18" fill="#2b2b2b"/>
<rect x="715" y="750" width="44" height="26" fill="#eeeeee"/>
<rect x="718" y="753" width="38" height="20" fill="#151515"/>
<rect x="719" y="754" width="36" height="18" fill="#2b2b2b"/>
<rect x="761" y="750" width="44" height="26" fill="#eeeeee"/>
<rect x="764" y="753" width="38" height="20" fill="#151515"/>
<rect x="765" y="754" width="36" height="18" fill="#2b2b2b"/>
<rect x="807" y="750" width="44" height="26" fill="#eeeeee"/>
<rect x="810" y="753" width="38" height="20" fill="#151515"/>
<rect x="811" y="754" width="36" height="18" fill="#2b2b2b"/>
<rect x="853" y="750" width="44" height="26" fill="#eeeeee"/>
<rect x="856" y="753" width="38" height="20" fill="#151515"/>
<rect x="857" y="754" width="36" height="18" fill="#2b2b2b"/>
<rect x="944" y="750" width="44" height="26" fill="#eeeeee"/>
<rect x="947" y="753" width="38" height="20" fill="#151515"/>
<rect x="948" y="754" width="36" height="18" fill="#2b2b2b"/>
<rect x="1036" y="750" width="44" height="26" fill="#eeeeee"/>
<rect x="1039" y="753" width="38" height="20" fill="#151515"/>
<rect x="1040" y="754" width="36" height="18" fill="#2b2b2b"/>
<rect x="1128" y="750" width="44" height="26" fill="#eeeeee"/>
<rect x="1131" y="753" width="38" height="20" fill="#151515"/>
<rect x="1132" y="754" width="36" height="18" fill="#2b2b2b"/>
<rect x="1220" y="750" width="44" height="26" fill="#eeeeee"/>
<rect x="1223" y="753" width="38" height="20" fill="#151515"/>
<rect x="1224" y="754" width="36" height="18" fill="#2b2b2b"/>
<rect x="1265" y="750" width="44" height="26" fill="#eeeeee"/>
<rect x="1268" y="753" width="38" height="20" fill="#151515"/>
<rect x="1269" y="754" width="36" height="18" fill="#2b2b2b"/>
<rect x="1357" y="750" width="44" height="26" fill="#eeeeee"/>
<rect x="1360" y="753" width="38" height="20" fill="#151515"/>
<rect x="1361" y="754" width="36" height="18" fill="#2b2b2b"/>
<rect x="1449" y="750" width="44" height="26" fill="#eeeeee"/>
<rect x="1452" y="753" width="38" height="20" fill="#151515"/>
<rect x="1453" y="754" width="36" height="18" fill="#2b2b2b"/>
<rect x="1495" y="750" width="44" height="26" fill="#eeeeee"/>
<rect x="1498" y="753" width="38" height="20" fill="#151515"/>
<rect x="1499" y="754" width="36" height="18" fill="#2b2b2b"/>
<rect x="1541" y="750" width="44" height="26" fill="#eeeeee"/>
<rect x="1544" y="753" width="38" height="20" fill="#151515"/>
<rect x="1545" y="754" width="36" height="18" fill="#2b2b2b"/>
<rect x="1586" y="750" width="44" height="26" fill="#eeeeee"/>
<rect x="1589" y="753" width="38" height="20" fill="#151515"/>
<rect x="1590" y="754" width="36" height="18" fill="#2b2b2b"/>
<rect x="1678" y="750" width="44" height="26" fill="#eeeeee"/>
<rect x="1681" y="753" width="38" height="20" fill="#151515"/>
<rect x="1682" y="754" width="36" height="18" fill="#2b2b2b"/>
<rect x="1816" y="750" width="44" height="26" fill="#eeeeee"/>
<rect x="1819" y="753" width="38" height="20" fill="#151515"/>
<rect x="1820" y="754" width="36" height="18" fill="#2b2b2b"/>
<rect x="1862" y="750" width="44" height="26" fill="#eeeeee"/>
<rect x="1865" y="753" width="38" height="20" fill="#151515"/>
<rect x="1866" y="754" width="36" height="18" fill="#2b2b2b"/>
<rect x="1999" y="750" width="44" height="26" fill="#eeeeee"/>
<rect x="2002" y="753" width="38" height="20" fill="#151515"/>
<rect x="2003" y="754" width="36" height="18" fill="#2b2b2b"/>
<rect x="2091" y="750" width="44" height="26" fill="#eeeeee"/>
<rect x="2094" y="753" width="38" height="20" fill="#151515"/>
<rect x="2095" y="754" width="36" height="18" fill="#2b2b2b"/>
<rect x="440" y="777" width="44" height="26" fill="#9b9b9b"/>
<rect x="486" y="777" width="44" height="26" fill="#9b9b9b"/>
<rect x="623" y="777" width="44" height="26" fill="#9b9b9b"/>
<rect x="669" y="777" width="44" height="26" fill="#9b9b9b"/>
<rect x="715" y="777" width="44" height="26" fill="#9b9b9b"/>
<rect x="761" y="777" width="44" height="26" fill="#9b9b9b"/>
<rect x="807" y="777" width="44" height="26" fill="#9b9b9b"/>
<rect x="853" y="777" width="44" height="26" fill="#9b9b9b"/>
<rect x="944" y="777" width="44" height="26" fill="#9b9b9b"/>
<rect x="1036" y="777" width="44" height="26" fill="#9b9b9b"/>
<rect x="1128" y="777" width="44" height="26" fill="#9b9b9b"/>
<rect x="1220" y="777" width="44" height="26" fill="#9b9b9b"/>
<rect x="1265" y="777" width="44" height="26" fill="#9b9b9b"/>
<rect x="1357" y="777" width="44" height="26" fill="#9b9b9b"/>
<rect x="1449" y="777" width="44" height="26" fill="#9b9b9b"/>
<rect x="1495" y="777" width="44" height="26" fill="#9b9b9b"/>
<rect x="1541" y="777" width="44" height="26" fill="#9b9b9b"/>
<rect x="1586" y="777" width="44" height="26" fill="#9b9b9b"/>
<rect x="1678" y="777" width="44" height="26" fill="#9b9b9b"/>
<rect x="1816" y="777" width="44" height="26" fill="#9b9b9b"/>
<rect x="1862" y="777" width="44" height="26" fill="#9b9b9b"/>
<rect x="1999" y="777" width="44" height="26" fill="#9b9b9b"/>
<rect x="2091" y="777" width="44" height="26" fill="#9b9b9b"/>
<rect x="440" y="804" width="44" height="26" fill="#9b9b9b"/>
<rect x="486" y="804" width="44" height="26" fill="#9b9b9b"/>
<rect x="623" y="804" width="44" height="26" fill="#9b9b9b"/>
<rect x="669" y="804" width="44" height="26" fill="#9b9b9b"/>
<rect x="715" y="804" width="44" height="26" fill="#9b9b9b"/>
<rect x="761" y="804" width="44" height="26" fill="#9b9b9b"/>
<rect x="807" y="804" width="44" height="26" fill="#9b9b9b"/>
<rect x="853" y="804" width="44" height="26" fill="#9b9b9b"/>
<rect x="944" y="804" width="44" height="26" fill="#9b9b9b"/>
<rect x="1036" y="804" width="44" height="26" fill="#9b9b9b"/>
<rect x="1128" y="804" width="44" height="26" fill="#9b9b9b"/>
<rect x="1220" y="804" width="44" height="26" fill="#9b9b9b"/>
<rect x="1265" y="804" width="44" height="26" fill="#9b9b9b"/>
<rect x="1357" y="804" width="44" height="26" fill="#9b9b9b"/>
<rect x="1449" y="804" width="44" height="26" fill="#9b9b9b"/>
<rect x="1495" y="804" width="44" height="26" fill="#9b9b9b"/>
<rect x="1541" y="804" width="44" height="26" fill="#9b9b9b"/>
<rect x="1586" y="804" width="44" height="26" fill="#9b9b9b"/>
<rect x="1678" y="804" width="44" height="26" fill="#9b9b9b"/>
<rect x="1816" y="804" width="44" height="26" fill="#9b9b9b"/>
<rect x="1862" y="804" width="44" height="26" fill="#9b9b9b"/>
<rect x="1999" y="804" width="44" height="26" fill="#9b9b9b"/>
<rect x="2091" y="804" width="44" height="26" fill="#9b9b9b"/>
<rect x="440" y="831" width="44" height="26" fill="#9b9b9b"/>
<rect x="486" y="831" width="44" height="26" fill="#9b9b9b"/>
<rect x="623" y="831" width="44" height="26" fill="#9b9b9b"/>
<rect x="669" y="831" width="44" height="26" fill="#9b9b9b"/>
<rect x="715" y="831" width="44" height="26" fill="#9b9b9b"/>
<rect x="761" y="831" width="44" height="26" fill="#9b9b9b"/>
<rect x="807" y="831" width="44" height="26" fill="#9b9b9b"/>
<rect x="853" y="831" width="44" height="26" fill="#9b9b9b"/>
<rect x="944" y="831" width="44" height="26" fill="#9b9b9b"/>
<rect x="1036" y="831" width="44" height="26" fill="#9b9b9b"/>
<rect x="1128" y="831" width="44" height="26" fill="#9b9b9b"/>
<rect x="1220" y="831" width="44" height="26" fill="#9b9b9b"/>
<rect x="1265" y="831" width="44" height="26" fill="#9b9b9b"/>
<rect x="1357" y="831" width="44" height="26" fill="#9b9b9b"/>
<rect x="1449" y="831" width="44" height="26" fill="#9b9b9b"/>
<rect x="1495" y="831" width="44" height="26" fill="#9b9b9b"/>
<rect x="1541" y="831" width="44" height="26" fill="#9b9b9b"/>
<rect x="1586" y="831" width="44" height="26" fill="#9b9b9b"/>
<rect x="1678" y="831" width="44" height="26" fill="#9b9b9b"/>
<rect x="1816" y="831" width="44" height="26" fill="#9b9b9b"/>
<rect x="1862" y="831" width="44" height="26" fill="#9b9b9b"/>
<rect x="1999" y="831" width="44" height="26" fill="#9b9b9b"/>
<rect x="2091" y="831" width="44" height="26" fill="#9b9b9b"/>
<rect x="440" y="858" width="44" height="26" fill="#eeeeee"/>
<rect x="443" y="861" width="38" height="20" fill="#151515"/>
<rect x="444" y="862" width="36" height="18" fill="#2b2b2b"/>
<rect x="486" y="858" width="44" height="26" fill="#eeeeee"/>
<rect x="489" y="861" width="38" height="20" fill="#151515"/>
<rect x="490" y="862" width="36" height="18" fill="#2b2b2b"/>
<rect x="623" y="858" width="44" height="26" fill="#eeeeee"/>
<rect x="626" y="861" width="38" height="20" fill="#151515"/>
<rect x="627" y="862" width="36" height="18" fill="#2b2b2b"/>
<rect x="669" y="858" width="44" height="26" fill="#eeeeee"/>
<rect x="672" y="861" width="38" height="20" fill="#151515"/>
<rect x="673" y="862" width="36" height="18" fill="#2b2b2b"/>
<rect x="715" y="858" width="44" height="26" fill="#eeeeee"/>
<rect x="718" y="861" width="38" height="20" fill="#151515"/>
<rect x="719" y="862" width="36" height="18" fill="#2b2b2b"/>
<rect x="761" y="858" width="44" height="26" fill="#eeeeee"/>
<rect x="764" y="861" width="38" height="20" fill="#151515"/>
<rect x="765" y="862" width="36" height="18" fill="#2b2b2b"/>
<rect x="807" y="858" width="44" height="26" fill="#eeeeee"/>
<rect x="810" y="861" width="38" height="20" fill="#151515"/>
<rect x="811" y="862" width="36" height="18" fill="#2b2b2b"/>
<rect x="853" y="858" width="44" height="26" fill="#eeeeee"/>
<rect x="856" y="861" width="38" height="20" fill="#151515"/>
<rect x="857" y="862" width="36" height="18" fill="#2b2b2b"/>
<rect x="944" y="858" width="44" height="26" fill="#eeeeee"/>
<rect x="947" y="861" width="38" height="20" fill="#151515"/>
<rect x="948" y="862" width="36" height="18" fill="#2b2b2b"/>
<rect x="1036" y="858" width="44" height="26" fill="#eeeeee"/>
<rect x="1039" y="861" width="38" height="20" fill="#151515"/>
<rect x="1040" y="862" width="36" height="18" fill="#2b2b2b"/>
<rect x="1128" y="858" width="44" height="26" fill="#eeeeee"/>
<rect x="1131" y="861" width="38" height="20" fill="#151515"/>
<rect x="1132" y="862" width="36" height="18" fill="#2b2b2b"/>
<rect x="1220" y="858" width="44" height="26" fill="#eeeeee"/>
<rect x="1223" y="861" width="38" height="20" fill="#151515"/>
<rect x="1224" y="862" width="36" height="18" fill="#2b2b2b"/>
<rect x="1265" y="858" width="44" height="26" fill="#eeeeee"/>
<rect x="1268" y="861" width="38" height="20" fill="#151515"/>
<rect x="1269" y="862" width="36" height="18" fill="#2b2b2b"/>
<rect x="1357" y="858" width="44" height="26" fill="#eeeeee"/>
<rect x="1360" y="861" width="38" height="20" fill="#151515"/>
<rect x="1361" y="862" width="36" height="18" fill="#2b2b2b"/>
<rect x="1449" y="858" width="44" height="26" fill="#eeeeee"/>
<rect x="1452" y="861" width="38" height="20" fill="#151515"/>
<rect x="1453" y="862" width="36" height="18" fill="#2b2b2b"/>
<rect x="1495" y="858" width="44" height="26" fill="#eeeeee"/>
<rect x="1498" y="861" width="38" height="20" fill="#151515"/>
<rect x="1499" y="862" width="36" height="18" fill="#2b2b2b"/>
<rect x="1541" y="858" width="44" height="26" fill="#bd7727"/>
<rect x="1544" y="861" width="38" height="20" fill="#151515"/>
<rect x="1545" y="862" width="36" height="18" fill="#2b2b2b"/>
<rect x="1586" y="858" width="44" height="26" fill="#bd7727"/>
<rect x="1589" y="861" width="38" height="20" fill="#151515"/>
<rect x="1590" y="862" width="36" height="18" fill="#2b2b2b"/>
<rect x="1678" y="858" width="44" height="26" fill="#bd7727"/>
<rect x="1681" y="861" width="38" height="20" fill="#151515"/>
<rect x="1682" y="862" width="36" height="18" fill="#2b2b2b"/>
<rect x="1816" y="858" width="44" height="26" fill="#bd7727"/>
<rect x="1819" y="861" width="38" height="20" fill="#151515"/>
<rect x="1820" y="862" width="36" height="18" fill="#2b2b2b"/>
<rect x="1862" y="858" width="44" height="26" fill="#bd7727"/>
<rect x="1865" y="861" width="38" height="20" fill="#151515"/>
<rect x="1866" y="862" width="36" height="18" fill="#2b2b2b"/>
<rect x="1999" y="858" width="44" height="26" fill="#bd7727"/>
<rect x="2002" y="861" width="38" height="20" fill="#151515"/>
<rect x="2003" y="862" width="36" height="18" fill="#2b2b2b"/>
<rect x="2091" y="858" width="44" height="26" fill="#bd7727"/>
<rect x="2094" y="861" width="38" height="20" fill="#151515"/>
<rect x="2095" y="862" width="36" height="18" fill="#2b2b2b"/>
<rect x="440" y="885" width="44" height="26" fill="#eeeeee"/>
<rect x="443" y="888" width="38" height="20" fill="#151515"/>
<rect x="444" y="889" width="36" height="18" fill="#2b2b2b"/>
<rect x="486" y="885" width="44" height="26" fill="#eeeeee"/>
<rect x="489" y="888" width="38" height="20" fill="#151515"/>
<rect x="490" y="889" width="36" height="18" fill="#2b2b2b"/>
<rect x="623" y="885" width="44" height="26" fill="#eeeeee"/>
<rect x="626" y="888" width="38" height="20" fill="#151515"/>
<rect x="627" y="889" width="36" height="18" fill="#2b2b2b"/>
<rect x="669" y="885" width="44" height="26" fill="#eeeeee"/>
<rect x="672" y="888" width="38" height="20" fill="#151515"/>
<rect x="673" y="889" width="36" height="18" fill="#2b2b2b"/>
<rect x="715" y="885" width="44" height="26" fill="#eeeeee"/>
<rect x="718" y="888" width="38" height="20" fill="#151515"/>
<rect x="719" y="889" width="36" height="18" fill="#2b2b2b"/>
<rect x="761" y="885" width="44" height="26" fill="#eeeeee"/>
<rect x="764" y="888" width="38" height="20" fill="#151515"/>
<rect x="765" y="889" width="36" height="18" fill="#2b2b2b"/>
<rect x="807" y="885" width="44" height="26" fill="#eeeeee"/>
<rect x="810" y="888" width="38" height="20" fill="#151515"/>
<rect x="811" y="889" width="36" height="18" fill="#2b2b2b"/>
<rect x="853" y="885" width="44" height="26" fill="#eeeeee"/>
<rect x="856" y="888" width="38" height="20" fill="#151515"/>
<rect x="857" y="889" width="36" height="18" fill="#2b2b2b"/>
<rect x="944" y="885" width="44" height="26" fill="#eeeeee"/>
<rect x="947" y="888" width="38" height="20" fill="#151515"/>
<rect x="948" y="889" width="36" height="18" fill="#2b2b2b"/>
<rect x="1036" y="885" width="44" height="26" fill="#eeeeee"/>
<rect x="1039" y="888" width="38" height="20" fill="#151515"/>
<rect x="1040" y="889" width="36" height="18" fill="#2b2b2b"/>
<rect x="1128" y="885" width="44" height="26" fill="#eeeeee"/>
<rect x="1131" y="888" width="38" height="20" fill="#151515"/>
<rect x="1132" y="889" width="36" height="18" fill="#2b2b2b"/>
<rect x="1220" y="885" width="44" height="26" fill="#eeeeee"/>
<rect x="1223" y="888" width="38" height="20" fill="#151515"/>
<rect x="1224" y="889" width="36" height="18" fill="#2b2b2b"/>
<rect x="1265" y="885" width="44" height="26" fill="#eeeeee"/>
<rect x="1268" y="888" width="38" height="20" fill="#151515"/>
<rect x="1269" y="889" width="36" height="18" fill="#2b2b2b"/>
<rect x="1357" y="885" width="44" height="26" fill="#eeeeee"/>
<rect x="1360" y="888" width="38" height="20" fill="#151515"/>
<rect x="1361" y="889" width="36" height="18" fill="#2b2b2b"/>
<rect x="1449" y="885" width="44" height="26" fill="#eeeeee"/>
<rect x="1452" y="888" width="38" height="20" fill="#151515"/>
<rect x="1453" y="889" width="36" height="18" fill="#2b2b2b"/>
<rect x="1495" y="885" width="44" height="26" fill="#eeeeee"/>
<rect x="1498" y="888" width="38" height="20" fill="#151515"/>
<rect x="1499" y="889" width="36" height="18" fill="#2b2b2b"/>
<rect x="1541" y="885" width="44" height="26" fill="#eeeeee"/>
<rect x="1544" y="888" width="38" height="20" fill="#151515"/>
<rect x="1545" y="889" width="36" height="18" fill="#2b2b2b"/>
<rect x="1586" y="885" width="44" height="26" fill="#eeeeee"/>
<rect x="1589" y="888" width="38" height="20" fill="#151515"/>
<rect x="1590" y="889" width="36" height="18" fill="#2b2b2b"/>
<rect x="1678" y="885" width="44" height="26" fill="#eeeeee"/>
<rect x="1681" y="888" width="38" height="20" fill="#151515"/>
<rect x="1682" y="889" width="36" height="18" fill="#2b2b2b"/>
<rect x="1816" y="885" width="44" height="26" fill="#eeeeee"/>
<rect x="1819" y="888" width="38" height="20" fill="#151515"/>
<rect x="1820" y="889" width="36" height="18" fill="#2b2b2b"/>
<rect x="1862" y="885" width="44" height="26" fill="#eeeeee"/>
<rect x="1865" y="888" width="38" height="20" fill="#151515"/>
<rect x="1866" y="889" width="36" height="18" fill="#2b2b2b"/>
<rect x="1999" y="885" width="44" height="26" fill="#eeeeee"/>
<rect x="2002" y="888" width="38" height="20" fill="#151515"/>
<rect x="2003" y="889" width="36" height="18" fill="#2b2b2b"/>
<rect x="2091" y="885" width="44" height="26" fill="#eeeeee"/>
<rect x="2094" y="888" width="38" height="20" fill="#151515"/>
<rect x="2095" y="889" width="36" height="18" fill="#2b2b2b"/>
<rect x="440" y="912" width="44" height="26" fill="#eeeeee"/>
<rect x="443" y="915" width="38" height="20" fill="#151515"/>
<rect x="444" y="916" width="36" height="18" fill="#2b2b2b"/>
<rect x="486" y="912" width="44" height="26" fill="#eeeeee"/>
<rect x="489" y="915" width="38" height="20" fill="#151515"/>
<rect x="490" y="916" width="36" height="18" fill="#2b2b2b"/>
<rect x="623" y="912" width="44" height="26" fill="#eeeeee"/>
<rect x="626" y="915" width="38" height="20" fill="#151515"/>
<rect x="627" y="916" width="36" height="18" fill="#2b2b2b"/>
<rect x="669" y="912" width="44" height="26" fill="#eeeeee"/>
<rect x="672" y="915" width="38" height="20" fill="#151515"/>
<rect x="673" y="916" width="36" height="18" fill="#2b2b2b"/>
<rect x="715" y="912" width="44" height="26" fill="#eeeeee"/>
<rect x="718" y="915" width="38" height="20" fill="#151515"/>
<rect x="719" y="916" width="36" height="18" fill="#2b2b2b"/>
<rect x="761" y="912" width="44" height="26" fill="#eeeeee"/>
<rect x="764" y="915" width="38" height="20" fill="#151515"/>
<rect x="765" y="916" width="36" height="18" fill="#2b2b2b"/>
<rect x="807" y="912" width="44" height="26" fill="#eeeeee"/>
<rect x="810" y="915" width="38" height="20" fill="#151515"/>
<rect x="811" y="916" width="36" height="18" fill="#2b2b2b"/>
<rect x="853" y="912" width="44" height="26" fill="#eeeeee"/>
<rect x="856" y="915" width="38" height="20" fill="#151515"/>
<rect x="857" y="916" width="36" height="18" fill="#2b2b2b"/>
<rect x="944" y="912" width="44" height="26" fill="#eeeeee"/>
<rect x="947" y="915" width="38" height="20" fill="#151515"/>
<rect x="948" y="916" width="36" height="18" fill="#2b2b2b"/>
<rect x="1036" y="912" width="44" height="26" fill="#eeeeee"/>
<rect x="1039" y="915" width="38" height="20" fill="#151515"/>
<rect x="1040" y="916" width="36" height="18" fill="#2b2b2b"/>
<rect x="1128" y="912" width="44" height="26" fill="#eeeeee"/>
<rect x="1131" y="915" width="38" height="20" fill="#151515"/>
<rect x="1132" y="916" width="36" height="18" fill="#2b2b2b"/>
<rect x="1220" y="912" width="44" height="26" fill="#eeeeee"/>
<rect x="1223" y="915" width="38" height="20" fill="#151515"/>
<rect x="1224" y="916" width="36" height="18" fill="#2b2b2b"/>
<rect x="1265" y="912" width="44" height="26" fill="#eeeeee"/>
<rect x="1268" y="915" width="38" height="20" fill="#151515"/>
<rect x="1269" y="916" width="36" height="18" fill="#2b2b2b"/>
<rect x="1357" y="912" width="44" height="26" fill="#eeeeee"/>
<rect x="1360" y="915" width="38" height="20" fill="#151515"/>
<rect x="1361" y="916" width="36" height="18" fill="#2b2b2b"/>
<rect x="1449" y="912" width="44" height="26" fill="#eeeeee"/>
<rect x="1452" y="915" width="38" height="20" fill="#151515"/>
<rect x="1453" y="916" width="36" height="18" fill="#2b2b2b"/>
<rect x="1495" y="912" width="44" height="26" fill="#eeeeee"/>
<rect x="1498" y="915" width="38" height="20" fill="#151515"/>
<rect x="1499" y="916" width="36" height="18" fill="#2b2b2b"/>
<rect x="1541" y="912" width="44" height="26" fill="#eeeeee"/>
<rect x="1544" y="915" width="38" height="20" fill="#151515"/>
<rect x="1545" y="916" width="36" height="18" fill="#2b2b2b"/>
<rect x="1586" y="912" width="44" height="26" fill="#eeeeee"/>
<rect x="1589" y="915" width="38" height="20" fill="#151515"/>
<rect x="1590" y="916" width="36" height="18" fill="#2b2b2b"/>
<rect x="1678" y="912" width="44" height="26" fill="#eeeeee"/>
<rect x="1681" y="915" width="38" height="20" fill="#151515"/>
<rect x="1682" y="916" width="36" height="18" fill="#2b2b2b"/>
<rect x="1816" y="912" width="44" height="26" fill="#eeeeee"/>
<rect x="1819" y="915" width="38" height="20" fill="#151515"/>
<rect x="1820" y="916" width="36" height="18" fill="#2b2b2b"/>
<rect x="1862" y="912" width="44" height="26" fill="#eeeeee"/>
<rect x="1865" y="915" width="38" height="20" fill="#151515"/>
<rect x="1866" y="916" width="36" height="18" fill="#2b2b2b"/>
<rect x="1999" y="912" width="44" height="26" fill="#eeeeee"/>
<rect x="2002" y="915" width="38" height="20" fill="#151515"/>
<rect x="2003" y="916" width="36" height="18" fill="#2b2b2b"/>
<rect x="2091" y="912" width="44" height="26" fill="#eeeeee"/>
<rect x="2094" y="915" width="38" height="20" fill="#151515"/>
<rect x="2095" y="916" width="36" height="18" fill="#2b2b2b"/>
<rect x="440" y="939" width="44" height="26" fill="#eeeeee"/>
<rect x="443" y="942" width="38" height="20" fill="#151515"/>
<rect x="444" y="943" width="36" height="18" fill="#2b2b2b"/>
<rect x="486" y="939" width="44" height="26" fill="#eeeeee"/>
<rect x="489" y="942" width="38" height="20" fill="#151515"/>
<rect x="490" y="943" width="36" height="18" fill="#2b2b2b"/>
<rect x="623" y="939" width="44" height="26" fill="#eeeeee"/>
<rect x="626" y="942" width="38" height="20" fill="#151515"/>
<rect x="627" y="943" width="36" height="18" fill="#2b2b2b"/>
<rect x="669" y="939" width="44" height="26" fill="#eeeeee"/>
<rect x="672" y="942" width="38" height="20" fill="#151515"/>
<rect x="673" y="943" width="36" height="18" fill="#2b2b2b"/>
<rect x="715" y="939" width="44" height="26" fill="#eeeeee"/>
<rect x="718" y="942" width="38" height="20" fill="#151515"/>
<rect x="719" y="943" width="36" height="18" fill="#2b2b2b"/>
<rect x="761" y="939" width="44" height="26" fill="#eeeeee"/>
<rect x="764" y="942" width="38" height="20" fill="#151515"/>
<rect x="765" y="943" width="36" height="18" fill="#2b2b2b"/>
<rect x="807" y="939" width="44" height="26" fill="#eeeeee"/>
<rect x="810" y="942" width="38" height="20" fill="#151515"/>
<rect x="811" y="943" width="36" height="18" fill="#2b2b2b"/>
<rect x="853" y="939" width="44" height="26" fill="#eeeeee"/>
<rect x="856" y="942" width="38" height="20" fill="#151515"/>
<rect x="857" y="943" width="36" height="18" fill="#2b2b2b"/>
<rect x="944" y="939" width="44" height="26" fill="#eeeeee"/>
<rect x="947" y="942" width="38" height="20" fill="#151515"/>
<rect x="948" y="943" width="36" height="18" fill="#2b2b2b"/>
<rect x="1036" y="939" width="44" height="26" fill="#eeeeee"/>
<rect x="1039" y="942" width="38" height="20" fill="#151515"/>
<rect x="1040" y="943" width="36" height="18" fill="#2b2b2b"/>
<rect x="1128" y="939" width="44" height="26" fill="#eeeeee"/>
<rect x="1131" y="942" width="38" height="20" fill="#151515"/>
<rect x="1132" y="943" width="36" height="18" fill="#2b2b2b"/>
<rect x="1220" y="939" width="44" height="26" fill="#eeeeee"/>
<rect x="1223" y="942" width="38" height="20" fill="#151515"/>
<rect x="1224" y="943" width="36" height="18" fill="#2b2b2b"/>
<rect x="1265" y="939" width="44" height="26" fill="#eeeeee"/>
<rect x="1268" y="942" width="38" height="20" fill="#151515"/>
<rect x="1269" y="943" width="36" height="18" fill="#2b2b2b"/>
<rect x="1357" y="939" width="44" height="26" fill="#eeeeee"/>
<rect x="1360" y="942" width="38" height="20" fill="#151515"/>
<rect x="1361" y="943" width="36" height="18" fill="#2b2b2b"/>
<rect x="1449" y="939" width="44" height="26" fill="#eeeeee"/>
<rect x="1452" y="942" width="38" height="20" fill="#151515"/>
<rect x="1453" y="943" width="36" height="18" fill="#2b2b2b"/>
<rect x="1495" y="939" width="44" height="26" fill="#eeeeee"/>
<rect x="1498" y="942" width="38" height="20" fill="#151515"/>
<rect x="1499" y="943" width="36" height="18" fill="#2b2b2b"/>
<rect x="1541" y="939" width="44" height="26" fill="#bd7727"/>
<rect x="1544" y="942" width="38" height="20" fill="#151515"/>
<rect x="1545" y="943" width="36" height="18" fill="#2b2b2b"/>
<rect x="1586" y="939" width="44" height="26" fill="#bd7727"/>
<rect x="1589" y="942" width="38" height="20" fill="#151515"/>
<rect x="1590" y="943" width="36" height="18" fill="#2b2b2b"/>
<rect x="1678" y="939" width="44" height="26" fill="#bd7727"/>
<rect x="1681" y="942" width="38" height="20" fill="#151515"/>
<rect x="1682" y="943" width="36" height="18" fill="#2b2b2b"/>
<rect x="1816" y="939" width="44" height="26" fill="#bd7727"/>
<rect x="1819" y="942" width="38" height="20" fill="#151515"/>
<rect x="1820" y="943" width="36" height="18" fill="#2b2b2b"/>
<rect x="1862" y="939" width="44" height="26" fill="#bd7727"/>
<rect x="1865" y="942" width="38" height="20" fill="#151515"/>
<rect x="1866" y="943" width="36" height="18" fill="#2b2b2b"/>
<rect x="1999" y="939" width="44" height="26" fill="#bd7727"/>
<rect x="2002" y="942" width="38" height="20" fill="#151515"/>
<rect x="2003" y="943" width="36" height="18" fill="#2b2b2b"/>
<rect x="2091" y="939" width="44" height="26" fill="#bd7727"/>
<rect x="2094" y="942" width="38" height="20" fill="#151515"/>
<rect x="2095" y="943" width="36" height="18" fill="#2b2b2b"/>
<rect x="440" y="966" width="44" height="26" fill="#9b9b9b"/>
<rect x="486" y="966" width="44" height="26" fill="#9b9b9b"/>
<rect x="623" y="966" width="44" height="26" fill="#9b9b9b"/>
<rect x="669" y="966" width="44" height="26" fill="#9b9b9b"/>
<rect x="715" y="966" width="44" height="26" fill="#9b9b9b"/>
<rect x="761" y="966" width="44" height="26" fill="#9b9b9b"/>
<rect x="807" y="966" width="44" height="26" fill="#9b9b9b"/>
<rect x="853" y="966" width="44" height="26" fill="#9b9b9b"/>
<rect x="944" y="966" width="44" height="26" fill="#9b9b9b"/>
<rect x="1036" y="966" width="44" height="26" fill="#9b9b9b"/>
<rect x="1128" y="966" width="44" height="26" fill="#9b9b9b"/>
<rect x="1220" y="966" width="44" height="26" fill="#9b9b9b"/>
<rect x="1265" y="966" width="44" height="26" fill="#9b9b9b"/>
<rect x="1357" y="966" width="44" height="26" fill="#9b9b9b"/>
<rect x="1449" y="966" width="44" height="26" fill="#9b9b9b"/>
<rect x="1495" y="966" width="44" height="26" fill="#9b9b9b"/>
<rect x="1541" y="966" width="44" height="26" fill="#9b9b9b"/>
<rect x="1586" y="966" width="44" height="26" fill="#9b9b9b"/>
<rect x="1678" y="966" width="44" height="26" fill="#9b9b9b"/>
<rect x="1816" y="966" width="44" height="26" fill="#9b9b9b"/>
<rect x="1862" y="966" width="44" height="26" fill="#9b9b9b"/>
<rect x="1999" y="966" width="44" height="26" fill="#9b9b9b"/>
<rect x="2091" y="966" width="44" height="26" fill="#9b9b9b"/>
<rect x="440" y="993" width="44" height="26" fill="#9b9b9b"/>
<rect x="486" y="993" width="44" height="26" fill="#9b9b9b"/>
<rect x="623" y="993" width="44" height="26" fill="#9b9b9b"/>
<rect x="669" y="993" width="44" height="26" fill="#9b9b9b"/>
<rect x="715" y="993" width="44" height="26" fill="#9b9b9b"/>
<rect x="761" y="993" width="44" height="26" fill="#9b9b9b"/>
<rect x="807" y="993" width="44" height="26" fill="#9b9b9b"/>
<rect x="853" y="993" width="44" height="26" fill="#9b9b9b"/>
<rect x="944" y="993" width="44" height="26" fill="#9b9b9b"/>
<rect x="1036" y="993" width="44" height="26" fill="#9b9b9b"/>
<rect x="1128" y="993" width="44" height="26" fill="#9b9b9b"/>
<rect x="1220" y="993" width="44" height="26" fill="#9b9b9b"/>
<rect x="1265" y="993" width="44" height="26" fill="#9b9b9b"/>
<rect x="1357" y="993" width="44" height="26" fill="#9b9b9b"/>
<rect x="1449" y="993" width="44" height="26" fill="#9b9b9b"/>
<rect x="1495" y="993" width="44" height="26" fill="#9b9b9b"/>
<rect x="1541" y="993" width="44" height="26" fill="#9b9b9b"/>
<rect x="1586" y="993" width="44" height="26" fill="#9b9b9b"/>
<rect x="1678" y="993" width="44" height="26" fill="#9b9b9b"/>
<rect x="1816" y="993" width="44" height="26" fill="#9b9b9b"/>
<rect x="1862" y="993" width="44" height="26" fill="#9b9b9b"/>
<rect x="1999" y="993" width="44" height="26" fill="#9b9b9b"/>
<rect x="2091" y="993" width="44" height="26" fill="#9b9b9b"/>
<rect x="440" y="1020" width="44" height="26" fill="#9b9b9b"/>
<rect x="486" y="1020" width="44" height="26" fill="#9b9b9b"/>
<rect x="623" y="1020" width="44" height="26" fill="#9b9b9b"/>
<rect x="669" y="1020" width="44" height="26" fill="#9b9b9b"/>
<rect x="715" y="1020" width="44" height="26" fill="#9b9b9b"/>
<rect x="761" y="1020" width="44" height="26" fill="#9b9b9b"/>
<rect x="807" y="1020" width="44" height="26" fill="#9b9b9b"/>
<rect x="853" y="1020" width="44" height="26" fill="#9b9b9b"/>
<rect x="944" y="1020" width="44" height="26" fill="#9b9b9b"/>
<rect x="1036" y="1020" width="44" height="26" fill="#9b9b9b"/>
<rect x="1128" y="1020" width="44" height="26" fill="#9b9b9b"/>
<rect x="1220" y="1020" width="44" height="26" fill="#9b9b9b"/>
<rect x="1265" y="1020" width="44" height="26" fill="#9b9b9b"/>
<rect x="1357" y="1020" width="44" height="26" fill="#9b9b9b"/>
<rect x="1449" y="1020" width="44" height="26" fill="#9b9b9b"/>
<rect x="1495" y="1020" width="44" height="26" fill="#9b9b9b"/>
<rect x="1541" y="1020" width="44" height="26" fill="#ffa53b"/>
<rect x="1586" y="1020" width="44" height="26" fill="#ffa53b"/>
<rect x="1678" y="1020" width="44" height="26" fill="#ffa53b"/>
<rect x="1816" y="1020" width="44" height="26" fill="#ffa53b"/>
<rect x="1862" y="1020" width="44" height="26" fill="#ffa53b"/>
<rect x="1999" y="1020" width="44" height="26" fill="#ffa53b"/>
<rect x="2091" y="1020" width="44" height="26" fill="#ffa53b"/>
<rect x="440" y="1047" width="44" height="26" fill="#eeeeee"/>
<rect x="443" y="1050" width="38" height="20" fill="#151515"/>
<rect x="444" y="1051" width="36" height="18" fill="#2b2b2b"/>
<rect x="486" y="1047" width="44" height="26" fill="#eeeeee"/>
<rect x="489" y="1050" width="38" height="20" fill="#151515"/>
<rect x="490" y="1051" width="36" height="18" fill="#2b2b2b"/>
<rect x="623" y="1047" width="44" height="26" fill="#eeeeee"/>
<rect x="626" y="1050" width="38" height="20" fill="#151515"/>
<rect x="627" y="1051" width="36" height="18" fill="#2b2b2b"/>
<rect x="669" y="1047" width="44" height="26" fill="#eeeeee"/>
<rect x="672" y="1050" width="38" height="20" fill="#151515"/>
<rect x="673" y="1051" width="36" height="18" fill="#2b2b2b"/>
<rect x="715" y="1047" width="44" height="26" fill="#eeeeee"/>
<rect x="718" y="1050" width="38" height="20" fill="#151515"/>
<rect x="719" y="1051" width="36" height="18" fill="#2b2b2b"/>
<rect x="761" y="1047" width="44" height="26" fill="#eeeeee"/>
<rect x="764" y="1050" width="38" height="20" fill="#151515"/>
<rect x="765" y="1051" width="36" height="18" fill="#2b2b2b"/>
<rect x="807" y="1047" width="44" height="26" fill="#eeeeee"/>
<rect x="810" y="1050" width="38" height="20" fill="#151515"/>
<rect x="811" y="1051" width="36" height="18" fill="#2b2b2b"/>
<rect x="853" y="1047" width="44" height="26" fill="#eeeeee"/>
<rect x="856" y="1050" width="38" height="20" fill="#151515"/>
<rect x="857" y="1051" width="36" height="18" fill="#2b2b2b"/>
<rect x="944" y="1047" width="44" height="26" fill="#eeeeee"/>
<rect x="947" y="1050" width="38" height="20" fill="#151515"/>
<rect x="948" y="1051" width="36" height="18" fill="#2b2b2b"/>
<rect x="1036" y="1047" width="44" height="26" fill="#eeeeee"/>
<rect x="1039" y="1050" width="38" height="20" fill="#151515"/>
<rect x="1040" y="1051" width="36" height="18" fill="#2b2b2b"/>
<rect x="1128" y="1047" width="44" height="26" fill="#eeeeee"/>
<rect x="1131" y="1050" width="38" height="20" fill="#151515"/>
<rect x="1132" y="1051" width="36" height="18" fill="#2b2b2b"/>
<rect x="1220" y="1047" width="44" height="26" fill="#eeeeee"/>
<rect x="1223" y="1050" width="38" height="20" fill="#151515"/>
<rect x="1224" y="1051" width="36" height="18" fill="#2b2b2b"/>
<rect x="1265" y="1047" width="44" height="26" fill="#eeeeee"/>
<rect x="1268" y="1050" width="38" height="20" fill="#151515"/>
<rect x="1269" y="1051" width="36" height="18" fill="#2b2b2b"/>
<rect x="1357" y="1047" width="44" height="26" fill="#eeeeee"/>
<rect x="1360" y="1050" width="38" height="20" fill="#151515"/>
<rect x="1361" y="1051" width="36" height="18" fill="#2b2b2b"/>
<rect x="1449" y="1047" width="44" height="26" fill="#eeeeee"/>
<rect x="1452" y="1050" width="38" height="20" fill="#151515"/>
<rect x="1453" y="1051" width="36" height="18" fill="#2b2b2b"/>
<rect x="1495" y="1047" width="44" height="26" fill="#eeeeee"/>
<rect x="1498" y="1050" width="38" height="20" fill="#151515"/>
<rect x="1499" y="1051" width="36" height="18" fill="#2b2b2b"/>
<rect x="1541" y="1047" width="44" height="26" fill="#eeeeee"/>
<rect x="1544" y="1050" width="38" height="20" fill="#151515"/>
<rect x="1545" y="1051" width="36" height="18" fill="#2b2b2b"/>
<rect x="1586" y="1047" width="44" height="26" fill="#eeeeee"/>
<rect x="1589" y="1050" width="38" height="20" fill="#151515"/>
<rect x="1590" y="1051" width="36" height="18" fill="#2b2b2b"/>
<rect x="1678" y="1047" width="44" height="26" fill="#eeeeee"/>
<rect x="1681" y="1050" width="38" height="20" fill="#151515"/>
<rect x="1682" y="1051" width="36" height="18" fill="#2b2b2b"/>
<rect x="1816" y="1047" width="44" height="26" fill="#eeeeee"/>
<rect x="1819" y="1050" width="38" height="20" fill="#151515"/>
<rect x="1820" y="1051" width="36" height="18" fill="#2b2b2b"/>
<rect x="1862" y="1047" width="44" height="26" fill="#eeeeee"/>
<rect x="1865" y="1050" width="38" height="20" fill="#151515"/>
<rect x="1866" y="1051" width="36" height="18" fill="#2b2b2b"/>
<rect x="1999" y="1047" width="44" height="26" fill="#eeeeee"/>
<rect x="2002" y="1050" width="38" height="20" fill="#151515"/>
<rect x="2003" y="1051" width="36" height="18" fill="#2b2b2b"/>
<rect x="2091" y="1047" width="44" height="26" fill="#eeeeee"/>
<rect x="2094" y="1050" width="38" height="20" fill="#151515"/>
<rect x="2095" y="1051" width="36" height="18" fill="#2b2b2b"/>
<rect x="578" y="1074" width="44" height="26" fill="#eeeeee"/>
<rect x="581" y="1077" width="38" height="20" fill="#151515"/>
<rect x="582" y="1078" width="36" height="18" fill="#2b2b2b"/>
<rect x="623" y="1074" width="44" height="26" fill="#eeeeee"/>
<rect x="626" y="1077" width="38" height="20" fill="#151515"/>
<rect x="627" y="1078" width="36" height="18" fill="#2b2b2b"/>
<rect x="715" y="1074" width="44" height="26" fill="#eeeeee"/>
<rect x="718" y="1077" width="38" height="20" fill="#151515"/>
<rect x="719" y="1078" width="36" height="18" fill="#2b2b2b"/>
<rect x="761" y="1074" width="44" height="26" fill="#eeeeee"/>
<rect x="764" y="1077" width="38" height="20" fill="#151515"/>
<rect x="765" y="1078" width="36" height="18" fill="#2b2b2b"/>
<rect x="807" y="1074" width="44" height="26" fill="#eeeeee"/>
<rect x="810" y="1077" width="38" height="20" fill="#151515"/>
<rect x="811" y="1078" width="36" height="18" fill="#2b2b2b"/>
<rect x="853" y="1074" width="44" height="26" fill="#eeeeee"/>
<rect x="856" y="1077" width="38" height="20" fill="#151515"/>
<rect x="857" y="1078" width="36" height="18" fill="#2b2b2b"/>
<rect x="944" y="1074" width="44" height="26" fill="#eeeeee"/>
<rect x="947" y="1077" width="38" height="20" fill="#151515"/>
<rect x="948" y="1078" width="36" height="18" fill="#2b2b2b"/>
<rect x="1036" y="1074" width="44" height="26" fill="#eeeeee"/>
<rect x="1039" y="1077" width="38" height="20" fill="#151515"/>
<rect x="1040" y="1078" width="36" height="18" fill="#2b2b2b"/>
<rect x="1128" y="1074" width="44" height="26" fill="#eeeeee"/>
<rect x="1131" y="1077" width="38" height="20" fill="#151515"/>
<rect x="1132" y="1078" width="36" height="18" fill="#2b2b2b"/>
<rect x="1220" y="1074" width="44" height="26" fill="#eeeeee"/>
<rect x="1223" y="1077" width="38" height="20" fill="#151515"/>
<rect x="1224" y="1078" width="36" height="18" fill="#2b2b2b"/>
<rect x="1357" y="1074" width="44" height="26" fill="#eeeeee"/>
<rect x="1360" y="1077" width="38" height="20" fill="#151515"/>
<rect x="1361" y="1078" width="36" height="18" fill="#2b2b2b"/>
<rect x="1449" y="1074" width="44" height="26" fill="#eeeeee"/>
<rect x="1452" y="1077" width="38" height="20" fill="#151515"/>
<rect x="1453" y="1078" width="36" height="18" fill="#2b2b2b"/>
<rect x="1495" y="1074" width="44" height="26" fill="#eeeeee"/>
<rect x="1498" y="1077" width="38" height="20" fill="#151515"/>
<rect x="1499" y="1078" width="36" height="18" fill="#2b2b2b"/>
<rect x="1541" y="1074" width="44" height="26" fill="#eeeeee"/>
<rect x="1544" y="1077" width="38" height="20" fill="#151515"/>
<rect x="1545" y="1078" width="36" height="18" fill="#2b2b2b"/>
<rect x="1586" y="1074" width="44" height="26" fill="#eeeeee"/>
<rect x="1589" y="1077" width="38" height="20" fill="#151515"/>
<rect x="1590" y="1078" width="36" height="18" fill="#2b2b2b"/>
<rect x="1678" y="1074" width="44" height="26" fill="#eeeeee"/>
<rect x="1681" y="1077" width="38" height="20" fill="#151515"/>
<rect x="1682" y="1078" width="36" height="18" fill="#2b2b2b"/>
<rect x="1724" y="1074" width="44" height="26" fill="#eeeeee"/>
<rect x="1727" y="1077" width="38" height="20" fill="#151515"/>
<rect x="1728" y="1078" width="36" height="18" fill="#2b2b2b"/>
<rect x="1816" y="1074" width="44" height="26" fill="#eeeeee"/>
<rect x="1819" y="1077" width="38" height="20" fill="#151515"/>
<rect x="1820" y="1078" width="36" height="18" fill="#2b2b2b"/>
<rect x="1862" y="1074" width="44" height="26" fill="#eeeeee"/>
<rect x="1865" y="1077" width="38" height="20" fill="#151515"/>
<rect x="1866" y="1078" width="36" height="18" fill="#2b2b2b"/>
<rect x="1999" y="1074" width="44" height="26" fill="#eeeeee"/>
<rect x="2002" y="1077" width="38" height="20" fill="#151515"/>
<rect x="2003" y="1078" width="36" height="18" fill="#2b2b2b"/>
<rect x="2091" y="1074" width="44" height="26" fill="#eeeeee"/>
<rect x="2094" y="1077" width="38" height="20" fill="#151515"/>
<rect x="2095" y="1078" width="36" height="18" fill="#2b2b2b"/>
<rect x="440" y="1101" width="44" height="26" fill="#eeeeee"/>
<rect x="443" y="1104" width="38" height="20" fill="#151515"/>
<rect x="444" y="1105" width="36" height="18" fill="#2b2b2b"/>
<rect x="486" y="1101" width="44" height="26" fill="#eeeeee"/>
<rect x="489" y="1104" width="38" height="20" fill="#151515"/>
<rect x="490" y="1105" width="36" height="18" fill="#2b2b2b"/>
<rect x="623" y="1101" width="44" height="26" fill="#eeeeee"/>
<rect x="626" y="1104" width="38" height="20" fill="#151515"/>
<rect x="627" y="1105" width="36" height="18" fill="#2b2b2b"/>
<rect x="669" y="1101" width="44" height="26" fill="#eeeeee"/>
<rect x="672" y="1104" width="38" height="20" fill="#151515"/>
<rect x="673" y="1105" width="36" height="18" fill="#2b2b2b"/>
<rect x="715" y="1101" width="44" height="26" fill="#eeeeee"/>
<rect x="718" y="1104" width="38" height="20" fill="#151515"/>
<rect x="719" y="1105" width="36" height="18" fill="#2b2b2b"/>
<rect x="761" y="1101" width="44" height="26" fill="#eeeeee"/>
<rect x="764" y="1104" width="38" height="20" fill="#151515"/>
<rect x="765" y="1105" width="36" height="18" fill="#2b2b2b"/>
<rect x="807" y="1101" width="44" height="26" fill="#eeeeee"/>
<rect x="810" y="1104" width="38" height="20" fill="#151515"/>
<rect x="811" y="1105" width="36" height="18" fill="#2b2b2b"/>
<rect x="853" y="1101" width="44" height="26" fill="#eeeeee"/>
<rect x="856" y="1104" width="38" height="20" fill="#151515"/>
<rect x="857" y="1105" width="36" height="18" fill="#2b2b2b"/>
<rect x="1036" y="1101" width="44" height="26" fill="#eeeeee"/>
<rect x="1039" y="1104" width="38" height="20" fill="#151515"/>
<rect x="1040" y="1105" width="36" height="18" fill="#2b2b2b"/>
<rect x="1128" y="1101" width="44" height="26" fill="#eeeeee"/>
<rect x="1131" y="1104" width="38" height="20" fill="#151515"/>
<rect x="1132" y="1105" width="36" height="18" fill="#2b2b2b"/>
<rect x="1357" y="1101" width="44" height="26" fill="#eeeeee"/>
<rect x="1360" y="1104" width="38" height="20" fill="#151515"/>
<rect x="1361" y="1105" width="36" height="18" fill="#2b2b2b"/>
<rect x="1449" y="1101" width="44" height="26" fill="#eeeeee"/>
<rect x="1452" y="1104" width="38" height="20" fill="#151515"/>
<rect x="1453" y="1105" width="36" height="18" fill="#2b2b2b"/>
<rect x="1495" y="1101" width="44" height="26" fill="#eeeeee"/>
<rect x="1498" y="1104" width="38" height="20" fill="#151515"/>
<rect x="1499" y="1105" width="36" height="18" fill="#2b2b2b"/>
<rect x="1541" y="1101" width="44" height="26" fill="#eeeeee"/>
<rect x="1544" y="1104" width="38" height="20" fill="#151515"/>
<rect x="1545" y="1105" width="36" height="18" fill="#2b2b2b"/>
<rect x="1586" y="1101" width="44" height="26" fill="#eeeeee"/>
<rect x="1589" y="1104" width="38" height="20" fill="#151515"/>
<rect x="1590" y="1105" width="36" height="18" fill="#2b2b2b"/>
<rect x="1678" y="1101" width="44" height="26" fill="#eeeeee"/>
<rect x="1681" y="1104" width="38" height="20" fill="#151515"/>
<rect x="1682" y="1105" width="36" height="18" fill="#2b2b2b"/>
<rect x="1816" y="1101" width="44" height="26" fill="#eeeeee"/>
<rect x="1819" y="1104" width="38" height="20" fill="#151515"/>
<rect x="1820" y="1105" width="36" height="18" fill="#2b2b2b"/>
<rect x="1862" y="1101" width="44" height="26" fill="#eeeeee"/>
<rect x="1865" y="1104" width="38" height="20" fill="#151515"/>
<rect x="1866" y="1105" width="36" height="18" fill="#2b2b2b"/>
<rect x="1999" y="1101" width="44" height="26" fill="#eeeeee"/>
<rect x="2002" y="1104" width="38" height="20" fill="#151515"/>
<rect x="2003" y="1105" width="36" height="18" fill="#2b2b2b"/>
<rect x="2091" y="1101" width="44" height="26" fill="#eeeeee"/>
<rect x="2094" y="1104" width="38" height="20" fill="#151515"/>
<rect x="2095" y="1105" width="36" height="18" fill="#2b2b2b"/>
<rect x="440" y="1128" width="44" height="26" fill="#eeeeee"/>
<rect x="443" y="1131" width="38" height="20" fill="#151515"/>
<rect x="444" y="1132" width="36" height="18" fill="#2b2b2b"/>
<rect x="486" y="1128" width="44" height="26" fill="#eeeeee"/>
<rect x="489" y="1131" width="38" height="20" fill="#151515"/>
<rect x="490" y="1132" width="36" height="18" fill="#2b2b2b"/>
<rect x="623" y="1128" width="44" height="26" fill="#eeeeee"/>
<rect x="626" y="1131" width="38" height="20" fill="#151515"/>
<rect x="627" y="1132" width="36" height="18" fill="#2b2b2b"/>
<rect x="669" y="1128" width="44" height="26" fill="#eeeeee"/>
<rect x="672" y="1131" width="38" height="20" fill="#151515"/>
<rect x="673" y="1132" width="36" height="18" fill="#2b2b2b"/>
<rect x="715" y="1128" width="44" height="26" fill="#eeeeee"/>
<rect x="718" y="1131" width="38" height="20" fill="#151515"/>
<rect x="719" y="1132" width="36" height="18" fill="#2b2b2b"/>
<rect x="761" y="1128" width="44" height="26" fill="#eeeeee"/>
<rect x="764" y="1131" width="38" height="20" fill="#151515"/>
<rect x="765" y="1132" width="36" height="18" fill="#2b2b2b"/>
<rect x="807" y="1128" width="44" height="26" fill="#eeeeee"/>
<rect x="810" y="1131" width="38" height="20" fill="#151515"/>
<rect x="811" y="1132" width="36" height="18" fill="#2b2b2b"/>
<rect x="853" y="1128" width="44" height="26" fill="#eeeeee"/>
<rect x="856" y="1131" width="38" height="20" fill="#151515"/>
<rect x="857" y="1132" width="36" height="18" fill="#2b2b2b"/>
<rect x="944" y="1128" width="44" height="26" fill="#eeeeee"/>
<rect x="947" y="1131" width="38" height="20" fill="#151515"/>
<rect x="948" y="1132" width="36" height="18" fill="#2b2b2b"/>
<rect x="1036" y="1128" width="44" height="26" fill="#eeeeee"/>
<rect x="1039" y="1131" width="38" height="20" fill="#151515"/>
<rect x="1040" y="1132" width="36" height="18" fill="#2b2b2b"/>
<rect x="1128" y="1128" width="44" height="26" fill="#eeeeee"/>
<rect x="1131" y="1131" width="38" height="20" fill="#151515"/>
<rect x="1132" y="1132" width="36" height="18" fill="#2b2b2b"/>
<rect x="1220" y="1128" width="44" height="26" fill="#eeeeee"/>
<rect x="1223" y="1131" width="38" height="20" fill="#151515"/>
<rect x="1224" y="1132" width="36" height="18" fill="#2b2b2b"/>
<rect x="1265" y="1128" width="44" height="26" fill="#eeeeee"/>
<rect x="1268" y="1131" width="38" height="20" fill="#151515"/>
<rect x="1269" y="1132" width="36" height="18" fill="#2b2b2b"/>
<rect x="1357" y="1128" width="44" height="26" fill="#eeeeee"/>
<rect x="1360" y="1131" width="38" height="20" fill="#151515"/>
<rect x="1361" y="1132" width="36" height="18" fill="#2b2b2b"/>
<rect x="1449" y="1128" width="44" height="26" fill="#eeeeee"/>
<rect x="1452" y="1131" width="38" height="20" fill="#151515"/>
<rect x="1453" y="1132" width="36" height="18" fill="#2b2b2b"/>
<rect x="1495" y="1128" width="44" height="26" fill="#eeeeee"/>
<rect x="1498" y="1131" width="38" height="20" fill="#151515"/>
<rect x="1499" y="1132" width="36" height="18" fill="#2b2b2b"/>
<rect x="1541" y="1128" width="44" height="26" fill="#eeeeee"/>
<rect x="1544" y="1131" width="38" height="20" fill="#151515"/>
<rect x="1545" y="1132" width="36" height="18" fill="#2b2b2b"/>
<rect x="1586" y="1128" width="44" height="26" fill="#eeeeee"/>
<rect x="1589" y="1131" width="38" height="20" fill="#151515"/>
<rect x="1590" y="1132" width="36" height="18" fill="#2b2b2b"/>
<rect x="1678" y="1128" width="44" height="26" fill="#eeeeee"/>
<rect x="1681" y="1131" width="38" height="20" fill="#151515"/>
<rect x="1682" y="1132" width="36" height="18" fill="#2b2b2b"/>
<rect x="1816" y="1128" width="44" height="26" fill="#eeeeee"/>
<rect x="1819" y="1131" width="38" height="20" fill="#151515"/>
<rect x="1820" y="1132" width="36" height="18" fill="#2b2b2b"/>
<rect x="1862" y="1128" width="44" height="26" fill="#eeeeee"/>
<rect x="1865" y="1131" width="38" height="20" fill="#151515"/>
<rect x="1866" y="1132" width="36" height="18" fill="#2b2b2b"/>
<rect x="1999" y="1128" width="44" height="26" fill="#eeeeee"/>
<rect x="2002" y="1131" width="38" height="20" fill="#151515"/>
<rect x="2003" y="1132" width="36" height="18" fill="#2b2b2b"/>
<rect x="2091" y="1128" width="44" height="26" fill="#eeeeee"/>
<rect x="2094" y="1131" width="38" height="20" fill="#151515"/>
<rect x="2095" y="1132" width="36" height="18" fill="#2b2b2b"/>
<rect x="440" y="1155" width="44" height="26" fill="#eeeeee"/>
<rect x="443" y="1158" width="38" height="20" fill="#151515"/>
<rect x="444" y="1159" width="36" height="18" fill="#2b2b2b"/>
<rect x="486" y="1155" width="44" height="26" fill="#eeeeee"/>
<rect x="489" y="1158" width="38" height="20" fill="#151515"/>
<rect x="490" y="1159" width="36" height="18" fill="#2b2b2b"/>
<rect x="623" y="1155" width="44" height="26" fill="#eeeeee"/>
<rect x="626" y="1158" width="38" height="20" fill="#151515"/>
<rect x="627" y="1159" width="36" height="18" fill="#2b2b2b"/>
<rect x="669" y="1155" width="44" height="26" fill="#eeeeee"/>
<rect x="672" y="1158" width="38" height="20" fill="#151515"/>
<rect x="673" y="1159" width="36" height="18" fill="#2b2b2b"/>
<rect x="715" y="1155" width="44" height="26" fill="#eeeeee"/>
<rect x="718" y="1158" width="38" height="20" fill="#151515"/>
<rect x="719" y="1159" width="36" height="18" fill="#2b2b2b"/>
<rect x="761" y="1155" width="44" height="26" fill="#eeeeee"/>
<rect x="764" y="1158" width="38" height="20" fill="#151515"/>
<rect x="765" y="1159" width="36" height="18" fill="#2b2b2b"/>
<rect x="807" y="1155" width="44" height="26" fill="#eeeeee"/>
<rect x="810" y="1158" width="38" height="20" fill="#151515"/>
<rect x="811" y="1159" width="36" height="18" fill="#2b2b2b"/>
<rect x="853" y="1155" width="44" height="26" fill="#eeeeee"/>
<rect x="856" y="1158" width="38" height="20" fill="#151515"/>
<rect x="857" y="1159" width="36" height="18" fill="#2b2b2b"/>
<rect x="944" y="1155" width="44" height="26" fill="#eeeeee"/>
<rect x="947" y="1158" width="38" height="20" fill="#151515"/>
<rect x="948" y="1159" width="36" height="18" fill="#2b2b2b"/>
<rect x="1036" y="1155" width="44" height="26" fill="#eeeeee"/>
<rect x="1039" y="1158" width="38" height="20" fill="#151515"/>
<rect x="1040" y="1159" width="36" height="18" fill="#2b2b2b"/>
<rect x="1128" y="1155" width="44" height="26" fill="#eeeeee"/>
<rect x="1131" y="1158" width="38" height="20" fill="#151515"/>
<rect x="1132" y="1159" width="36" height="18" fill="#2b2b2b"/>
<rect x="1220" y="1155" width="44" height="26" fill="#eeeeee"/>
<rect x="1223" y="1158" width="38" height="20" fill="#151515"/>
<rect x="1224" y="1159" width="36" height="18" fill="#2b2b2b"/>
<rect x="1265" y="1155" width="44" height="26" fill="#eeeeee"/>
<rect x="1268" y="1158" width="38" height="20" fill="#151515"/>
<rect x="1269" y="1159" width="36" height="18" fill="#2b2b2b"/>
<rect x="1357" y="1155" width="44" height="26" fill="#eeeeee"/>
<rect x="1360" y="1158" width="38" height="20" fill="#151515"/>
<rect x="1361" y="1159" width="36" height="18" fill="#2b2b2b"/>
<rect x="1449" y="1155" width="44" height="26" fill="#eeeeee"/>
<rect x="1452" y="1158" width="38" height="20" fill="#151515"/>
<rect x="1453" y="1159" width="36" height="18" fill="#2b2b2b"/>
<rect x="1495" y="1155" width="44" height="26" fill="#eeeeee"/>
<rect x="1498" y="1158" width="38" height="20" fill="#151515"/>
<rect x="1499" y="1159" width="36" height="18" fill="#2b2b2b"/>
<rect x="1541" y="1155" width="44" height="26" fill="#eeeeee"/>
<rect x="1544" y="1158" width="38" height="20" fill="#151515"/>
<rect x="1545" y="1159" width="36" height="18" fill="#2b2b2b"/>
<rect x="1586" y="1155" width="44" height="26" fill="#eeeeee"/>
<rect x="1589" y="1158" width="38" height="20" fill="#151515"/>
<rect x="1590" y="1159" width="36" height="18" fill="#2b2b2b"/>
<rect x="1678" y="1155" width="44" height="26" fill="#eeeeee"/>
<rect x="1681" y="1158" width="38" height="20" fill="#151515"/>
<rect x="1682" y="1159" width="36" height="18" fill="#2b2b2b"/>
<rect x="1816" y="1155" width="44" height="26" fill="#eeeeee"/>
<rect x="1819" y="1158" width="38" height="20" fill="#151515"/>
<rect x="1820" y="1159" width="36" height="18" fill="#2b2b2b"/>
<rect x="1862" y="1155" width="44" height="26" fill="#eeeeee"/>
<rect x="1865" y="1158" width="38" height="20" fill="#151515"/>
<rect x="1866" y="1159" width="36" height="18" fill="#2b2b2b"/>
<rect x="1999" y="1155" width="44" height="26" fill="#eeeeee"/>
<rect x="2002" y="1158" width="38" height="20" fill="#151515"/>
<rect x="2003" y="1159" width="36" height="18" fill="#2b2b2b"/>
<rect x="2091" y="1155" width="44" height="26" fill="#eeeeee"/>
<rect x="2094" y="1158" width="38" height="20" fill="#151515"/>
<rect x="2095" y="1159" width="36" height="18" fill="#2b2b2b"/>
<rect x="440" y="1182" width="44" height="26" fill="#eeeeee"/>
<rect x="443" y="1185" width="38" height="20" fill="#151515"/>
<rect x="444" y="1186" width="36" height="18" fill="#2b2b2b"/>
<rect x="486" y="1182" width="44" height="26" fill="#eeeeee"/>
<rect x="489" y="1185" width="38" height="20" fill="#151515"/>
<rect x="490" y="1186" width="36" height="18" fill="#2b2b2b"/>
<rect x="623" y="1182" width="44" height="26" fill="#eeeeee"/>
<rect x="626" y="1185" width="38" height="20" fill="#151515"/>
<rect x="627" y="1186" width="36" height="18" fill="#2b2b2b"/>
<rect x="669" y="1182" width="44" height="26" fill="#eeeeee"/>
<rect x="672" y="1185" width="38" height="20" fill="#151515"/>
<rect x="673" y="1186" width="36" height="18" fill="#2b2b2b"/>
<rect x="715" y="1182" width="44" height="26" fill="#eeeeee"/>
<rect x="718" y="1185" width="38" height="20" fill="#151515"/>
<rect x="719" y="1186" width="36" height="18" fill="#2b2b2b"/>
<rect x="761" y="1182" width="44" height="26" fill="#eeeeee"/>
<rect x="764" y="1185" width="38" height="20" fill="#151515"/>
<rect x="765" y="1186" width="36" height="18" fill="#2b2b2b"/>
<rect x="807" y="1182" width="44" height="26" fill="#eeeeee"/>
<rect x="810" y="1185" width="38" height="20" fill="#151515"/>
<rect x="811" y="1186" width="36" height="18" fill="#2b2b2b"/>
<rect x="853" y="1182" width="44" height="26" fill="#eeeeee"/>
<rect x="856" y="1185" width="38" height="20" fill="#151515"/>
<rect x="857" y="1186" width="36" height="18" fill="#2b2b2b"/>
<rect x="944" y="1182" width="44" height="26" fill="#eeeeee"/>
<rect x="947" y="1185" width="38" height="20" fill="#151515"/>
<rect x="948" y="1186" width="36" height="18" fill="#2b2b2b"/>
<rect x="1036" y="1182" width="44" height="26" fill="#eeeeee"/>
<rect x="1039" y="1185" width="38" height="20" fill="#151515"/>
<rect x="1040" y="1186" width="36" height="18" fill="#2b2b2b"/>
<rect x="1128" y="1182" width="44" height="26" fill="#eeeeee"/>
<rect x="1131" y="1185" width="38" height="20" fill="#151515"/>
<rect x="1132" y="1186" width="36" height="18" fill="#2b2b2b"/>
<rect x="1220" y="1182" width="44" height="26" fill="#eeeeee"/>
<rect x="1223" y="1185" width="38" height="20" fill="#151515"/>
<rect x="1224" y="1186" width="36" height="18" fill="#2b2b2b"/>
<rect x="1265" y="1182" width="44" height="26" fill="#eeeeee"/>
<rect x="1268" y="1185" width="38" height="20" fill="#151515"/>
<rect x="1269" y="1186" width="36" height="18" fill="#2b2b2b"/>
<rect x="1357" y="1182" width="44" height="26" fill="#eeeeee"/>
<rect x="1360" y="1185" width="38" height="20" fill="#151515"/>
<rect x="1361" y="1186" width="36" height="18" fill="#2b2b2b"/>
<rect x="1449" y="1182" width="44" height="26" fill="#eeeeee"/>
<rect x="1452" y="1185" width="38" height="20" fill="#151515"/>
<rect x="1453" y="1186" width="36" height="18" fill="#2b2b2b"/>
<rect x="1495" y="1182" width="44" height="26" fill="#eeeeee"/>
<rect x="1498" y="1185" width="38" height="20" fill="#151515"/>
<rect x="1499" y="1186" width="36" height="18" fill="#2b2b2b"/>
<rect x="1541" y="1182" width="44" height="26" fill="#eeeeee"/>
<rect x="1544" y="1185" width="38" height="20" fill="#151515"/>
<rect x="1545" y="1186" width="36" height="18" fill="#2b2b2b"/>
<rect x="1586" y="1182" width="44" height="26" fill="#eeeeee"/>
<rect x="1589" y="1185" width="38" height="20" fill="#151515"/>
<rect x="1590" y="1186" width="36" height="18" fill="#2b2b2b"/>
<rect x="1678" y="1182" width="44" height="26" fill="#eeeeee"/>
<rect x="1681" y="1185" width="38" height="20" fill="#151515"/>
<rect x="1682" y="1186" width="36" height="18" fill="#2b2b2b"/>
<rect x="1816" y="1182" width="44" height="26" fill="#eeeeee"/>
<rect x="1819" y="1185" width="38" height="20" fill="#151515"/>
<rect x="1820" y="1186" width="36" height="18" fill="#2b2b2b"/>
<rect x="1862" y="1182" width="44" height="26" fill="#eeeeee"/>
<rect x="1865" y="1185" width="38" height="20" fill="#151515"/>
<rect x="1866" y="1186" width="36" height="18" fill="#2b2b2b"/>
<rect x="1999" y="1182" width="44" height="26" fill="#eeeeee"/>
<rect x="2002" y="1185" width="38" height="20" fill="#151515"/>
<rect x="2003" y="1186" width="36" height="18" fill="#2b2b2b"/>
<rect x="2091" y="1182" width="44" height="26" fill="#eeeeee"/>
<rect x="2094" y="1185" width="38" height="20" fill="#151515"/>
<rect x="2095" y="1186" width="36" height="18" fill="#2b2b2b"/>
<rect x="440" y="1209" width="44" height="26" fill="#eeeeee"/>
<rect x="443" y="1212" width="38" height="20" fill="#151515"/>
<rect x="444" y="1213" width="36" height="18" fill="#2b2b2b"/>
<rect x="486" y="1209" width="44" height="26" fill="#eeeeee"/>
<rect x="489" y="1212" width="38" height="20" fill="#151515"/>
<rect x="490" y="1213" width="36" height="18" fill="#2b2b2b"/>
<rect x="623" y="1209" width="44" height="26" fill="#eeeeee"/>
<rect x="626" y="1212" width="38" height="20" fill="#151515"/>
<rect x="627" y="1213" width="36" height="18" fill="#2b2b2b"/>
<rect x="669" y="1209" width="44" height="26" fill="#eeeeee"/>
<rect x="672" y="1212" width="38" height="20" fill="#151515"/>
<rect x="673" y="1213" width="36" height="18" fill="#2b2b2b"/>
<rect x="715" y="1209" width="44" height="26" fill="#eeeeee"/>
<rect x="718" y="1212" width="38" height="20" fill="#151515"/>
<rect x="719" y="1213" width="36" height="18" fill="#2b2b2b"/>
<rect x="761" y="1209" width="44" height="26" fill="#eeeeee"/>
<rect x="764" y="1212" width="38" height="20" fill="#151515"/>
<rect x="765" y="1213" width="36" height="18" fill="#2b2b2b"/>
<rect x="807" y="1209" width="44" height="26" fill="#eeeeee"/>
<rect x="810" y="1212" width="38" height="20" fill="#151515"/>
<rect x="811" y="1213" width="36" height="18" fill="#2b2b2b"/>
<rect x="853" y="1209" width="44" height="26" fill="#eeeeee"/>
<rect x="856" y="1212" width="38" height="20" fill="#151515"/>
<rect x="857" y="1213" width="36" height="18" fill="#2b2b2b"/>
<rect x="944" y="1209" width="44" height="26" fill="#eeeeee"/>
<rect x="947" y="1212" width="38" height="20" fill="#151515"/>
<rect x="948" y="1213" width="36" height="18" fill="#2b2b2b"/>
<rect x="1036" y="1209" width="44" height="26" fill="#eeeeee"/>
<rect x="1039" y="1212" width="38" height="20" fill="#151515"/>
<rect x="1040" y="1213" width="36" height="18" fill="#2b2b2b"/>
<rect x="1128" y="1209" width="44" height="26" fill="#eeeeee"/>
<rect x="1131" y="1212" width="38" height="20" fill="#151515"/>
<rect x="1132" y="1213" width="36" height="18" fill="#2b2b2b"/>
<rect x="1220" y="1209" width="44" height="26" fill="#eeeeee"/>
<rect x="1223" y="1212" width="38" height="20" fill="#151515"/>
<rect x="1224" y="1213" width="36" height="18" fill="#2b2b2b"/>
<rect x="1265" y="1209" width="44" height="26" fill="#eeeeee"/>
<rect x="1268" y="1212" width="38" height="20" fill="#151515"/>
<rect x="1269" y="1213" width="36" height="18" fill="#2b2b2b"/>
<rect x="1357" y="1209" width="44" height="26" fill="#eeeeee"/>
<rect x="1360" y="1212" width="38" height="20" fill="#151515"/>
<rect x="1361" y="1213" width="36" height="18" fill="#2b2b2b"/>
<rect x="1449" y="1209" width="44" height="26" fill="#eeeeee"/>
<rect x="1452" y="1212" width="38" height="20" fill="#151515"/>
<rect x="1453" y="1213" width="36" height="18" fill="#2b2b2b"/>
<rect x="1495" y="1209" width="44" height="26" fill="#eeeeee"/>
<rect x="1498" y="1212" width="38" height="20" fill="#151515"/>
<rect x="1499" y="1213" width="36" height="18" fill="#2b2b2b"/>
<rect x="1541" y="1209" width="44" height="26" fill="#eeeeee"/>
<rect x="1544" y="1212" width="38" height="20" fill="#151515"/>
<rect x="1545" y="1213" width="36" height="18" fill="#2b2b2b"/>
<rect x="1586" y="1209" width="44" height="26" fill="#eeeeee"/>
<rect x="1589" y="1212" width="38" height="20" fill="#151515"/>
<rect x="1590" y="1213" width="36" height="18" fill="#2b2b2b"/>
<rect x="1678" y="1209" width="44" height="26" fill="#eeeeee"/>
<rect x="1681" y="1212" width="38" height="20" fill="#151515"/>
<rect x="1682" y="1213" width="36" height="18" fill="#2b2b2b"/>
<rect x="1816" y="1209" width="44" height="26" fill="#eeeeee"/>
<rect x="1819" y="1212" width="38" height="20" fill="#151515"/>
<rect x="1820" y="1213" width="36" height="18" fill="#2b2b2b"/>
<rect x="1862" y="1209" width="44" height="26" fill="#eeeeee"/>
<rect x="1865" y="1212" width="38" height="20" fill="#151515"/>
<rect x="1866" y="1213" width="36" height="18" fill="#2b2b2b"/>
<rect x="1999" y="1209" width="44" height="26" fill="#eeeeee"/>
<rect x="2002" y="1212" width="38" height="20" fill="#151515"/>
<rect x="2003" y="1213" width="36" height="18" fill="#2b2b2b"/>
<rect x="2091" y="1209" width="44" height="26" fill="#eeeeee"/>
<rect x="2094" y="1212" width="38" height="20" fill="#151515"/>
<rect x="2095" y="1213" width="36" height="18" fill="#2b2b2b"/>
<rect x="532" y="1236" width="44" height="26" fill="#eeeeee"/>
<rect x="535" y="1239" width="38" height="20" fill="#151515"/>
<rect x="536" y="1240" width="36" height="18" fill="#2b2b2b"/>
<rect x="1220" y="1236" width="44" height="26" fill="#eeeeee"/>
<rect x="1223" y="1239" width="38" height="20" fill="#151515"/>
<rect x="1224" y="1240" width="36" height="18" fill="#2b2b2b"/>
<rect x="1540.5" y="183" width="1.8" height="1168" fill="#9a5e1e"/>
<rect x="2135.5" y="183" width="1.8" height="1168" fill="#9a5e1e"/>
<text x="415.14" y="150.8" font-size="17" fill="#b6b6b6" text-anchor="middle">2</text>
<text x="461" y="150.8" font-size="17" fill="#b6b6b6" text-anchor="middle">3</text>
<text x="506.86" y="150.8" font-size="17" fill="#b6b6b6" text-anchor="middle">4</text>
<text x="552.72" y="150.8" font-size="17" fill="#b6b6b6" text-anchor="middle">5</text>
<text x="598.58" y="150.8" font-size="17" fill="#b6b6b6" text-anchor="middle">6</text>
<text x="644.44" y="150.8" font-size="17" fill="#b6b6b6" text-anchor="middle">7</text>
<text x="690.3" y="150.8" font-size="17" fill="#b6b6b6" text-anchor="middle">8</text>
<text x="736.16" y="150.8" font-size="17" fill="#b6b6b6" text-anchor="middle">9</text>
<text x="782.02" y="150.8" font-size="17" fill="#b6b6b6" text-anchor="middle">10</text>
<text x="827.88" y="150.8" font-size="17" fill="#b6b6b6" text-anchor="middle">11</text>
<text x="873.74" y="150.8" font-size="17" fill="#b6b6b6" text-anchor="middle">12</text>
<text x="919.6" y="150.8" font-size="17" fill="#b6b6b6" text-anchor="middle">13</text>
<text x="965.46" y="150.8" font-size="17" fill="#b6b6b6" text-anchor="middle">14</text>
<text x="1011.32" y="150.8" font-size="17" fill="#b6b6b6" text-anchor="middle">15</text>
<text x="1057.18" y="150.8" font-size="17" fill="#b6b6b6" text-anchor="middle">16</text>
<text x="1103.04" y="150.8" font-size="17" fill="#b6b6b6" text-anchor="middle">17</text>
<text x="1148.9" y="150.8" font-size="17" fill="#b6b6b6" text-anchor="middle">18</text>
<text x="1194.76" y="150.8" font-size="17" fill="#b6b6b6" text-anchor="middle">19</text>
<text x="1240.62" y="150.8" font-size="17" fill="#b6b6b6" text-anchor="middle">20</text>
<text x="1286.48" y="150.8" font-size="17" fill="#b6b6b6" text-anchor="middle">21</text>
<text x="1332.34" y="150.8" font-size="17" fill="#b6b6b6" text-anchor="middle">22</text>
<text x="1378.2" y="150.8" font-size="17" fill="#b6b6b6" text-anchor="middle">23</text>
<text x="1469.92" y="150.8" font-size="17" fill="#b6b6b6" text-anchor="middle">25</text>
<text x="1515.78" y="150.8" font-size="17" fill="#b6b6b6" text-anchor="middle">26</text>
<text x="1561.64" y="150.8" font-size="17" fill="#b6b6b6" text-anchor="middle">27</text>
<text x="1607.5" y="150.8" font-size="17" fill="#b6b6b6" text-anchor="middle">28</text>
<text x="1653.36" y="150.8" font-size="17" fill="#b6b6b6" text-anchor="middle">29</text>
<text x="1699.22" y="150.8" font-size="17" fill="#b6b6b6" text-anchor="middle">30</text>
<text x="1745.08" y="150.8" font-size="17" fill="#b6b6b6" text-anchor="middle">31</text>
<text x="1790.94" y="150.8" font-size="17" fill="#b6b6b6" text-anchor="middle">32</text>
<text x="1836.8" y="150.8" font-size="17" fill="#b6b6b6" text-anchor="middle">33</text>
<text x="1882.66" y="150.8" font-size="17" fill="#b6b6b6" text-anchor="middle">34</text>
<text x="1928.52" y="150.8" font-size="17" fill="#b6b6b6" text-anchor="middle">35</text>
<text x="1974.38" y="150.8" font-size="17" fill="#b6b6b6" text-anchor="middle">36</text>
<text x="2020.24" y="150.8" font-size="17" fill="#b6b6b6" text-anchor="middle">37</text>
<text x="2066.1" y="150.8" font-size="17" fill="#b6b6b6" text-anchor="middle">38</text>
<text x="2111.96" y="150.8" font-size="17" fill="#b6b6b6" text-anchor="middle">39</text>
<text x="2157.82" y="150.8" font-size="17" fill="#b6b6b6" text-anchor="middle">40</text>
<text x="2203.68" y="150.8" font-size="17" fill="#b6b6b6" text-anchor="middle">41</text>
<text x="2249.54" y="150.8" font-size="17" fill="#b6b6b6" text-anchor="middle">42</text>
<rect x="1424" y="133" width="49" height="22" fill="#6f71b5"/>
<rect x="1478" y="133" width="22.5" height="22" fill="#3a3a3a"/>
<text x="1487.5" y="150.8" font-size="17" fill="#7274c0" text-anchor="middle" textLength="18" lengthAdjust="spacingAndGlyphs">24</text>
<rect x="1425" y="130" width="2" height="1221" fill="#6f71b5"/>
</svg>
</body></html>
